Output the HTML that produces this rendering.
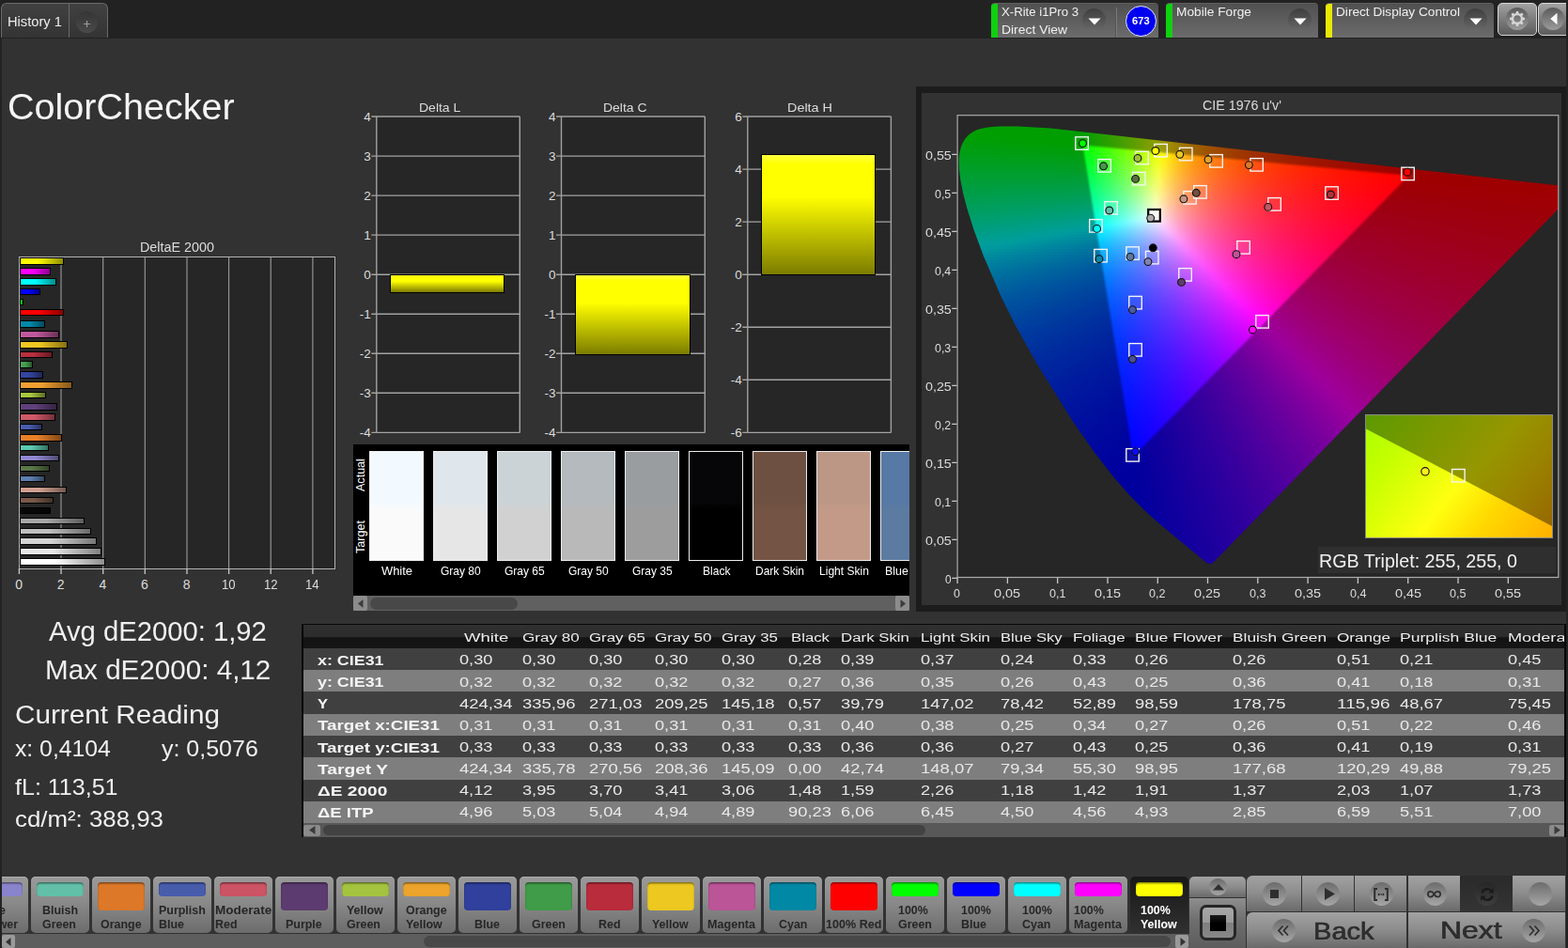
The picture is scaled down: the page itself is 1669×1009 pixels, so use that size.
<!DOCTYPE html>
<html lang="en"><head><meta charset="utf-8"><title>ColorChecker</title>
<style>
html,body{margin:0;padding:0}
body{width:1669px;height:1009px;background:#323232;position:relative;font-family:"Liberation Sans",sans-serif;color:#e6e6e6}
div,span.t,i,svg{position:absolute}
i{display:block}
.t{white-space:nowrap;line-height:1;transform-origin:0 0}
.cl{overflow:hidden}
#r{left:0;top:0;width:1669px;height:1009px;overflow:hidden;background:#323232}
svg{overflow:visible}

.tab{background:linear-gradient(#414141,#343434);border:1px solid #6a6a6a;border-bottom:none;box-sizing:border-box}
.dev{background:linear-gradient(#505050,#6c6c6c);border-radius:4px 4px 0 0;box-sizing:border-box;border-top:1px solid #5e5e5e;overflow:hidden}
.rb{border-radius:50%;background:linear-gradient(#3e3e3e,#6a6a6a)}

.pb{background:linear-gradient(#9a9a9a,#8a8a8a 45%,#6c6c6c);border-radius:5px;box-shadow:inset 0 1px 0 #adadad}
.sw{border-radius:4px;box-shadow:inset 0 1.5px 1.5px rgba(0,0,0,.45)}
.cb{background:linear-gradient(#a2a2a2,#8c8c8c 50%,#6a6a6a)}
.ci{border-radius:50%;background:linear-gradient(#6c6c6c,#a6a6a6)}
</style></head>
<body>
<div id="r">
<!-- p_frame -->
<div style="left:0px;top:0px;width:1669px;height:41px;background:#222"></div>
<!-- p_top -->
<div class="tab" style="left:1px;top:3px;width:73px;height:37px;border-radius:6px 0 0 0;border-right:none"></div><div class="tab" style="left:73px;top:3px;width:42px;height:37px;border-radius:0 6px 0 0"></div><div style="left:80.5px;top:12px;width:23px;height:23px;border-radius:50%;background:linear-gradient(#353535,#4a4a4a)"></div><span class="t" style="left:8.0px;top:16.2px;font-size:14.2px;color:#ececec;transform:scaleX(1.035);">History 1</span><svg width="9" height="9" style="left:88px;top:21px" viewBox="0 0 9 9"><path d="M4.5 1v7M1 4.5h7" stroke="#999" stroke-width="1.2"/></svg><div class="dev" style="left:1055px;top:3px;width:178px;height:37px;"><div style="left:0;top:0;width:7px;height:38px;background:#10d010"></div><div style="left:132px;top:4px;width:1px;height:34px;background:#555"></div><div style="left:133px;top:4px;width:1px;height:34px;background:#7a7a7a"></div></div><div class="rb" style="left:1152px;top:9px;width:25px;height:25px;"></div><svg width="14" height="8" style="left:1157.5px;top:18.5px" viewBox="0 0 14 8"><path d="M0.5 0.5h13L7 7.5z" fill="#fff"/></svg><span class="t" style="left:1066.0px;top:5.8px;font-size:13.5px;color:#f0f0f0;transform:scaleX(0.976);">X-Rite i1Pro 3</span><span class="t" style="left:1066.0px;top:24.6px;font-size:13.5px;color:#f0f0f0;transform:scaleX(1.029);">Direct View</span><div style="left:1197.5px;top:5.5px;width:33px;height:33px;border-radius:50%;background:#0000f0;border:1.5px solid #e8e8ff;box-sizing:border-box"></div><span class="t" style="left:1205.0px;top:16.2px;font-size:11.6px;font-weight:700;color:#fff;transform:scaleX(0.961);">673</span><div class="dev" style="left:1241px;top:3px;width:162px;height:37px;"><div style="left:0;top:0;width:7px;height:38px;background:#10d010"></div></div><span class="t" style="left:1252.0px;top:5.8px;font-size:13.5px;color:#f0f0f0;transform:scaleX(1.015);">Mobile Forge</span><div class="rb" style="left:1371px;top:9px;width:25px;height:25px;"></div><svg width="14" height="8" style="left:1376.5px;top:18.5px" viewBox="0 0 14 8"><path d="M0.5 0.5h13L7 7.5z" fill="#fff"/></svg><div class="dev" style="left:1411px;top:3px;width:179px;height:37px;"><div style="left:0;top:0;width:7px;height:38px;background:#e8e800"></div></div><span class="t" style="left:1422.0px;top:5.8px;font-size:13.5px;color:#f0f0f0;transform:scaleX(1.011);">Direct Display Control</span><div class="rb" style="left:1558px;top:9px;width:25px;height:25px;"></div><svg width="14" height="8" style="left:1563.5px;top:18.5px" viewBox="0 0 14 8"><path d="M0.5 0.5h13L7 7.5z" fill="#fff"/></svg><div style="left:1594px;top:3px;width:41.8px;height:35px;border-radius:5px;border:1.2px solid #d6d6d6;box-sizing:border-box;background:linear-gradient(#a2a2a2,#808080 45%,#5c5c5c)"></div><div style="left:1602.8px;top:8.3px;width:24px;height:24px;border-radius:50%;background:linear-gradient(#5a5a5a,#9c9c9c)"></div><svg width="18" height="18" style="left:1606px;top:11.1px" viewBox="-9 -9 18 18"><g fill="#d6d6d6"><path d="M-1.9 -5.2L-1 -8h2l.9 2.800z" transform="rotate(0)"/><path d="M-1.9 -5.2L-1 -8h2l.9 2.800z" transform="rotate(45)"/><path d="M-1.9 -5.2L-1 -8h2l.9 2.800z" transform="rotate(90)"/><path d="M-1.9 -5.2L-1 -8h2l.9 2.800z" transform="rotate(135)"/><path d="M-1.9 -5.2L-1 -8h2l.9 2.800z" transform="rotate(180)"/><path d="M-1.9 -5.2L-1 -8h2l.9 2.800z" transform="rotate(225)"/><path d="M-1.9 -5.2L-1 -8h2l.9 2.800z" transform="rotate(270)"/><path d="M-1.9 -5.2L-1 -8h2l.9 2.800z" transform="rotate(315)"/></g><circle r="4.9" fill="none" stroke="#d6d6d6" stroke-width="2.2"/></svg><div style="left:1636.9px;top:3px;width:42px;height:35px;border-radius:5px;border:1.2px solid #d6d6d6;box-sizing:border-box;background:linear-gradient(#a2a2a2,#808080 45%,#5c5c5c)"></div><div style="left:1641.4px;top:8.3px;width:24px;height:24px;border-radius:50%;background:linear-gradient(#5a5a5a,#9c9c9c)"></div><svg width="8" height="14" style="left:1649.8px;top:12.8px" viewBox="0 0 8 14"><path d="M7.500 .7v12.600L.3 7z" fill="#fff"/></svg>
<!-- p_left -->
<span class="t" style="left:7.8px;top:96.1px;font-size:37.9px;color:#f4f4f4;transform:scaleX(1.043);">ColorChecker</span><span class="t" style="left:148.6px;top:255.9px;font-size:14px;color:#dcdcdc;transform:scaleX(1.025);">DeltaE 2000</span><div style="left:20px;top:273px;width:335px;height:331px;background:#262626;border:1px solid #b2b2b2;box-sizing:content-box"></div><span class="t" style="left:16.2px;top:614.6px;font-size:14px;color:#dcdcdc;">0</span><span class="t" style="left:60.8px;top:614.6px;font-size:14px;color:#dcdcdc;">2</span><span class="t" style="left:105.5px;top:614.6px;font-size:14px;color:#dcdcdc;">4</span><span class="t" style="left:150.1px;top:614.6px;font-size:14px;color:#dcdcdc;">6</span><span class="t" style="left:194.8px;top:614.6px;font-size:14px;color:#dcdcdc;">8</span><span class="t" style="left:236.0px;top:614.6px;font-size:14px;color:#dcdcdc;transform:scaleX(0.938);">10</span><span class="t" style="left:280.6px;top:614.6px;font-size:14px;color:#dcdcdc;transform:scaleX(0.938);">12</span><span class="t" style="left:325.3px;top:614.6px;font-size:14px;color:#dcdcdc;transform:scaleX(0.938);">14</span><svg width="380" height="400" style="left:0;top:240px" viewBox="0 240 380 400"><path d="M65.0 274v331M109.7 274v331M154.3 274v331M199.0 274v331M243.6 274v331M288.2 274v331M332.9 274v331" stroke="#9c9c9c" stroke-width="1.1"/><path d="M20.4 605v6M65.0 605v6M109.7 605v6M154.3 605v6M199.0 605v6M243.6 605v6M288.2 605v6M332.9 605v6" stroke="#c8c8c8" stroke-width="1.3"/></svg><div style="left:21px;top:274.1px;width:47.4px;height:7.6px;box-sizing:border-box;border:1px solid #000;background:linear-gradient(90deg,#ffff00 40%,#8e8e00)"></div><div style="left:21px;top:285.0px;width:32.5px;height:7.6px;box-sizing:border-box;border:1px solid #000;background:linear-gradient(90deg,#ff00ff 40%,#8e008e)"></div><div style="left:21px;top:296.0px;width:38.5px;height:7.6px;box-sizing:border-box;border:1px solid #000;background:linear-gradient(90deg,#00ffff 40%,#008e8e)"></div><div style="left:21px;top:306.9px;width:21.6px;height:7.6px;box-sizing:border-box;border:1px solid #000;background:linear-gradient(90deg,#0000ff 40%,#00008e)"></div><div style="left:21px;top:317.8px;width:3.6px;height:7.6px;box-sizing:border-box;border:1px solid #000;background:linear-gradient(90deg,#00ff00 40%,#008e00)"></div><div style="left:21px;top:328.7px;width:46.8px;height:7.6px;box-sizing:border-box;border:1px solid #000;background:linear-gradient(90deg,#ff0000 40%,#8e0000)"></div><div style="left:21px;top:341.0px;width:26.6px;height:7.6px;box-sizing:border-box;border:1px solid #000;background:linear-gradient(90deg,#0088a8 40%,#004c5e)"></div><div style="left:21px;top:352.0px;width:42.4px;height:7.6px;box-sizing:border-box;border:1px solid #000;background:linear-gradient(90deg,#c0589c 40%,#6b3157)"></div><div style="left:21px;top:363.0px;width:51.3px;height:7.6px;box-sizing:border-box;border:1px solid #000;background:linear-gradient(90deg,#f0c822 40%,#867013)"></div><div style="left:21px;top:373.8px;width:34.5px;height:7.6px;box-sizing:border-box;border:1px solid #000;background:linear-gradient(90deg,#b83040 40%,#671a23)"></div><div style="left:21px;top:384.4px;width:13.9px;height:7.6px;box-sizing:border-box;border:1px solid #000;background:linear-gradient(90deg,#46a050 40%,#27592c)"></div><div style="left:21px;top:395.0px;width:24.8px;height:7.6px;box-sizing:border-box;border:1px solid #000;background:linear-gradient(90deg,#3444a0 40%,#1d2659)"></div><div style="left:21px;top:406.2px;width:55.7px;height:7.6px;box-sizing:border-box;border:1px solid #000;background:linear-gradient(90deg,#f0a030 40%,#86591a)"></div><div style="left:21px;top:416.9px;width:27.6px;height:7.6px;box-sizing:border-box;border:1px solid #000;background:linear-gradient(90deg,#a8c840 40%,#5e7023)"></div><div style="left:21px;top:429.3px;width:39.7px;height:7.6px;box-sizing:border-box;border:1px solid #000;background:linear-gradient(90deg,#60407a 40%,#352344)"></div><div style="left:21px;top:440.2px;width:38.2px;height:7.6px;box-sizing:border-box;border:1px solid #000;background:linear-gradient(90deg,#d05868 40%,#74313a)"></div><div style="left:21px;top:450.9px;width:23.6px;height:7.6px;box-sizing:border-box;border:1px solid #000;background:linear-gradient(90deg,#4a5cb0 40%,#293362)"></div><div style="left:21px;top:462.0px;width:45.4px;height:7.6px;box-sizing:border-box;border:1px solid #000;background:linear-gradient(90deg,#e88028 40%,#814716)"></div><div style="left:21px;top:472.9px;width:30.5px;height:7.6px;box-sizing:border-box;border:1px solid #000;background:linear-gradient(90deg,#5cc8b0 40%,#337062)"></div><div style="left:21px;top:483.8px;width:42.4px;height:7.6px;box-sizing:border-box;border:1px solid #000;background:linear-gradient(90deg,#9088d0 40%,#504c74)"></div><div style="left:21px;top:494.7px;width:31.5px;height:7.6px;box-sizing:border-box;border:1px solid #000;background:linear-gradient(90deg,#5a7848 40%,#324328)"></div><div style="left:21px;top:505.6px;width:26.6px;height:7.6px;box-sizing:border-box;border:1px solid #000;background:linear-gradient(90deg,#5c80b0 40%,#334762)"></div><div style="left:21px;top:517.9px;width:50.4px;height:7.6px;box-sizing:border-box;border:1px solid #000;background:linear-gradient(90deg,#d0a090 40%,#745950)"></div><div style="left:21px;top:528.8px;width:35.5px;height:7.6px;box-sizing:border-box;border:1px solid #000;background:linear-gradient(90deg,#785848 40%,#433128)"></div><div style="left:21px;top:539.7px;width:32.9px;height:7.6px;box-sizing:border-box;border:1px solid #000;background:linear-gradient(90deg,#080808 40%,#040404)"></div><div style="left:21px;top:550.8px;width:68.6px;height:7.6px;box-sizing:border-box;border:1px solid #000;background:linear-gradient(90deg,#a8a8a8 40%,#5e5e5e)"></div><div style="left:21px;top:561.5px;width:75.5px;height:7.6px;box-sizing:border-box;border:1px solid #000;background:linear-gradient(90deg,#c0c0c0 40%,#6b6b6b)"></div><div style="left:21px;top:572.4px;width:81.5px;height:7.6px;box-sizing:border-box;border:1px solid #000;background:linear-gradient(90deg,#d4d4d4 40%,#767676)"></div><div style="left:21px;top:583.1px;width:87.4px;height:7.6px;box-sizing:border-box;border:1px solid #000;background:linear-gradient(90deg,#e8e8e8 40%,#818181)"></div><div style="left:21px;top:594.0px;width:91.4px;height:7.6px;box-sizing:border-box;border:1px solid #000;background:linear-gradient(90deg,#ffffff 40%,#8e8e8e)"></div><span class="t" style="left:51.5px;top:658.1px;font-size:28.8px;color:#f0f0f0;transform:scaleX(1.015);">Avg dE2000: 1,92</span><span class="t" style="left:47.7px;top:698.6px;font-size:28.8px;color:#f0f0f0;transform:scaleX(1.028);">Max dE2000: 4,12</span><span class="t" style="left:16.0px;top:746.2px;font-size:28.2px;color:#f0f0f0;transform:scaleX(1.054);">Current Reading</span><span class="t" style="left:16.0px;top:785.4px;font-size:24px;color:#f0f0f0;transform:scaleX(1.031);">x: 0,4104</span><span class="t" style="left:172.1px;top:785.4px;font-size:24px;color:#f0f0f0;transform:scaleX(1.041);">y: 0,5076</span><span class="t" style="left:16.0px;top:825.8px;font-size:24px;color:#f0f0f0;transform:scaleX(1.043);">fL: 113,51</span><span class="t" style="left:16.0px;top:859.8px;font-size:24px;color:#f0f0f0;transform:scaleX(1.076);">cd/m²: 388,93</span>
<!-- p_delta -->
<div style="left:400px;top:123px;width:152px;height:337px;background:#262626"></div><span class="t" style="left:387.3px;top:117.7px;font-size:13.5px;color:#dcdcdc;">4</span><span class="t" style="left:387.3px;top:159.7px;font-size:13.5px;color:#dcdcdc;">3</span><span class="t" style="left:387.3px;top:201.8px;font-size:13.5px;color:#dcdcdc;">2</span><span class="t" style="left:387.3px;top:243.8px;font-size:13.5px;color:#dcdcdc;">1</span><span class="t" style="left:387.3px;top:285.9px;font-size:13.5px;color:#dcdcdc;">0</span><span class="t" style="left:382.8px;top:327.9px;font-size:13.5px;color:#dcdcdc;">-1</span><span class="t" style="left:382.8px;top:370.0px;font-size:13.5px;color:#dcdcdc;">-2</span><span class="t" style="left:382.8px;top:412.0px;font-size:13.5px;color:#dcdcdc;">-3</span><span class="t" style="left:382.8px;top:454.1px;font-size:13.5px;color:#dcdcdc;">-4</span><svg width="220" height="400" style="left:360px;top:90px" viewBox="360 90 220 400"><path d="M395.3 124.0H553.3M395.3 166.1H553.3M395.3 208.1H553.3M395.3 250.1H553.3M395.3 292.2H553.3M395.3 334.2H553.3M395.3 376.3H553.3M395.3 418.3H553.3M395.3 460.4H553.3M400.8 124.0V460.4M553.3 124.0V460.4" stroke="#a2a2a2" stroke-width="1.4" fill="none"/></svg><div style="left:415px;top:291.5px;width:122px;height:20.5px;box-sizing:border-box;border:1px solid #000;background:linear-gradient(#ffff40 0%,#ffff00 8%,#ffff00 35%,#7c7c00 100%)"></div><span class="t" style="left:445.7px;top:107.5px;font-size:13.5px;color:#dcdcdc;transform:scaleX(1.036);">Delta L</span><div style="left:597px;top:123px;width:153px;height:337px;background:#262626"></div><span class="t" style="left:584.0px;top:117.7px;font-size:13.5px;color:#dcdcdc;">4</span><span class="t" style="left:584.0px;top:159.7px;font-size:13.5px;color:#dcdcdc;">3</span><span class="t" style="left:584.0px;top:201.8px;font-size:13.5px;color:#dcdcdc;">2</span><span class="t" style="left:584.0px;top:243.8px;font-size:13.5px;color:#dcdcdc;">1</span><span class="t" style="left:584.0px;top:285.9px;font-size:13.5px;color:#dcdcdc;">0</span><span class="t" style="left:579.5px;top:327.9px;font-size:13.5px;color:#dcdcdc;">-1</span><span class="t" style="left:579.5px;top:370.0px;font-size:13.5px;color:#dcdcdc;">-2</span><span class="t" style="left:579.5px;top:412.0px;font-size:13.5px;color:#dcdcdc;">-3</span><span class="t" style="left:579.5px;top:454.1px;font-size:13.5px;color:#dcdcdc;">-4</span><svg width="220" height="400" style="left:557px;top:90px" viewBox="557 90 220 400"><path d="M592.0 124.0H750.3M592.0 166.1H750.3M592.0 208.1H750.3M592.0 250.1H750.3M592.0 292.2H750.3M592.0 334.2H750.3M592.0 376.3H750.3M592.0 418.3H750.3M592.0 460.4H750.3M597.5 124.0V460.4M750.3 124.0V460.4" stroke="#a2a2a2" stroke-width="1.4" fill="none"/></svg><div style="left:612px;top:291.5px;width:123px;height:86.0px;box-sizing:border-box;border:1px solid #000;background:linear-gradient(#ffff40 0%,#ffff00 8%,#ffff00 35%,#7c7c00 100%)"></div><span class="t" style="left:641.5px;top:107.5px;font-size:13.5px;color:#dcdcdc;transform:scaleX(1.033);">Delta C</span><div style="left:795px;top:123px;width:153px;height:337px;background:#262626"></div><span class="t" style="left:782.3px;top:117.7px;font-size:13.5px;color:#dcdcdc;">6</span><span class="t" style="left:782.3px;top:173.7px;font-size:13.5px;color:#dcdcdc;">4</span><span class="t" style="left:782.3px;top:229.8px;font-size:13.5px;color:#dcdcdc;">2</span><span class="t" style="left:782.3px;top:285.9px;font-size:13.5px;color:#dcdcdc;">0</span><span class="t" style="left:777.8px;top:341.9px;font-size:13.5px;color:#dcdcdc;">-2</span><span class="t" style="left:777.8px;top:398.0px;font-size:13.5px;color:#dcdcdc;">-4</span><span class="t" style="left:777.8px;top:454.1px;font-size:13.5px;color:#dcdcdc;">-6</span><svg width="220" height="400" style="left:755px;top:90px" viewBox="755 90 220 400"><path d="M790.3 124.0H948.4M790.3 180.1H948.4M790.3 236.1H948.4M790.3 292.2H948.4M790.3 348.3H948.4M790.3 404.3H948.4M790.3 460.4H948.4M795.8 124.0V460.4M948.4 124.0V460.4" stroke="#a2a2a2" stroke-width="1.4" fill="none"/></svg><div style="left:810px;top:164px;width:122px;height:128.5px;box-sizing:border-box;border:1px solid #000;background:linear-gradient(#ffff40 0%,#ffff00 8%,#ffff00 35%,#7c7c00 100%)"></div><span class="t" style="left:838.0px;top:107.5px;font-size:13.5px;color:#dcdcdc;transform:scaleX(1.066);">Delta H</span>
<!-- p_swatch -->
<div style="left:376px;top:473px;width:592px;height:177px;background:#000;overflow:hidden"><div style="left:17px;top:7px;width:58px;height:117px;box-sizing:border-box;border:1px solid #ececec;background:linear-gradient(#f3faff 0%,#f3faff 46%,#fafafa 54%,#fafafa 100%)"></div><span class="t" style="left:29.8px;top:128.0px;font-size:13px;color:#fff;transform:scaleX(0.993);">White</span><div style="left:85px;top:7px;width:58px;height:117px;box-sizing:border-box;border:1px solid #ececec;background:linear-gradient(#dfe7ec 0%,#dfe7ec 46%,#e6e6e6 54%,#e6e6e6 100%)"></div><span class="t" style="left:92.9px;top:128.0px;font-size:13px;color:#fff;transform:scaleX(0.923);">Gray 80</span><div style="left:153px;top:7px;width:58px;height:117px;box-sizing:border-box;border:1px solid #ececec;background:linear-gradient(#ccd3d7 0%,#ccd3d7 46%,#d1d1d1 54%,#d1d1d1 100%)"></div><span class="t" style="left:161.0px;top:128.0px;font-size:13px;color:#fff;transform:scaleX(0.923);">Gray 65</span><div style="left:221px;top:7px;width:58px;height:117px;box-sizing:border-box;border:1px solid #ececec;background:linear-gradient(#b4babd 0%,#b4babd 46%,#b9b9b9 54%,#b9b9b9 100%)"></div><span class="t" style="left:229.0px;top:128.0px;font-size:13px;color:#fff;transform:scaleX(0.923);">Gray 50</span><div style="left:289px;top:7px;width:58px;height:117px;box-sizing:border-box;border:1px solid #ececec;background:linear-gradient(#999da0 0%,#999da0 46%,#9d9d9d 54%,#9d9d9d 100%)"></div><span class="t" style="left:296.9px;top:128.0px;font-size:13px;color:#fff;transform:scaleX(0.923);">Gray 35</span><div style="left:357px;top:7px;width:58px;height:117px;box-sizing:border-box;border:1px solid #ececec;background:linear-gradient(#060609 0%,#060609 46%,#000000 54%,#000000 100%)"></div><span class="t" style="left:371.6px;top:128.0px;font-size:13px;color:#fff;transform:scaleX(0.928);">Black</span><div style="left:425px;top:7px;width:58px;height:117px;box-sizing:border-box;border:1px solid #ececec;background:linear-gradient(#6e5042 0%,#6e5042 46%,#745444 54%,#745444 100%)"></div><span class="t" style="left:428.3px;top:128.0px;font-size:13px;color:#fff;transform:scaleX(0.923);">Dark Skin</span><div style="left:493px;top:7px;width:58px;height:117px;box-sizing:border-box;border:1px solid #ececec;background:linear-gradient(#bd9785 0%,#bd9785 46%,#c39a88 54%,#c39a88 100%)"></div><span class="t" style="left:495.8px;top:128.0px;font-size:13px;color:#fff;transform:scaleX(0.928);">Light Skin</span><div style="left:561px;top:7px;width:58px;height:117px;box-sizing:border-box;border:1px solid #ececec;background:linear-gradient(#5679a5 0%,#5679a5 46%,#5b7ba0 54%,#5b7ba0 100%)"></div><span class="t" style="left:565.8px;top:128.0px;font-size:13px;color:#fff;transform:scaleX(0.955);">Blue Sky</span><span class="t" style="left:0.9px;top:50.3px;font-size:13.5px;color:#fff;transform-origin:0 0;transform:rotate(-90deg) scaleX(.93)">Actual</span><span class="t" style="left:0.9px;top:116.3px;font-size:13.5px;color:#fff;transform-origin:0 0;transform:rotate(-90deg) scaleX(.93)">Target</span><div style="left:0;top:161px;width:592px;height:16px;background:#606060"></div><div style="left:0;top:161px;width:15px;height:16px;background:#8c8c8c;border-radius:2px"></div><div style="left:577px;top:161px;width:15px;height:16px;background:#8c8c8c;border-radius:2px"></div><svg width="6" height="9" style="left:5px;top:164.5px" viewBox="0 0 6 9"><path d="M5.5 0v9L0 4.5z" fill="#3c3c3c"/></svg><svg width="6" height="9" style="left:582px;top:164.5px" viewBox="0 0 6 9"><path d="M.5 0v9L6 4.5z" fill="#3c3c3c"/></svg><div style="left:18px;top:162.5px;width:157px;height:13px;background:#484848;border-radius:6.5px"></div></div>
<!-- p_cie -->
<div style="left:974.5px;top:92px;width:694px;height:559px;background:#1c1c1c"></div><div style="left:981.3px;top:99.2px;width:680.5px;height:544.6px;background:#323232"></div><div style="left:1019px;top:123px;width:640px;height:492px;background:#262626"></div><div class="cl" style="left:1019px;top:123px;width:640px;height:492px"><div style="left:0;top:0;width:640px;height:492px;filter:blur(.5px)"><div class="cl" style="left:0;top:0;width:640px;height:492px;clip-path:polygon(271.6px 476.4px,266.8px 476.9px,262.7px 474.1px,255.1px 467.5px,212.8px 432.4px,198.0px 419.0px,183.9px 404.7px,167.4px 386.0px,145.9px 358.4px,122.9px 325.6px,83.4px 261.9px,61.4px 222.6px,45.9px 191.2px,28.1px 149.9px,17.6px 121.8px,10.1px 97.9px,6.3px 83.4px,3.4px 68.7px,2.1px 58.8px,1.8px 53.8px,1.7px 48.7px,1.9px 43.7px,2.6px 38.7px,3.8px 33.8px,5.6px 29.2px,8.2px 24.8px,11.5px 21.0px,15.5px 17.9px,20.0px 15.6px,24.7px 14.0px,29.6px 13.0px,34.6px 12.3px,44.6px 11.6px,64.6px 11.6px,99.5px 13.4px,636.1px 74.1px,646.0px 74.9px,651.0px 75.6px,656.2px 77.0px,662.9px 75.5px)"><i style="top:10px;left:21px;width:87px;height:3px;background:linear-gradient(90deg,#009e00,#009e00,#009e00,#009e00,#009e00,#009e00,#009e00)"></i><i style="top:13px;left:14px;width:120px;height:3px;background:linear-gradient(90deg,#009e00,#009e00,#009e00,#009e00,#009e00,#009e00,#009e00,#009e00,#009e00,#059e00)"></i><i style="top:16px;left:9px;width:152px;height:3px;background:linear-gradient(90deg,#009e00,#009e00,#009e00,#009e00,#009e00,#009e00,#009e00,#009e00,#009e00,#039e00,#179e00,#2d9e00)"></i><i style="top:19px;left:6px;width:182px;height:3px;background:linear-gradient(90deg,#009e01,#009e01,#009e00,#009e00,#009e00,#009e00,#009e00,#009e00,#009e00,#019e00,#159e00,#2b9e00,#429e00,#5c9e00)"></i><i style="top:22px;left:4px;width:210px;height:3px;background:linear-gradient(90deg,#009e04,#009e03,#009e02,#009e01,#009e01,#009e00,#009e00,#009e00,#009e00,#009e00,#119e00,#279e00,#3f9e00,#589e00,#749e00,#929e00)"></i><i style="top:25px;left:2px;width:239px;height:3px;background:linear-gradient(90deg,#009e07,#009e06,#009e05,#009e04,#009e03,#009e02,#009e01,#009e00,#009e00,#009e00,#0f9e00,#249e00,#3c9e00,#569e00,#729e00,#909e00,#9e8d00,#9e7400)"></i><i style="top:28px;left:1px;width:266px;height:3px;background:linear-gradient(90deg,#009e0a,#009e09,#009e08,#009e07,#009e06,#009e05,#009e03,#009e02,#009e01,#009e01,#0c9e00,#219e00,#399e00,#529e00,#6e9e00,#8d9e00,#9e9000,#9e7700,#9e6400,#9e5400)"></i><i style="top:31px;left:0px;width:294px;height:3px;background:linear-gradient(90deg,#009e0e,#009e0d,#009e0c,#009e0b,#009e09,#009e08,#009e07,#009e06,#009e04,#009e03,#099e02,#1f9e01,#379e00,#509e00,#6c9e00,#8b9e00,#9e9100,#9e7800,#9e6400,#9e5500,#9e4800,#9e3e00)"></i><i style="top:34px;left:0px;width:320px;height:3px;background:linear-gradient(90deg,#009e11,#009e10,#009e0f,#009e0e,#009e0d,#009e0c,#009e0b,#009e09,#009e08,#009e07,#079e05,#1d9e04,#359e02,#4e9e01,#6a9e00,#889e00,#9e9300,#9e7900,#9e6500,#9e5600,#9e4900,#9e3e00,#9e3600,#9e2e00)"></i><i style="top:37px;left:0px;width:347px;height:3px;background:linear-gradient(90deg,#009e14,#009e13,#009e12,#009e11,#009e10,#009e0f,#009e0e,#009e0d,#009e0c,#009e0b,#069e09,#1c9e08,#349e06,#4d9e05,#699e03,#889e02,#9e9401,#9e7900,#9e6500,#9e5500,#9e4900,#9e3e00,#9e3500,#9e2e00,#9e2800,#9e2200)"></i><i style="top:40px;left:0px;width:373px;height:3px;background:linear-gradient(90deg,#009e17,#009e16,#009e16,#009e15,#009e14,#009e13,#009e12,#009e11,#009e10,#009e0f,#059e0e,#1a9e0c,#329e0b,#4c9e09,#679e08,#869e06,#9e9504,#9e7b02,#9e6601,#9e5600,#9e4900,#9e3f00,#9e3600,#9e2e00,#9e2800,#9e2200,#9e1d00,#9e1900)"></i><i style="top:43px;left:0px;width:400px;height:3px;background:linear-gradient(90deg,#009e1a,#009e1a,#009e19,#009e18,#009e18,#009e17,#009e16,#009e15,#009e14,#009e13,#049e12,#199e11,#319e10,#4b9e0e,#679e0d,#869e0b,#9e9609,#9e7a06,#9e6603,#9e5602,#9e4901,#9e3e00,#9e3500,#9e2e00,#9e2700,#9e2200,#9e1d00,#9e1900,#9e1500,#9e1100)"></i><i style="top:46px;left:0px;width:426px;height:3px;background:linear-gradient(90deg,#009e1d,#009e1d,#009e1c,#009e1c,#009e1b,#009e1a,#009e1a,#009e19,#009e18,#009e17,#099e16,#209e15,#3a9e14,#559e13,#739e11,#959e10,#9e870c,#9e6f08,#9e5c06,#9e4d04,#9e4202,#9e3801,#9e3001,#9e2900,#9e2300,#9e1e00,#9e1900,#9e1500,#9e1100,#9e0e00,#9e0b00)"></i><i style="top:49px;left:0px;width:453px;height:3px;background:linear-gradient(90deg,#009e21,#009e20,#009e20,#009e1f,#009e1f,#009e1e,#009e1e,#009e1d,#009e1c,#009e1b,#089e1b,#1f9e1a,#389e19,#549e18,#729e17,#949e15,#9e8811,#9e6f0d,#9e5c0a,#9e4d07,#9e4205,#9e3804,#9e3002,#9e2901,#9e2301,#9e1d00,#9e1900,#9e1500,#9e1100,#9e0e00,#9e0b00,#9e0800,#9e0600)"></i><i style="top:52px;left:0px;width:479px;height:3px;background:linear-gradient(90deg,#009e24,#009e24,#009e23,#009e23,#009e22,#009e22,#009e22,#009e21,#009e21,#009e20,#069e1f,#1d9e1f,#379e1e,#529e1d,#709e1c,#929e1b,#9e8917,#9e7012,#9e5d0e,#9e4e0b,#9e4208,#9e3806,#9e3005,#9e2903,#9e2302,#9e1d01,#9e1901,#9e1500,#9e1100,#9e0e00,#9e0b00,#9e0800,#9e0600,#9e0400,#9e0200)"></i><i style="top:55px;left:0px;width:506px;height:3px;background:linear-gradient(90deg,#009e27,#009e27,#009e27,#009e27,#009e26,#009e26,#009e26,#009e25,#009e25,#009e24,#059e24,#1c9e23,#359e23,#519e22,#709e22,#919e21,#9e891c,#9e7016,#9e5d12,#9e4e0e,#9e420c,#9e3809,#9e2f07,#9e2806,#9e2204,#9e1d03,#9e1902,#9e1401,#9e1101,#9e0e00,#9e0b00,#9e0800,#9e0600,#9e0300,#9e0100,#9e0000,#9e0000)"></i><i style="top:58px;left:0px;width:533px;height:3px;background:linear-gradient(90deg,#009e2b,#009e2b,#009e2a,#009e2a,#009e2a,#009e2a,#009e2a,#009e2a,#009e29,#009e29,#049e29,#1b9e28,#349e28,#509e28,#6f9e27,#909e27,#9e8a22,#9e701b,#9e5d16,#9e4e12,#9e410f,#9e370c,#9e2f0a,#9e2808,#9e2207,#9e1d05,#9e1804,#9e1403,#9e1102,#9e0d01,#9e0a01,#9e0800,#9e0500,#9e0300,#9e0100,#9e0000,#9e0000,#9e0000,#9e0000)"></i><i style="top:61px;left:0px;width:559px;height:3px;background:linear-gradient(90deg,#009e2e,#009e2e,#009e2e,#009e2e,#009e2e,#009e2e,#009e2e,#009e2e,#009e2e,#009e2e,#039e2e,#199e2d,#339e2d,#4f9e2d,#6d9e2d,#8f9e2d,#9e8b27,#9e7120,#9e5d1a,#9e4e16,#9e4212,#9e380f,#9e2f0d,#9e280b,#9e2209,#9e1d08,#9e1806,#9e1405,#9e1004,#9e0d03,#9e0a02,#9e0802,#9e0501,#9e0301,#9e0100,#9e0000,#9e0000,#9e0000,#9e0000,#9e0000,#9e0000)"></i><i style="top:64px;left:0px;width:586px;height:3px;background:linear-gradient(90deg,#009e32,#009e32,#009e32,#009e32,#009e32,#009e32,#009e32,#009e32,#009e32,#009e32,#029e32,#189e33,#329e33,#4e9e33,#6d9e33,#8f9e33,#9e8b2d,#9e7025,#9e5d1e,#9e4d1a,#9e4116,#9e3712,#9e2f10,#9e280d,#9e220c,#9e1c0a,#9e1808,#9e1407,#9e1006,#9e0d05,#9e0a04,#9e0703,#9e0502,#9e0302,#9e0101,#9e0001,#9e0000,#9e0000,#9e0000,#9e0000,#9e0000,#9e0000,#9e0000)"></i><i style="top:67px;left:0px;width:612px;height:3px;background:linear-gradient(90deg,#009e35,#009e35,#009e36,#009e36,#009e36,#009e36,#009e36,#009e37,#009e37,#009e37,#019e37,#179e38,#319e38,#4d9e39,#6c9e39,#8e9e39,#9e8b33,#9e712a,#9e5d23,#9e4d1d,#9e4119,#9e3716,#9e2f13,#9e2710,#9e210e,#9e1c0c,#9e180a,#9e1309,#9e1008,#9e0d07,#9e0a06,#9e0705,#9e0504,#9e0203,#9e0002,#9e0002,#9e0001,#9e0001,#9e0000,#9e0000,#9e0000,#9e0000,#9e0000,#9e0000,#9e0000)"></i><i style="top:70px;left:0px;width:639px;height:3px;background:linear-gradient(90deg,#009e39,#009e39,#009e39,#009e3a,#009e3a,#009e3a,#009e3b,#009e3b,#009e3c,#009e3c,#019e3d,#169e3d,#309e3e,#4c9e3e,#6b9e3f,#8e9e40,#9e8b39,#9e702f,#9e5d27,#9e4d21,#9e411c,#9e3719,#9e2e15,#9e2713,#9e2110,#9e1c0e,#9e170d,#9e130b,#9e0f0a,#9e0c08,#9e0907,#9e0706,#9e0405,#9e0205,#9e0004,#9e0003,#9e0002,#9e0002,#9e0001,#9e0001,#9e0000,#9e0000,#9e0000,#9e0000,#9e0000,#9e0000,#9e0000)"></i><i style="top:73px;left:1px;width:639px;height:3px;background:linear-gradient(90deg,#009e3c,#009e3d,#009e3d,#009e3e,#009e3e,#009e3f,#009e3f,#009e40,#009e40,#009e41,#019e42,#179e43,#319e43,#4e9e44,#6e9e45,#919e47,#9e883e,#9e6e33,#9e5a2b,#9e4b25,#9e3f1f,#9e351b,#9e2d18,#9e2615,#9e2012,#9e1b10,#9e160e,#9e120d,#9e0f0b,#9e0b0a,#9e0909,#9e0608,#9e0407,#9e0206,#9e0005,#9e0004,#9e0004,#9e0003,#9e0002,#9e0002,#9e0001,#9e0001,#9e0000,#9e0000,#9e0000,#9e0000,#9e0000)"></i><i style="top:76px;left:1px;width:639px;height:3px;background:linear-gradient(90deg,#009e40,#009e41,#009e41,#009e42,#009e42,#009e43,#009e44,#009e44,#009e45,#009e46,#019e47,#179e48,#319e49,#4e9e4a,#6e9e4c,#919e4d,#9e8744,#9e6d38,#9e5a2f,#9e4a28,#9e3e23,#9e341e,#9e2c1b,#9e2517,#9e1f15,#9e1a13,#9e1610,#9e120f,#9e0e0d,#9e0b0c,#9e080a,#9e0609,#9e0308,#9e0107,#9e0006,#9e0006,#9e0005,#9e0004,#9e0003,#9e0003,#9e0002,#9e0002,#9e0001,#9e0001,#9e0001,#9e0000,#9e0000)"></i><i style="top:79px;left:2px;width:638px;height:3px;background:linear-gradient(90deg,#009e44,#009e44,#009e45,#009e46,#009e47,#009e47,#009e48,#009e49,#009e4a,#009e4b,#019e4c,#179e4e,#329e4f,#4f9e51,#709e52,#949e54,#9e8549,#9e6b3c,#9e5833,#9e492c,#9e3d26,#9e3321,#9e2b1d,#9e241a,#9e1f17,#9e1915,#9e1512,#9e1111,#9e0e0f,#9e0a0d,#9e080c,#9e050b,#9e030a,#9e0109,#9e0008,#9e0007,#9e0006,#9e0005,#9e0005,#9e0004,#9e0003,#9e0003,#9e0002,#9e0002,#9e0001,#9e0001,#9e0001)"></i><i style="top:82px;left:2px;width:638px;height:3px;background:linear-gradient(90deg,#009e48,#009e48,#009e49,#009e4a,#009e4b,#009e4c,#009e4d,#009e4e,#009e4f,#009e50,#019e52,#179e53,#329e55,#4f9e57,#709e59,#949e5b,#9e844e,#9e6a41,#9e5737,#9e482f,#9e3c29,#9e3324,#9e2b20,#9e241c,#9e1e19,#9e1917,#9e1414,#9e1112,#9e0d11,#9e0a0f,#9e070e,#9e050c,#9e020b,#9e000a,#9e0009,#9e0008,#9e0007,#9e0006,#9e0006,#9e0005,#9e0004,#9e0004,#9e0003,#9e0003,#9e0002,#9e0002,#9e0001)"></i><i style="top:85px;left:3px;width:637px;height:3px;background:linear-gradient(90deg,#009e4b,#009e4c,#009e4d,#009e4e,#009e4f,#009e50,#009e52,#009e53,#009e54,#009e56,#019e58,#179e59,#339e5b,#519e5e,#729e60,#979e63,#9e8254,#9e6946,#9e563b,#9e4733,#9e3b2c,#9e3227,#9e2a23,#9e231f,#9e1d1c,#9e1819,#9e1416,#9e1014,#9e0c12,#9e0911,#9e070f,#9e040e,#9e020d,#9e000b,#9e000a,#9e0009,#9e0008,#9e0008,#9e0007,#9e0006,#9e0006,#9e0005,#9e0004,#9e0004,#9e0003,#9e0003,#9e0002)"></i><i style="top:88px;left:4px;width:636px;height:3px;background:linear-gradient(90deg,#009e4f,#009e50,#009e52,#009e53,#009e54,#009e55,#009e57,#009e58,#009e5a,#009e5c,#059e5e,#1f9e60,#3c9e62,#5c9e65,#7f9e68,#9e9566,#9e7653,#9e5f45,#9e4e3b,#9e4033,#9e362d,#9e2d28,#9e2523,#9e1f20,#9e1a1c,#9e151a,#9e1117,#9e0d15,#9e0a13,#9e0711,#9e0410,#9e020e,#9e000d,#9e000c,#9e000b,#9e000a,#9e0009,#9e0008,#9e0007,#9e0007,#9e0006,#9e0005,#9e0005,#9e0004,#9e0004,#9e0003)"></i><i style="top:91px;left:5px;width:635px;height:3px;background:linear-gradient(90deg,#009e53,#009e55,#009e56,#009e57,#009e59,#009e5a,#009e5c,#009e5e,#009e5f,#009e62,#059e64,#209e66,#3d9e69,#5e9e6c,#829e70,#9e936b,#9e7458,#9e5d4a,#9e4c3f,#9e3f37,#9e3430,#9e2c2a,#9e2426,#9e1e22,#9e191e,#9e141c,#9e1019,#9e0d17,#9e0915,#9e0613,#9e0411,#9e0210,#9e000f,#9e000d,#9e000c,#9e000b,#9e000a,#9e0009,#9e0009,#9e0008,#9e0007,#9e0006,#9e0006,#9e0005,#9e0005,#9e0004)"></i><i style="top:94px;left:5px;width:635px;height:3px;background:linear-gradient(90deg,#009e57,#009e59,#009e5a,#009e5c,#009e5d,#009e5f,#009e61,#009e63,#009e65,#009e67,#049e6a,#1f9e6d,#3d9e70,#5e9e73,#829e77,#9e9272,#9e735d,#9e5c4e,#9e4c43,#9e3e3a,#9e3433,#9e2b2d,#9e2428,#9e1e24,#9e1821,#9e141e,#9e101b,#9e0c19,#9e0917,#9e0615,#9e0313,#9e0111,#9e0010,#9e000f,#9e000e,#9e000c,#9e000b,#9e000a,#9e000a,#9e0009,#9e0008,#9e0007,#9e0007,#9e0006,#9e0006,#9e0005)"></i><i style="top:97px;left:6px;width:634px;height:3px;background:linear-gradient(90deg,#009e5c,#009e5d,#009e5f,#009e60,#009e62,#009e64,#009e66,#009e68,#009e6b,#009e6d,#059e70,#209e73,#3e9e77,#5f9e7b,#859e7f,#9e8f78,#9e7162,#9e5b52,#9e4a47,#9e3d3e,#9e3336,#9e2a30,#9e232b,#9e1d27,#9e1723,#9e1320,#9e0f1d,#9e0b1a,#9e0818,#9e0516,#9e0314,#9e0113,#9e0011,#9e0010,#9e000f,#9e000e,#9e000d,#9e000c,#9e000b,#9e000a,#9e0009,#9e0008,#9e0008,#9e0007,#9e0006,#9e0006)"></i><i style="top:100px;left:7px;width:633px;height:3px;background:linear-gradient(90deg,#009e60,#009e61,#009e63,#009e65,#009e67,#009e69,#009e6b,#009e6e,#009e70,#009e73,#059e77,#219e7a,#3f9e7e,#619e82,#879e87,#9e8d7d,#9e6f67,#9e5957,#9e494a,#9e3c41,#9e3139,#9e2933,#9e222d,#9e1c29,#9e1725,#9e1222,#9e0e1f,#9e0b1c,#9e081a,#9e0518,#9e0216,#9e0014,#9e0013,#9e0011,#9e0010,#9e000f,#9e000e,#9e000d,#9e000c,#9e000b,#9e000a,#9e0009,#9e0009,#9e0008,#9e0007,#9e0007)"></i><i style="top:103px;left:8px;width:632px;height:3px;background:linear-gradient(90deg,#009e64,#009e66,#009e68,#009e6a,#009e6c,#009e6e,#009e71,#009e73,#009e76,#009e7a,#069e7d,#229e81,#419e85,#639e8a,#8a9e90,#9e8a83,#9e6d6c,#9e575b,#9e474e,#9e3a44,#9e303c,#9e2836,#9e2130,#9e1b2b,#9e1627,#9e1124,#9e0e21,#9e0a1e,#9e071c,#9e041a,#9e0218,#9e0016,#9e0014,#9e0013,#9e0011,#9e0010,#9e000f,#9e000e,#9e000d,#9e000c,#9e000b,#9e000a,#9e000a,#9e0009,#9e0008,#9e0008)"></i><i style="top:106px;left:9px;width:629px;height:3px;background:linear-gradient(90deg,#009e68,#009e6a,#009e6c,#009e6f,#009e71,#009e73,#009e76,#009e79,#009e7c,#009e80,#069e84,#229e88,#419e8d,#649e92,#8a9e98,#9e898a,#9e6c71,#9e5760,#9e4652,#9e3a48,#9e3040,#9e2739,#9e2033,#9e1b2e,#9e152a,#9e1126,#9e0d23,#9e0a20,#9e071e,#9e041b,#9e0219,#9e0017,#9e0016,#9e0014,#9e0013,#9e0012,#9e0010,#9e000f,#9e000e,#9e000d,#9e000c,#9e000c,#9e000b,#9e000a,#9e0009,#9e0009)"></i><i style="top:109px;left:10px;width:625px;height:3px;background:linear-gradient(90deg,#009e6d,#009e6f,#009e71,#009e74,#009e76,#009e79,#009e7c,#009e7f,#009e83,#009e86,#059e8b,#219e8f,#409e94,#639d99,#879a9d,#9e8992,#9e6c78,#9e5665,#9e4657,#9e3a4c,#9e2f43,#9e273c,#9e2036,#9e1a31,#9e152c,#9e1129,#9e0d25,#9e0a22,#9e0720,#9e041d,#9e011b,#9e0019,#9e0017,#9e0016,#9e0014,#9e0013,#9e0012,#9e0011,#9e0010,#9e000f,#9e000e,#9e000d,#9e000c,#9e000b,#9e000a,#9e000a)"></i><i style="top:112px;left:11px;width:621px;height:3px;background:linear-gradient(90deg,#009e71,#009e74,#009e76,#009e79,#009e7c,#009e7f,#009e82,#009e86,#009e8a,#009e8e,#0b9e93,#289e98,#489c9c,#6a989e,#8c929e,#9e7e8f,#9e6377,#9e4f65,#9e4057,#9e354c,#9e2b44,#9e233c,#9e1d36,#9e1731,#9e122d,#9e0e29,#9e0b26,#9e0723,#9e0520,#9e021e,#9e001c,#9e001a,#9e0018,#9e0016,#9e0015,#9e0013,#9e0012,#9e0011,#9e0010,#9e000f,#9e000e,#9e000d,#9e000c,#9e000c,#9e000b)"></i><i style="top:115px;left:12px;width:617px;height:3px;background:linear-gradient(90deg,#009e76,#009e79,#009e7b,#009e7e,#009e81,#009e84,#009e88,#009e8c,#009e90,#009e95,#0a9e99,#279b9c,#45979e,#65919e,#858b9e,#9e7d96,#9e637d,#9e4f6a,#9e405c,#9e3450,#9e2b47,#9e2340,#9e1d39,#9e1734,#9e1230,#9e0e2c,#9e0a28,#9e0725,#9e0422,#9e0220,#9e001d,#9e001b,#9e001a,#9e0018,#9e0016,#9e0015,#9e0014,#9e0012,#9e0011,#9e0010,#9e000f,#9e000e,#9e000d,#9e000d,#9e000c)"></i><i style="top:118px;left:13px;width:613px;height:3px;background:linear-gradient(90deg,#009e7b,#009e7d,#009e80,#009e83,#009e87,#009e8a,#009e8e,#009e92,#009e96,#009d9b,#099a9d,#25969e,#42909e,#608a9e,#7e849e,#9b7b9c,#9e6283,#9e4f6f,#9e4060,#9e3455,#9e2b4b,#9e2343,#9e1c3d,#9e1737,#9e1232,#9e0e2e,#9e0a2a,#9e0727,#9e0424,#9e0222,#9e001f,#9e001d,#9e001b,#9e001a,#9e0018,#9e0016,#9e0015,#9e0014,#9e0013,#9e0012,#9e0010,#9e0010,#9e000f,#9e000e,#9e000d)"></i><i style="top:121px;left:14px;width:609px;height:3px;background:linear-gradient(90deg,#009e80,#009e82,#009e85,#009e89,#009e8c,#009e90,#009e94,#009e98,#009d9c,#00999e,#08949e,#238f9e,#3e899e,#5b839e,#787d9e,#96779e,#9e628a,#9e4f75,#9e4065,#9e3459,#9e2a4f,#9e2347,#9e1c40,#9e173a,#9e1235,#9e0e31,#9e0a2d,#9e0729,#9e0426,#9e0124,#9e0021,#9e001f,#9e001d,#9e001b,#9e001a,#9e0018,#9e0017,#9e0015,#9e0014,#9e0013,#9e0012,#9e0011,#9e0010,#9e000f,#9e000e)"></i><i style="top:124px;left:15px;width:605px;height:3px;background:linear-gradient(90deg,#009e85,#009e88,#009e8b,#009e8e,#009e92,#009e96,#009d9a,#009b9d,#00979e,#00929e,#0d8d9e,#27879e,#43829e,#5f7c9e,#7c769e,#996f9d,#9e5a88,#9e4874,#9e3a64,#9e2f58,#9e264f,#9e1f47,#9e1940,#9e143a,#9e0f35,#9e0b31,#9e082d,#9e052a,#9e0227,#9e0024,#9e0022,#9e001f,#9e001d,#9e001c,#9e001a,#9e0018,#9e0017,#9e0016,#9e0014,#9e0013,#9e0012,#9e0011,#9e0010,#9e000f)"></i><i style="top:127px;left:16px;width:601px;height:3px;background:linear-gradient(90deg,#009e89,#009e8d,#009e90,#009e94,#009e98,#009d9b,#009a9d,#00969e,#00919e,#008c9e,#0c879e,#25819e,#3f7c9e,#5a769e,#76709e,#936a9e,#9e5a8e,#9e4879,#9e3a69,#9e2f5d,#9e2652,#9e1f4a,#9e1943,#9e133d,#9e0f38,#9e0b33,#9e082f,#9e042c,#9e0229,#9e0026,#9e0023,#9e0021,#9e001f,#9e001d,#9e001b,#9e001a,#9e0018,#9e0017,#9e0016,#9e0014,#9e0013,#9e0012,#9e0011,#9e0010)"></i><i style="top:130px;left:17px;width:597px;height:3px;background:linear-gradient(90deg,#009e8f,#009e92,#009e96,#009e99,#009c9c,#00999e,#00959e,#00909e,#008b9e,#00869e,#0b819e,#237c9e,#3c779e,#56719e,#716b9e,#8c659e,#9e5995,#9e477f,#9e396e,#9e2e61,#9e2656,#9e1e4e,#9e1846,#9e1340,#9e0f3b,#9e0b36,#9e0732,#9e042e,#9e022b,#9e0028,#9e0025,#9e0023,#9e0021,#9e001f,#9e001d,#9e001b,#9e001a,#9e0018,#9e0017,#9e0016,#9e0015,#9e0013,#9e0012,#9e0012)"></i><i style="top:133px;left:18px;width:593px;height:3px;background:linear-gradient(90deg,#009e94,#009e97,#009d9b,#009c9d,#00989e,#00939e,#008f9e,#008a9e,#00859e,#00809e,#0f7b9e,#28759e,#41709e,#5a6a9e,#75659e,#905f9e,#9e5292,#9e417d,#9e346d,#9e2a60,#9e2256,#9e1b4d,#9e1546,#9e1040,#9e0c3b,#9e0836,#9e0532,#9e022e,#9e002b,#9e0028,#9e0026,#9e0023,#9e0021,#9e001f,#9e001d,#9e001c,#9e001a,#9e0019,#9e0017,#9e0016,#9e0015,#9e0014,#9e0013)"></i><i style="top:136px;left:19px;width:589px;height:3px;background:linear-gradient(90deg,#009e99,#009d9c,#009b9e,#00979e,#00929e,#008e9e,#00899e,#00859e,#00809e,#007b9e,#0e769e,#26719e,#3e6b9e,#56669e,#70609e,#8a5a9e,#9e5198,#9e4182,#9e3472,#9e2a64,#9e215a,#9e1b51,#9e1549,#9e1043,#9e0c3d,#9e0839,#9e0534,#9e0231,#9e002d,#9e002a,#9e0027,#9e0025,#9e0023,#9e0021,#9e001f,#9e001d,#9e001b,#9e001a,#9e0019,#9e0017,#9e0016,#9e0015,#9e0014)"></i><i style="top:139px;left:20px;width:585px;height:3px;background:linear-gradient(90deg,#009c9d,#009a9e,#00969e,#00919e,#008d9e,#00899e,#00849e,#00809e,#007b9e,#00769e,#0d719e,#246c9e,#3b679e,#53619e,#6b5c9e,#84569e,#9c509c,#9e4088,#9e3377,#9e2969,#9e215e,#9e1a54,#9e154d,#9e1046,#9e0c40,#9e083b,#9e0537,#9e0233,#9e002f,#9e002c,#9e0029,#9e0027,#9e0025,#9e0022,#9e0020,#9e001f,#9e001d,#9e001b,#9e001a,#9e0019,#9e0017,#9e0016,#9e0015)"></i><i style="top:142px;left:21px;width:581px;height:3px;background:linear-gradient(90deg,#00989e,#00959e,#00909e,#008c9e,#00889e,#00849e,#007f9e,#007b9e,#00769e,#00729e,#0c6d9e,#22689e,#38639e,#4f5d9e,#66589e,#7e539e,#974d9e,#9e408e,#9e337c,#9e296d,#9e2162,#9e1a58,#9e1450,#9e0f49,#9e0b43,#9e083e,#9e0439,#9e0235,#9e0032,#9e002e,#9e002b,#9e0029,#9e0026,#9e0024,#9e0022,#9e0020,#9e001e,#9e001d,#9e001b,#9e001a,#9e0019,#9e0017,#9e0016)"></i><i style="top:145px;left:22px;width:578px;height:3px;background:linear-gradient(90deg,#00939e,#008f9e,#008b9e,#00879e,#00839e,#007f9e,#007a9e,#00769e,#00719e,#006c9e,#10679e,#26629e,#3c5d9e,#53589e,#6b539e,#834d9e,#9a479d,#9e398b,#9e2e79,#9e246b,#9e1d60,#9e1657,#9e114f,#9e0d48,#9e0942,#9e053d,#9e0239,#9e0035,#9e0031,#9e002e,#9e002b,#9e0029,#9e0026,#9e0024,#9e0022,#9e0020,#9e001e,#9e001d,#9e001b,#9e001a,#9e0019,#9e0018)"></i><i style="top:148px;left:24px;width:573px;height:3px;background:linear-gradient(90deg,#008e9e,#008a9e,#00869e,#00829e,#007e9e,#007a9e,#00759e,#00719e,#006c9e,#00689e,#10639e,#255e9e,#3b599e,#51549e,#674f9e,#7f499e,#96449e,#9e398f,#9e2d7e,#9e246f,#9e1c64,#9e165a,#9e1152,#9e0c4b,#9e0845,#9e0540,#9e023b,#9e0037,#9e0033,#9e0030,#9e002d,#9e002a,#9e0028,#9e0026,#9e0024,#9e0022,#9e0020,#9e001e,#9e001d,#9e001b,#9e001a,#9e0019)"></i><i style="top:151px;left:25px;width:569px;height:3px;background:linear-gradient(90deg,#008a9e,#00869e,#00829e,#007e9e,#007a9e,#00769e,#00719e,#006d9e,#00689e,#00649e,#0f5f9e,#245b9e,#38569e,#4e519e,#634c9e,#7a469e,#90419e,#9e3895,#9e2d83,#9e2374,#9e1c68,#9e165e,#9e1055,#9e0c4e,#9e0848,#9e0542,#9e023e,#9e0039,#9e0036,#9e0032,#9e002f,#9e002c,#9e002a,#9e0027,#9e0025,#9e0023,#9e0022,#9e0020,#9e001e,#9e001d,#9e001b,#9e001a)"></i><i style="top:154px;left:26px;width:565px;height:3px;background:linear-gradient(90deg,#00859e,#00819e,#007d9e,#00799e,#00759e,#00719e,#006d9e,#00689e,#00649e,#015f9e,#135b9e,#27569e,#3c519e,#514c9e,#67479e,#7d429e,#943c9e,#9e3392,#9e2880,#9e1f72,#9e1866,#9e125d,#9e0d55,#9e094d,#9e0647,#9e0242,#9e003d,#9e0039,#9e0035,#9e0032,#9e002f,#9e002c,#9e002a,#9e0027,#9e0025,#9e0023,#9e0021,#9e0020,#9e001e,#9e001d,#9e001b)"></i><i style="top:157px;left:27px;width:561px;height:3px;background:linear-gradient(90deg,#00819e,#007d9e,#00799e,#00759e,#00719e,#006d9e,#00699e,#00659e,#00609e,#015c9e,#12579e,#26539e,#3a4e9e,#4e499e,#63449e,#793f9e,#8e3a9e,#9e3298,#9e2785,#9e1f76,#9e186a,#9e1260,#9e0d58,#9e0951,#9e054a,#9e0245,#9e0040,#9e003b,#9e0038,#9e0034,#9e0031,#9e002e,#9e002c,#9e0029,#9e0027,#9e0025,#9e0023,#9e0021,#9e0020,#9e001e,#9e001d)"></i><i style="top:160px;left:29px;width:556px;height:3px;background:linear-gradient(90deg,#007d9e,#00799e,#00759e,#00719e,#006d9e,#00699e,#00659e,#00619e,#005d9e,#01589e,#12549e,#254f9e,#384b9e,#4c469e,#60419e,#753c9e,#8a379e,#9d319b,#9e278a,#9e1e7a,#9e176e,#9e1264,#9e0d5b,#9e0953,#9e054d,#9e0247,#9e0042,#9e003e,#9e003a,#9e0036,#9e0033,#9e0030,#9e002d,#9e002b,#9e0029,#9e0027,#9e0025,#9e0023,#9e0021,#9e0020,#9e001e)"></i><i style="top:163px;left:30px;width:552px;height:3px;background:linear-gradient(90deg,#00799e,#00759e,#00719e,#006d9e,#00699e,#00659e,#00619e,#005d9e,#00589e,#03549e,#16509e,#294b9e,#3c469e,#50429e,#643d9e,#79389e,#8e339e,#9e2c99,#9e2287,#9e1a78,#9e146c,#9e0f62,#9e0a5a,#9e0653,#9e034c,#9e0047,#9e0042,#9e003d,#9e0039,#9e0036,#9e0033,#9e0030,#9e002d,#9e002b,#9e0028,#9e0026,#9e0024,#9e0023,#9e0021,#9e001f)"></i><i style="top:166px;left:31px;width:548px;height:3px;background:linear-gradient(90deg,#00759e,#00719e,#006e9e,#006a9e,#00669e,#00629e,#005e9e,#005a9e,#00559e,#03519e,#154d9e,#27489e,#3a449e,#4d3f9e,#603a9e,#74359e,#89309e,#9c2b9d,#9e228c,#9e1a7d,#9e1470,#9e0e66,#9e0a5d,#9e0656,#9e024f,#9e0049,#9e0044,#9e0040,#9e003c,#9e0038,#9e0035,#9e0032,#9e002f,#9e002c,#9e002a,#9e0028,#9e0026,#9e0024,#9e0022,#9e0021)"></i><i style="top:169px;left:32px;width:544px;height:3px;background:linear-gradient(90deg,#00719e,#006e9e,#006a9e,#00669e,#00639e,#005f9e,#005b9e,#00579e,#00529e,#024e9e,#134a9e,#25469e,#37419e,#4a3d9e,#5d389e,#70339e,#842e9e,#98299e,#9e2191,#9e1a81,#9e1374,#9e0e6a,#9e0961,#9e0559,#9e0252,#9e004c,#9e0047,#9e0042,#9e003e,#9e003a,#9e0037,#9e0034,#9e0031,#9e002e,#9e002c,#9e002a,#9e0028,#9e0026,#9e0024,#9e0022)"></i><i style="top:172px;left:34px;width:539px;height:3px;background:linear-gradient(90deg,#006e9e,#006a9e,#00669e,#00639e,#005f9e,#005b9e,#00579e,#00539e,#004f9e,#064a9e,#18469e,#2a429e,#3c3d9e,#4e399e,#61349e,#752f9e,#882a9e,#9b259d,#9e1d8d,#9e167e,#9e1072,#9e0b68,#9e075f,#9e0357,#9e0051,#9e004b,#9e0046,#9e0041,#9e003d,#9e003a,#9e0036,#9e0033,#9e0030,#9e002e,#9e002c,#9e0029,#9e0027,#9e0025,#9e0024)"></i><i style="top:175px;left:35px;width:535px;height:3px;background:linear-gradient(90deg,#006a9e,#00679e,#00639e,#005f9e,#005c9e,#00589e,#00549e,#00509e,#004c9e,#06489e,#17439e,#283f9e,#3a3b9e,#4c369e,#5e329e,#712d9e,#84289e,#97249e,#9e1c92,#9e1583,#9e0f76,#9e0a6b,#9e0662,#9e035b,#9e0054,#9e004e,#9e0048,#9e0044,#9e0040,#9e003c,#9e0038,#9e0035,#9e0032,#9e0030,#9e002d,#9e002b,#9e0029,#9e0027,#9e0025)"></i><i style="top:178px;left:36px;width:531px;height:3px;background:linear-gradient(90deg,#00679e,#00649e,#00609e,#005c9e,#00599e,#00559e,#00519e,#004d9e,#00499e,#05459e,#16419e,#263d9e,#37399e,#49349e,#5b309e,#6d2b9e,#7f279e,#92229e,#9e1c97,#9e1587,#9e0f7a,#9e0a6f,#9e0666,#9e025e,#9e0057,#9e0050,#9e004b,#9e0046,#9e0042,#9e003e,#9e003a,#9e0037,#9e0034,#9e0031,#9e002f,#9e002d,#9e002b,#9e0029,#9e0027)"></i><i style="top:181px;left:38px;width:526px;height:3px;background:linear-gradient(90deg,#00649e,#00609e,#005d9e,#00599e,#00569e,#00529e,#004e9e,#004a9e,#00479e,#05439e,#153f9e,#263b9e,#36369e,#47329e,#582e9e,#6a299e,#7c259e,#8e209e,#9d1b9b,#9e148b,#9e0e7e,#9e0a73,#9e0569,#9e0261,#9e0059,#9e0053,#9e004e,#9e0049,#9e0044,#9e0040,#9e003c,#9e0039,#9e0036,#9e0033,#9e0031,#9e002e,#9e002c,#9e002a,#9e0028)"></i><i style="top:184px;left:39px;width:522px;height:3px;background:linear-gradient(90deg,#00619e,#005d9e,#005a9e,#00569e,#00539e,#004f9e,#004b9e,#00479e,#00439e,#083f9e,#193b9e,#29379e,#3a339e,#4b2f9e,#5c2a9e,#6d269e,#7f219e,#921d9e,#9e1798,#9e1189,#9e0b7c,#9e0771,#9e0367,#9e005f,#9e0058,#9e0052,#9e004d,#9e0048,#9e0043,#9e003f,#9e003c,#9e0039,#9e0036,#9e0033,#9e0030,#9e002e,#9e002c,#9e002a)"></i><i style="top:187px;left:40px;width:519px;height:3px;background:linear-gradient(90deg,#005e9e,#005b9e,#00579e,#00549e,#00509e,#004c9e,#00499e,#00459e,#00419e,#083d9e,#18399e,#28359e,#38319e,#482d9e,#59299e,#6a249e,#7c209e,#8d1b9e,#9d169c,#9e108d,#9e0b7f,#9e0674,#9e026a,#9e0062,#9e005b,#9e0055,#9e004f,#9e004a,#9e0045,#9e0041,#9e003e,#9e003a,#9e0037,#9e0034,#9e0032,#9e002f,#9e002d,#9e002b)"></i><i style="top:190px;left:41px;width:515px;height:3px;background:linear-gradient(90deg,#005b9e,#00589e,#00559e,#00519e,#004e9e,#004a9e,#00469e,#00439e,#003f9e,#073b9e,#17379e,#26339e,#362f9e,#462b9e,#56279e,#67239e,#781e9e,#891a9e,#9a169e,#9e1091,#9e0a83,#9e0678,#9e026e,#9e0065,#9e005e,#9e0057,#9e0052,#9e004c,#9e0048,#9e0044,#9e0040,#9e003c,#9e0039,#9e0036,#9e0034,#9e0031,#9e002f,#9e002d)"></i><i style="top:193px;left:43px;width:510px;height:3px;background:linear-gradient(90deg,#00589e,#00559e,#00529e,#004e9e,#004b9e,#00479e,#00439e,#00409e,#003c9e,#0b389e,#1b349e,#2a309e,#3a2c9e,#4a289e,#5a249e,#6b1f9e,#7c1b9e,#8d179e,#9d129c,#9e0c8e,#9e0780,#9e0375,#9e006c,#9e0063,#9e005c,#9e0056,#9e0050,#9e004b,#9e0047,#9e0043,#9e003f,#9e003c,#9e0039,#9e0036,#9e0033,#9e0031,#9e002e)"></i><i style="top:196px;left:44px;width:506px;height:3px;background:linear-gradient(90deg,#00569e,#00529e,#004f9e,#004c9e,#00489e,#00459e,#00419e,#003d9e,#003a9e,#0b369e,#19329e,#292e9e,#382a9e,#48269e,#57229e,#681e9e,#781a9e,#89159e,#9a119e,#9e0c92,#9e0784,#9e0379,#9e006f,#9e0067,#9e005f,#9e0059,#9e0053,#9e004e,#9e0049,#9e0045,#9e0041,#9e003e,#9e003a,#9e0038,#9e0035,#9e0032,#9e0030)"></i><i style="top:199px;left:46px;width:501px;height:3px;background:linear-gradient(90deg,#00539e,#00509e,#004d9e,#00499e,#00469e,#00429e,#003f9e,#003b9e,#00389e,#0b349e,#19309e,#282c9e,#37299e,#46259e,#55219e,#651d9e,#75189e,#85149e,#96109e,#9e0b96,#9e0688,#9e027c,#9e0072,#9e006a,#9e0062,#9e005b,#9e0056,#9e0050,#9e004b,#9e0047,#9e0043,#9e0040,#9e003c,#9e0039,#9e0037,#9e0034,#9e0032)"></i><i style="top:202px;left:47px;width:497px;height:3px;background:linear-gradient(90deg,#00519e,#004d9e,#004a9e,#00479e,#00449e,#00409e,#003d9e,#00399e,#00369e,#0a329e,#182e9e,#262b9e,#35279e,#44239e,#531f9e,#621b9e,#71179e,#81139e,#910f9e,#9e0b9b,#9e068d,#9e0280,#9e0076,#9e006d,#9e0065,#9e005e,#9e0058,#9e0053,#9e004e,#9e0049,#9e0045,#9e0042,#9e003e,#9e003b,#9e0039,#9e0036,#9e0033)"></i><i style="top:205px;left:49px;width:492px;height:3px;background:linear-gradient(90deg,#004e9e,#004b9e,#00489e,#00449e,#00419e,#003e9e,#003a9e,#00379e,#01339e,#0e2f9e,#1c2c9e,#2a289e,#39249e,#48209e,#571c9e,#66189e,#75149e,#85109e,#950c9e,#9e0797,#9e0389,#9e007d,#9e0074,#9e006b,#9e0063,#9e005d,#9e0057,#9e0051,#9e004d,#9e0048,#9e0044,#9e0041,#9e003e,#9e003b,#9e0038,#9e0035)"></i><i style="top:208px;left:50px;width:488px;height:3px;background:linear-gradient(90deg,#004c9e,#00499e,#00459e,#00429e,#003f9e,#003c9e,#00389e,#00359e,#00319e,#0d2e9e,#1b2a9e,#29269e,#37239e,#451f9e,#541b9e,#63179e,#72139e,#810f9e,#910b9e,#9e079b,#9e028d,#9e0081,#9e0077,#9e006e,#9e0066,#9e0060,#9e0059,#9e0054,#9e004f,#9e004b,#9e0047,#9e0043,#9e0040,#9e003c,#9e003a,#9e0037)"></i><i style="top:211px;left:52px;width:483px;height:3px;background:linear-gradient(90deg,#00499e,#00469e,#00439e,#00409e,#003c9e,#00399e,#00369e,#00329e,#032f9e,#102b9e,#1e279e,#2c249e,#3b209e,#491c9e,#58189e,#67149e,#76109e,#860c9e,#95089e,#9e0497,#9e008a,#9e007e,#9e0074,#9e006c,#9e0064,#9e005e,#9e0058,#9e0053,#9e004e,#9e0049,#9e0046,#9e0042,#9e003f,#9e003c,#9e0039)"></i><i style="top:214px;left:53px;width:479px;height:3px;background:linear-gradient(90deg,#00479e,#00449e,#00419e,#003e9e,#003b9e,#00379e,#00349e,#00309e,#022d9e,#10299e,#1d269e,#2b229e,#391f9e,#471b9e,#55179e,#64139e,#730f9e,#820b9e,#91079e,#9e039b,#9e008e,#9e0082,#9e0078,#9e006f,#9e0067,#9e0061,#9e005b,#9e0055,#9e0050,#9e004c,#9e0048,#9e0044,#9e0041,#9e003e,#9e003b)"></i><i style="top:217px;left:55px;width:474px;height:3px;background:linear-gradient(90deg,#00459e,#00429e,#003f9e,#003c9e,#00399e,#00359e,#00329e,#002f9e,#032b9e,#10289e,#1d249e,#2a219e,#381d9e,#451a9e,#53169e,#61129e,#700e9e,#7e0b9e,#8d079e,#9c039e,#9e0092,#9e0086,#9e007b,#9e0072,#9e006a,#9e0063,#9e005d,#9e0058,#9e0053,#9e004e,#9e004a,#9e0046,#9e0043,#9e003f,#9e003d)"></i><i style="top:220px;left:56px;width:470px;height:3px;background:linear-gradient(90deg,#00439e,#00409e,#003d9e,#003a9e,#00379e,#00349e,#00309e,#002d9e,#022a9e,#0f269e,#1c239e,#29209e,#361c9e,#43199e,#51159e,#5f119e,#6d0e9e,#7b0a9e,#89069e,#98029e,#9e0096,#9e008a,#9e007f,#9e0076,#9e006e,#9e0066,#9e0060,#9e005a,#9e0055,#9e0050,#9e004c,#9e0048,#9e0045,#9e0041,#9e003e)"></i><i style="top:223px;left:58px;width:465px;height:3px;background:linear-gradient(90deg,#00419e,#003e9e,#003b9e,#00389e,#00349e,#00319e,#002e9e,#002b9e,#05279e,#12249e,#1f219e,#2c1d9e,#391a9e,#47169e,#55129e,#620f9e,#710b9e,#7f079e,#8d039e,#9c009e,#9e0092,#9e0086,#9e007c,#9e0073,#9e006b,#9e0064,#9e005e,#9e0059,#9e0054,#9e004f,#9e004b,#9e0047,#9e0044,#9e0040)"></i><i style="top:226px;left:59px;width:461px;height:3px;background:linear-gradient(90deg,#003f9e,#003c9e,#00399e,#00369e,#00339e,#00309e,#002d9e,#00299e,#05269e,#11239e,#1e1f9e,#2b1c9e,#38189e,#45159e,#52119e,#600e9e,#6d0a9e,#7b069e,#89039e,#98009e,#9e0096,#9e008a,#9e0080,#9e0076,#9e006e,#9e0067,#9e0061,#9e005b,#9e0056,#9e0051,#9e004d,#9e0049,#9e0046,#9e0042)"></i><i style="top:229px;left:61px;width:457px;height:3px;background:linear-gradient(90deg,#003d9e,#003a9e,#00379e,#00349e,#00319e,#002e9e,#002b9e,#00289e,#05249e,#11219e,#1e1e9e,#2a1b9e,#37179e,#44149e,#51109e,#5e0d9e,#6b099e,#79069e,#86029e,#94009e,#9e009a,#9e008d,#9e0083,#9e0079,#9e0071,#9e006a,#9e0063,#9e005d,#9e0058,#9e0053,#9e004f,#9e004b,#9e0048,#9e0044)"></i><i style="top:232px;left:63px;width:452px;height:3px;background:linear-gradient(90deg,#003b9e,#00389e,#00359e,#00329e,#002f9e,#002c9e,#00299e,#00259e,#08229e,#151f9e,#211c9e,#2e189e,#3a159e,#47119e,#540e9e,#620a9e,#6f079e,#7d039e,#8b009e,#99009e,#9e0096,#9e008a,#9e007f,#9e0076,#9e006f,#9e0068,#9e0061,#9e005c,#9e0057,#9e0052,#9e004e,#9e004a,#9e0046)"></i><i style="top:235px;left:64px;width:448px;height:3px;background:linear-gradient(90deg,#00399e,#00369e,#00339e,#00309e,#002d9e,#002a9e,#00279e,#00249e,#08219e,#141e9e,#201b9e,#2c179e,#39149e,#45109e,#520d9e,#5f0a9e,#6c069e,#79029e,#87009e,#94009e,#9e009a,#9e008e,#9e0083,#9e007a,#9e0072,#9e006b,#9e0064,#9e005e,#9e0059,#9e0054,#9e0050,#9e004c,#9e0048)"></i><i style="top:238px;left:66px;width:443px;height:3px;background:linear-gradient(90deg,#00379e,#00359e,#00329e,#002f9e,#002c9e,#00299e,#00269e,#00239e,#08209e,#141c9e,#1f199e,#2b169e,#37139e,#440f9e,#500c9e,#5d099e,#69059e,#76029e,#83009e,#91009e,#9d009d,#9e0091,#9e0087,#9e007d,#9e0075,#9e006d,#9e0067,#9e0061,#9e005c,#9e0057,#9e0052,#9e004e,#9e004b)"></i><i style="top:241px;left:68px;width:438px;height:3px;background:linear-gradient(90deg,#00369e,#00339e,#00309e,#002d9e,#002a9e,#00279e,#00249e,#00219e,#0b1e9e,#171a9e,#23179e,#2f149e,#3b119e,#470d9e,#540a9e,#61069e,#6d039e,#7b009e,#88009e,#95009e,#9e009a,#9e008e,#9e0083,#9e007a,#9e0072,#9e006b,#9e0065,#9e005f,#9e005a,#9e0055,#9e0051,#9e004d)"></i><i style="top:244px;left:69px;width:434px;height:3px;background:linear-gradient(90deg,#00349e,#00319e,#002e9e,#002b9e,#00289e,#00269e,#00239e,#001f9e,#0a1c9e,#16199e,#21169e,#2d139e,#39109e,#450c9e,#51099e,#5e069e,#6a029e,#77009e,#84009e,#91009e,#9d009d,#9e0092,#9e0087,#9e007e,#9e0075,#9e006e,#9e0067,#9e0062,#9e005c,#9e0057,#9e0053,#9e004f)"></i><i style="top:247px;left:71px;width:429px;height:3px;background:linear-gradient(90deg,#00329e,#002f9e,#002d9e,#002a9e,#00279e,#00249e,#00219e,#001e9e,#0a1b9e,#16189e,#21159e,#2c129e,#380f9e,#440c9e,#50089e,#5c059e,#68029e,#74009e,#81009e,#8d009e,#9a009e,#9e0095,#9e008a,#9e0081,#9e0079,#9e0071,#9e006a,#9e0064,#9e005f,#9e005a,#9e0055,#9e0051)"></i><i style="top:250px;left:73px;width:424px;height:3px;background:linear-gradient(90deg,#00319e,#002e9e,#002b9e,#00289e,#00259e,#00229e,#001f9e,#021c9e,#0d199e,#19169e,#24139e,#30109e,#3b0d9e,#47099e,#53069e,#60039e,#6c009e,#78009e,#85009e,#92009e,#9d009d,#9e0091,#9e0087,#9e007e,#9e0076,#9e006e,#9e0068,#9e0062,#9e005d,#9e0058,#9e0054)"></i><i style="top:253px;left:74px;width:420px;height:3px;background:linear-gradient(90deg,#002f9e,#002c9e,#002a9e,#00279e,#00249e,#00219e,#001e9e,#021b9e,#0d189e,#18159e,#23129e,#2e0f9e,#3a0c9e,#45099e,#51069e,#5d029e,#69009e,#75009e,#81009e,#8e009e,#9a009e,#9e0095,#9e008b,#9e0081,#9e0079,#9e0071,#9e006b,#9e0065,#9e005f,#9e005a,#9e0056)"></i><i style="top:256px;left:76px;width:415px;height:3px;background:linear-gradient(90deg,#002d9e,#002b9e,#00289e,#00259e,#00239e,#00209e,#001d9e,#021a9e,#0d179e,#17149e,#22119e,#2d0e9e,#390b9e,#44089e,#4f059e,#5b029e,#66009e,#72009e,#7e009e,#8a009e,#97009e,#9e0099,#9e008e,#9e0085,#9e007c,#9e0074,#9e006e,#9e0068,#9e0062,#9e005d,#9e0058)"></i><i style="top:259px;left:78px;width:410px;height:3px;background:linear-gradient(90deg,#002c9e,#00299e,#00269e,#00249e,#00219e,#001e9e,#001b9e,#05189e,#10159e,#1a129e,#250f9e,#310c9e,#3c099e,#47069e,#53039e,#5f009e,#6a009e,#76009e,#83009e,#8f009e,#9b009e,#9e0095,#9e008a,#9e0081,#9e0079,#9e0072,#9e006b,#9e0065,#9e0060,#9e005b)"></i><i style="top:262px;left:79px;width:406px;height:3px;background:linear-gradient(90deg,#002b9e,#00289e,#00259e,#00229e,#00209e,#001d9e,#001a9e,#04179e,#0f149e,#1a119e,#240e9e,#2f0b9e,#3a089e,#45059e,#51029e,#5c009e,#68009e,#73009e,#7f009e,#8b009e,#97009e,#9e0099,#9e008e,#9e0085,#9e007c,#9e0075,#9e006e,#9e0068,#9e0062,#9e005d)"></i><i style="top:265px;left:81px;width:401px;height:3px;background:linear-gradient(90deg,#00299e,#00269e,#00249e,#00219e,#001e9e,#001c9e,#00199e,#05169e,#0f139e,#19109e,#240e9e,#2e0b9e,#39089e,#44059e,#4f029e,#5a009e,#65009e,#71009e,#7c009e,#88009e,#93009e,#9e009c,#9e0092,#9e0088,#9e0080,#9e0078,#9e0071,#9e006b,#9e0065,#9e0060)"></i><i style="top:268px;left:83px;width:396px;height:3px;background:linear-gradient(90deg,#00289e,#00259e,#00229e,#00209e,#001d9e,#001a9e,#00179e,#07149e,#12119e,#1c0f9e,#270c9e,#31099e,#3c069e,#47039e,#52009e,#5e009e,#69009e,#75009e,#80009e,#8c009e,#98009e,#9e0098,#9e008e,#9e0084,#9e007c,#9e0075,#9e006e,#9e0068,#9e0063)"></i><i style="top:271px;left:85px;width:392px;height:3px;background:linear-gradient(90deg,#00269e,#00249e,#00219e,#001e9e,#001c9e,#00199e,#00169e,#08139e,#12109e,#1c0e9e,#260b9e,#31089e,#3b059e,#46029e,#51009e,#5c009e,#67009e,#72009e,#7e009e,#89009e,#95009e,#9e009b,#9e0091,#9e0087,#9e007f,#9e0077,#9e0071,#9e006b,#9e0065)"></i><i style="top:274px;left:87px;width:387px;height:3px;background:linear-gradient(90deg,#00259e,#00229e,#00209e,#001d9e,#001a9e,#00189e,#00159e,#08129e,#12109e,#1c0d9e,#260a9e,#30079e,#3a049e,#45019e,#4f009e,#5a009e,#65009e,#70009e,#7b009e,#86009e,#91009e,#9c009e,#9e0095,#9e008b,#9e0082,#9e007b,#9e0074,#9e006e,#9e0068)"></i><i style="top:277px;left:89px;width:382px;height:3px;background:linear-gradient(90deg,#00239e,#00219e,#001e9e,#001b9e,#00199e,#00169e,#01139e,#0a119e,#140e9e,#1e0b9e,#29089e,#33059e,#3e029e,#48009e,#53009e,#5e009e,#69009e,#74009e,#7f009e,#8a009e,#96009e,#9e009b,#9e0090,#9e0087,#9e007f,#9e0077,#9e0071,#9e006b)"></i><i style="top:280px;left:90px;width:378px;height:3px;background:linear-gradient(90deg,#00229e,#00209e,#001d9e,#001a9e,#00189e,#00159e,#01139e,#0a109e,#140d9e,#1d0a9e,#27089e,#32059e,#3c029e,#46009e,#51009e,#5b009e,#66009e,#71009e,#7c009e,#87009e,#92009e,#9d009d,#9e0094,#9e008b,#9e0082,#9e007b,#9e0074,#9e006e)"></i><i style="top:283px;left:92px;width:373px;height:3px;background:linear-gradient(90deg,#00219e,#001e9e,#001c9e,#00199e,#00179e,#00149e,#01129e,#0a0f9e,#130c9e,#1d0a9e,#27079e,#31049e,#3b019e,#45009e,#4f009e,#59009e,#64009e,#6e009e,#79009e,#83009e,#8e009e,#99009e,#9e0098,#9e008e,#9e0086,#9e007e,#9e0077,#9e0071)"></i><i style="top:286px;left:94px;width:368px;height:3px;background:linear-gradient(90deg,#00209e,#001d9e,#001a9e,#00189e,#00159e,#00139e,#03109e,#0c0d9e,#160b9e,#20089e,#2a059e,#34029e,#3e009e,#48009e,#52009e,#5d009e,#68009e,#72009e,#7d009e,#88009e,#93009e,#9d009d,#9e0093,#9e008a,#9e0082,#9e007a,#9e0074)"></i><i style="top:289px;left:96px;width:363px;height:3px;background:linear-gradient(90deg,#001e9e,#001c9e,#00199e,#00179e,#00149e,#00129e,#030f9e,#0c0d9e,#160a9e,#1f079e,#29049e,#33029e,#3d009e,#47009e,#51009e,#5b009e,#65009e,#70009e,#7a009e,#85009e,#8f009e,#9a009e,#9e0097,#9e008e,#9e0085,#9e007e,#9e0077)"></i><i style="top:292px;left:98px;width:358px;height:3px;background:linear-gradient(90deg,#001d9e,#001b9e,#00189e,#00169e,#00139e,#00119e,#030e9e,#0c0c9e,#15099e,#1f069e,#28049e,#32019e,#3b009e,#45009e,#4f009e,#59009e,#63009e,#6d009e,#77009e,#81009e,#8c009e,#96009e,#9e009b,#9e0091,#9e0089,#9e0081,#9e007a)"></i><i style="top:295px;left:100px;width:353px;height:3px;background:linear-gradient(90deg,#001c9e,#00199e,#00179e,#00149e,#00129e,#000f9e,#050d9e,#0f0a9e,#18089e,#22059e,#2b029e,#35009e,#3f009e,#48009e,#52009e,#5d009e,#67009e,#71009e,#7b009e,#86009e,#91009e,#9b009e,#9e0096,#9e008d,#9e0085,#9e007d)"></i><i style="top:298px;left:102px;width:348px;height:3px;background:linear-gradient(90deg,#001b9e,#00189e,#00169e,#00139e,#00119e,#000e9e,#060c9e,#0f099e,#18079e,#21049e,#2a029e,#34009e,#3d009e,#47009e,#51009e,#5a009e,#64009e,#6e009e,#78009e,#83009e,#8d009e,#97009e,#9e009a,#9e0091,#9e0088,#9e0081)"></i><i style="top:301px;left:104px;width:343px;height:3px;background:linear-gradient(90deg,#001a9e,#00179e,#00159e,#00129e,#00109e,#000d9e,#080a9e,#11089e,#1a059e,#24039e,#2d009e,#37009e,#41009e,#4a009e,#54009e,#5e009e,#68009e,#73009e,#7d009e,#87009e,#92009e,#9c009e,#9e0095,#9e008c,#9e0084)"></i><i style="top:304px;left:105px;width:339px;height:3px;background:linear-gradient(90deg,#00199e,#00169e,#00149e,#00119e,#000f9e,#000c9e,#070a9e,#11079e,#1a059e,#23029e,#2c009e,#35009e,#3f009e,#48009e,#52009e,#5c009e,#66009e,#70009e,#7a009e,#84009e,#8e009e,#99009e,#9e0099,#9e0090,#9e0088)"></i><i style="top:307px;left:107px;width:334px;height:3px;background:linear-gradient(90deg,#00179e,#00159e,#00139e,#00109e,#000e9e,#000c9e,#08099e,#10079e,#19049e,#22029e,#2b009e,#34009e,#3e009e,#47009e,#50009e,#5a009e,#63009e,#6d009e,#77009e,#81009e,#8b009e,#95009e,#9e009d,#9e0094,#9e008b)"></i><i style="top:310px;left:109px;width:329px;height:3px;background:linear-gradient(90deg,#00169e,#00149e,#00129e,#000f9e,#000d9e,#000b9e,#08089e,#10069e,#19039e,#22019e,#2a009e,#33009e,#3c009e,#45009e,#4e009e,#58009e,#61009e,#6a009e,#74009e,#7d009e,#87009e,#91009e,#9b009e,#9e0098,#9e008f)"></i><i style="top:313px;left:111px;width:325px;height:3px;background:linear-gradient(90deg,#00159e,#00139e,#00119e,#000e9e,#000c9e,#01099e,#0a079e,#13049e,#1c029e,#25009e,#2e009e,#37009e,#40009e,#49009e,#52009e,#5c009e,#65009e,#6f009e,#79009e,#83009e,#8d009e,#97009e,#9e009b,#9e0092)"></i><i style="top:316px;left:113px;width:320px;height:3px;background:linear-gradient(90deg,#00149e,#00129e,#00109e,#000d9e,#000b9e,#02099e,#0a069e,#13049e,#1b019e,#24009e,#2d009e,#35009e,#3e009e,#47009e,#51009e,#5a009e,#63009e,#6c009e,#76009e,#7f009e,#89009e,#93009e,#9c009e,#9e0096)"></i><i style="top:319px;left:115px;width:315px;height:3px;background:linear-gradient(90deg,#00139e,#00119e,#000f9e,#000c9e,#000a9e,#04079e,#0c059e,#15029e,#1e009e,#27009e,#30009e,#39009e,#42009e,#4b009e,#54009e,#5e009e,#67009e,#71009e,#7a009e,#84009e,#8e009e,#98009e,#9e009a)"></i><i style="top:322px;left:117px;width:310px;height:3px;background:linear-gradient(90deg,#00129e,#00109e,#000e9e,#000b9e,#00099e,#04079e,#0c049e,#15029e,#1d009e,#26009e,#2f009e,#37009e,#40009e,#49009e,#52009e,#5b009e,#65009e,#6e009e,#77009e,#81009e,#8a009e,#94009e,#9d009d)"></i><i style="top:325px;left:118px;width:306px;height:3px;background:linear-gradient(90deg,#00119e,#000f9e,#000d9e,#000b9e,#00089e,#04069e,#0c049e,#14019e,#1c009e,#25009e,#2d009e,#36009e,#3f009e,#47009e,#50009e,#59009e,#62009e,#6b009e,#74009e,#7e009e,#87009e,#90009e,#9a009e)"></i><i style="top:328px;left:120px;width:301px;height:3px;background:linear-gradient(90deg,#00109e,#000e9e,#000c9e,#000a9e,#00089e,#04059e,#0c039e,#14019e,#1c009e,#24009e,#2c009e,#35009e,#3d009e,#46009e,#4e009e,#57009e,#60009e,#68009e,#71009e,#7a009e,#83009e,#8d009e,#96009e)"></i><i style="top:331px;left:122px;width:296px;height:3px;background:linear-gradient(90deg,#000f9e,#000d9e,#000b9e,#00099e,#00069e,#06049e,#0e029e,#16009e,#1f009e,#27009e,#2f009e,#38009e,#41009e,#49009e,#52009e,#5b009e,#64009e,#6d009e,#76009e,#7f009e,#88009e,#92009e)"></i><i style="top:334px;left:125px;width:290px;height:3px;background:linear-gradient(90deg,#000e9e,#000c9e,#000a9e,#00089e,#00069e,#06039e,#0e019e,#16009e,#1e009e,#27009e,#2f009e,#37009e,#3f009e,#48009e,#50009e,#59009e,#61009e,#6a009e,#73009e,#7c009e,#85009e,#8e009e)"></i><i style="top:337px;left:127px;width:285px;height:3px;background:linear-gradient(90deg,#000d9e,#000b9e,#00099e,#00079e,#01049e,#08029e,#11009e,#19009e,#21009e,#29009e,#32009e,#3a009e,#43009e,#4b009e,#54009e,#5d009e,#66009e,#6f009e,#78009e,#81009e,#8a009e)"></i><i style="top:340px;left:129px;width:280px;height:3px;background:linear-gradient(90deg,#000d9e,#000a9e,#00089e,#00069e,#01049e,#09029e,#10009e,#18009e,#20009e,#29009e,#31009e,#39009e,#41009e,#4a009e,#52009e,#5b009e,#63009e,#6c009e,#75009e,#7e009e,#87009e)"></i><i style="top:343px;left:131px;width:275px;height:3px;background:linear-gradient(90deg,#000c9e,#000a9e,#00079e,#00059e,#01039e,#09019e,#10009e,#18009e,#20009e,#28009e,#30009e,#38009e,#40009e,#48009e,#50009e,#58009e,#61009e,#69009e,#72009e,#7a009e,#83009e)"></i><i style="top:346px;left:133px;width:270px;height:3px;background:linear-gradient(90deg,#000b9e,#00099e,#00069e,#00049e,#03029e,#0b009e,#13009e,#1a009e,#22009e,#2b009e,#33009e,#3b009e,#43009e,#4c009e,#54009e,#5d009e,#65009e,#6e009e,#77009e,#7f009e)"></i><i style="top:349px;left:135px;width:265px;height:3px;background:linear-gradient(90deg,#000a9e,#00089e,#00069e,#00049e,#03019e,#0b009e,#12009e,#1a009e,#22009e,#2a009e,#32009e,#3a009e,#42009e,#4a009e,#52009e,#5a009e,#63009e,#6b009e,#73009e,#7c009e)"></i><i style="top:352px;left:137px;width:260px;height:3px;background:linear-gradient(90deg,#00099e,#00079e,#00059e,#00039e,#03019e,#0b009e,#12009e,#1a009e,#21009e,#29009e,#30009e,#38009e,#40009e,#48009e,#50009e,#58009e,#60009e,#68009e,#70009e,#79009e)"></i><i style="top:355px;left:139px;width:256px;height:3px;background:linear-gradient(90deg,#00089e,#00069e,#00049e,#00029e,#05009e,#0d009e,#14009e,#1c009e,#24009e,#2c009e,#34009e,#3c009e,#44009e,#4c009e,#54009e,#5d009e,#65009e,#6d009e,#76009e)"></i><i style="top:358px;left:141px;width:251px;height:3px;background:linear-gradient(90deg,#00079e,#00059e,#00039e,#00019e,#05009e,#0d009e,#14009e,#1c009e,#23009e,#2b009e,#33009e,#3a009e,#42009e,#4a009e,#52009e,#5a009e,#62009e,#6a009e,#73009e)"></i><i style="top:361px;left:144px;width:245px;height:3px;background:linear-gradient(90deg,#00079e,#00059e,#00029e,#00009e,#06009e,#0d009e,#14009e,#1c009e,#23009e,#2a009e,#32009e,#39009e,#41009e,#48009e,#50009e,#58009e,#60009e,#68009e,#70009e)"></i><i style="top:364px;left:146px;width:240px;height:3px;background:linear-gradient(90deg,#00069e,#00049e,#00029e,#01009e,#08009e,#0f009e,#17009e,#1e009e,#26009e,#2d009e,#35009e,#3d009e,#44009e,#4c009e,#54009e,#5c009e,#64009e,#6c009e)"></i><i style="top:367px;left:148px;width:235px;height:3px;background:linear-gradient(90deg,#00059e,#00039e,#00019e,#01009e,#08009e,#0f009e,#16009e,#1d009e,#25009e,#2c009e,#34009e,#3b009e,#43009e,#4a009e,#52009e,#5a009e,#62009e,#69009e)"></i><i style="top:370px;left:151px;width:229px;height:3px;background:linear-gradient(90deg,#00049e,#00029e,#00009e,#03009e,#0a009e,#11009e,#19009e,#20009e,#28009e,#2f009e,#37009e,#3f009e,#47009e,#4f009e,#56009e,#5e009e,#67009e)"></i><i style="top:373px;left:153px;width:224px;height:3px;background:linear-gradient(90deg,#00039e,#00019e,#00009e,#03009e,#0a009e,#11009e,#18009e,#20009e,#27009e,#2e009e,#36009e,#3d009e,#45009e,#4c009e,#54009e,#5c009e,#64009e)"></i><i style="top:376px;left:155px;width:219px;height:3px;background:linear-gradient(90deg,#00039e,#00019e,#00009e,#03009e,#0a009e,#11009e,#18009e,#1f009e,#26009e,#2d009e,#34009e,#3c009e,#43009e,#4a009e,#52009e,#59009e,#61009e)"></i><i style="top:379px;left:158px;width:213px;height:3px;background:linear-gradient(90deg,#00029e,#00009e,#00009e,#05009e,#0c009e,#13009e,#1b009e,#22009e,#29009e,#31009e,#38009e,#3f009e,#47009e,#4f009e,#56009e,#5e009e)"></i><i style="top:382px;left:160px;width:208px;height:3px;background:linear-gradient(90deg,#00019e,#00009e,#00009e,#05009e,#0c009e,#13009e,#1a009e,#21009e,#28009e,#2f009e,#37009e,#3e009e,#45009e,#4c009e,#54009e,#5b009e)"></i><i style="top:385px;left:162px;width:203px;height:3px;background:linear-gradient(90deg,#00009e,#00009e,#00009e,#07009e,#0e009e,#15009e,#1d009e,#24009e,#2b009e,#33009e,#3a009e,#42009e,#49009e,#51009e,#59009e)"></i><i style="top:388px;left:165px;width:197px;height:3px;background:linear-gradient(90deg,#00009e,#00009e,#01009e,#08009e,#0e009e,#15009e,#1c009e,#23009e,#2a009e,#32009e,#39009e,#40009e,#47009e,#4f009e,#56009e)"></i><i style="top:391px;left:168px;width:191px;height:3px;background:linear-gradient(90deg,#00009e,#00009e,#02009e,#08009e,#0f009e,#15009e,#1c009e,#23009e,#2a009e,#30009e,#37009e,#3e009e,#45009e,#4c009e,#53009e)"></i><i style="top:394px;left:170px;width:186px;height:3px;background:linear-gradient(90deg,#00009e,#00009e,#03009e,#0a009e,#11009e,#18009e,#1f009e,#26009e,#2d009e,#34009e,#3b009e,#42009e,#4a009e,#51009e)"></i><i style="top:397px;left:173px;width:181px;height:3px;background:linear-gradient(90deg,#00009e,#00009e,#04009e,#0a009e,#11009e,#18009e,#1e009e,#25009e,#2c009e,#33009e,#3a009e,#41009e,#48009e,#4f009e)"></i><i style="top:400px;left:175px;width:176px;height:3px;background:linear-gradient(90deg,#00009e,#00009e,#04009e,#0a009e,#11009e,#17009e,#1e009e,#24009e,#2b009e,#31009e,#38009e,#3f009e,#46009e,#4c009e)"></i><i style="top:403px;left:178px;width:170px;height:3px;background:linear-gradient(90deg,#00009e,#00009e,#06009e,#0c009e,#13009e,#1a009e,#20009e,#27009e,#2e009e,#35009e,#3c009e,#43009e,#4a009e)"></i><i style="top:406px;left:181px;width:164px;height:3px;background:linear-gradient(90deg,#00009e,#00009e,#06009e,#0d009e,#13009e,#1a009e,#20009e,#27009e,#2d009e,#34009e,#3a009e,#41009e,#48009e)"></i><i style="top:409px;left:184px;width:158px;height:3px;background:linear-gradient(90deg,#00009e,#02009e,#08009e,#0f009e,#15009e,#1c009e,#23009e,#2a009e,#31009e,#37009e,#3e009e,#45009e)"></i><i style="top:412px;left:187px;width:152px;height:3px;background:linear-gradient(90deg,#00009e,#02009e,#09009e,#0f009e,#15009e,#1c009e,#22009e,#29009e,#2f009e,#36009e,#3d009e,#43009e)"></i><i style="top:415px;left:190px;width:146px;height:3px;background:linear-gradient(90deg,#00009e,#04009e,#0b009e,#11009e,#18009e,#1f009e,#25009e,#2c009e,#33009e,#3a009e,#41009e)"></i><i style="top:418px;left:193px;width:140px;height:3px;background:linear-gradient(90deg,#00009e,#05009e,#0b009e,#11009e,#18009e,#1e009e,#25009e,#2b009e,#32009e,#38009e,#3f009e)"></i><i style="top:421px;left:196px;width:134px;height:3px;background:linear-gradient(90deg,#00009e,#06009e,#0c009e,#12009e,#18009e,#1e009e,#24009e,#2a009e,#30009e,#36009e,#3d009e)"></i><i style="top:424px;left:199px;width:128px;height:3px;background:linear-gradient(90deg,#01009e,#07009e,#0d009e,#14009e,#1a009e,#20009e,#27009e,#2d009e,#34009e,#3b009e)"></i><i style="top:427px;left:202px;width:122px;height:3px;background:linear-gradient(90deg,#02009e,#08009e,#0e009e,#14009e,#1a009e,#20009e,#26009e,#2c009e,#32009e,#38009e)"></i><i style="top:430px;left:205px;width:116px;height:3px;background:linear-gradient(90deg,#03009e,#09009e,#10009e,#16009e,#1c009e,#23009e,#29009e,#30009e,#36009e)"></i><i style="top:433px;left:209px;width:109px;height:3px;background:linear-gradient(90deg,#04009e,#0a009e,#10009e,#16009e,#1c009e,#22009e,#28009e,#2e009e,#34009e)"></i><i style="top:436px;left:212px;width:103px;height:3px;background:linear-gradient(90deg,#05009e,#0c009e,#12009e,#18009e,#1f009e,#25009e,#2c009e,#32009e)"></i><i style="top:439px;left:216px;width:97px;height:3px;background:linear-gradient(90deg,#07009e,#0d009e,#13009e,#19009e,#1f009e,#25009e,#2b009e,#31009e)"></i><i style="top:442px;left:220px;width:90px;height:3px;background:linear-gradient(90deg,#08009e,#0f009e,#15009e,#1c009e,#22009e,#29009e,#2f009e)"></i><i style="top:445px;left:223px;width:84px;height:3px;background:linear-gradient(90deg,#09009e,#0f009e,#15009e,#1b009e,#21009e,#27009e,#2d009e)"></i><i style="top:448px;left:227px;width:77px;height:3px;background:linear-gradient(90deg,#0b009e,#10009e,#15009e,#1b009e,#20009e,#26009e,#2b009e)"></i><i style="top:451px;left:230px;width:71px;height:3px;background:linear-gradient(90deg,#0c009e,#12009e,#18009e,#1d009e,#24009e,#2a009e)"></i><i style="top:454px;left:234px;width:64px;height:3px;background:linear-gradient(90deg,#0d009e,#12009e,#18009e,#1d009e,#22009e,#28009e)"></i><i style="top:457px;left:238px;width:57px;height:3px;background:linear-gradient(90deg,#0e009e,#14009e,#1a009e,#20009e,#26009e)"></i><i style="top:460px;left:241px;width:51px;height:3px;background:linear-gradient(90deg,#0f009e,#15009e,#1a009e,#1f009e,#24009e)"></i><i style="top:463px;left:245px;width:44px;height:3px;background:linear-gradient(90deg,#11009e,#17009e,#1d009e,#23009e)"></i><i style="top:466px;left:249px;width:37px;height:3px;background:linear-gradient(90deg,#12009e,#17009e,#1c009e,#21009e)"></i><i style="top:469px;left:252px;width:31px;height:3px;background:linear-gradient(90deg,#13009e,#19009e,#1f009e)"></i><i style="top:472px;left:256px;width:24px;height:3px;background:linear-gradient(90deg,#14009e,#19009e,#1e009e)"></i><i style="top:475px;left:259px;width:18px;height:3px;background:linear-gradient(90deg,#15009e,#1c009e)"></i></div></div><div style="left:0;top:0;width:640px;height:492px;filter:blur(1.3px)"><div class="cl" style="left:0;top:0;width:640px;height:492px;clip-path:polygon(480.7px 63.8px,133.5px 31.4px,187.2px 363.1px)"><i style="top:30px;left:130px;width:25px;height:2px;background:linear-gradient(90deg,#00ff02,#0cff01,#20ff01,#35ff00)"></i><i style="top:32px;left:130px;width:46px;height:2px;background:linear-gradient(90deg,#00ff05,#09ff04,#1cff03,#30ff02,#44ff01,#59ff01,#70ff00)"></i><i style="top:34px;left:130px;width:67px;height:2px;background:linear-gradient(90deg,#00ff09,#0aff07,#1fff06,#35ff04,#4bff03,#63ff02,#7cff01,#97ff01,#b2ff00)"></i><i style="top:36px;left:131px;width:88px;height:2px;background:linear-gradient(90deg,#00ff0d,#0bff0c,#1fff0a,#34ff09,#4aff07,#60ff06,#78ff04,#91ff03,#acff02,#c8ff01,#e5ff01,#fef900)"></i><i style="top:38px;left:131px;width:109px;height:2px;background:linear-gradient(90deg,#00ff11,#0aff10,#1dff0f,#32ff0d,#47ff0c,#5dff0a,#74ff09,#8dff07,#a6ff06,#c1ff04,#ddff03,#fafd02,#ffe601,#ffce01,#ffb900)"></i><i style="top:40px;left:131px;width:130px;height:2px;background:linear-gradient(90deg,#00ff16,#0aff15,#1eff13,#34ff12,#4aff11,#62ff0f,#7aff0e,#94ff0c,#b0ff0a,#ccff09,#ebff07,#fff405,#ffd803,#ffc102,#ffad01,#ff9c01,#ff8d00)"></i><i style="top:42px;left:132px;width:151px;height:2px;background:linear-gradient(90deg,#00ff1a,#0bff19,#1fff18,#35ff17,#4bff16,#62ff14,#7aff13,#93ff11,#aeff10,#cbff0e,#e8ff0c,#fef60a,#ffdb08,#ffc405,#ffb004,#ff9f02,#ff9001,#ff8301,#ff7700,#ff6d00)"></i><i style="top:44px;left:132px;width:172px;height:2px;background:linear-gradient(90deg,#00ff1f,#0aff1e,#1eff1d,#33ff1c,#49ff1b,#5fff19,#77ff18,#90ff17,#abff15,#c7ff14,#e4ff12,#fdfa10,#ffdf0d,#ffc80a,#ffb308,#ffa206,#ff9304,#ff8503,#ff7a02,#ff6f01,#ff6601,#ff5d00,#ff5500)"></i><i style="top:46px;left:132px;width:194px;height:2px;background:linear-gradient(90deg,#00ff24,#0aff23,#1fff22,#35ff21,#4bff20,#63ff1e,#7cff1d,#97ff1c,#b2ff1b,#d0ff19,#efff18,#ffef15,#ffd411,#ffbd0e,#ffaa0b,#ff9909,#ff8b07,#ff7e05,#ff7204,#ff6803,#ff5f02,#ff5701,#ff4f01,#ff4900,#ff4200)"></i><i style="top:48px;left:132px;width:215px;height:2px;background:linear-gradient(90deg,#00ff28,#09ff27,#1eff27,#33ff26,#49ff25,#61ff24,#7aff23,#94ff22,#afff21,#ccff1f,#ebff1e,#fff31b,#ffd817,#ffc113,#ffad10,#ff9c0e,#ff8d0b,#ff8009,#ff7408,#ff6a06,#ff6105,#ff5903,#ff5102,#ff4a02,#ff4401,#ff3e01,#ff3900,#ff3400)"></i><i style="top:50px;left:133px;width:235px;height:2px;background:linear-gradient(90deg,#00ff2d,#0bff2c,#20ff2b,#36ff2b,#4eff2a,#66ff29,#80ff28,#9bff27,#b7ff26,#d5ff25,#f5ff24,#ffe920,#ffcf1b,#ffb917,#ffa514,#ff9511,#ff870e,#ff7a0c,#ff6f0a,#ff6508,#ff5c07,#ff5405,#ff4d04,#ff4603,#ff4002,#ff3a01,#ff3501,#ff3001,#ff2c00,#ff2800)"></i><i style="top:52px;left:133px;width:257px;height:2px;background:linear-gradient(90deg,#00ff32,#0aff31,#1fff31,#35ff30,#4cff2f,#65ff2e,#7eff2e,#99ff2d,#b5ff2c,#d3ff2b,#f3ff2a,#ffec26,#ffd121,#ffba1c,#ffa718,#ff9615,#ff8812,#ff7b10,#ff700e,#ff660c,#ff5d0a,#ff5509,#ff4d07,#ff4706,#ff4105,#ff3b04,#ff3603,#ff3102,#ff2c01,#ff2801,#ff2400,#ff2100,#ff1d00)"></i><i style="top:54px;left:133px;width:278px;height:2px;background:linear-gradient(90deg,#00ff37,#09ff36,#1eff36,#34ff35,#4bff35,#63ff34,#7cff33,#97ff33,#b3ff32,#d1ff31,#f0ff30,#ffee2c,#ffd327,#ffbc22,#ffa91e,#ff981a,#ff8917,#ff7d14,#ff7112,#ff6710,#ff5e0e,#ff560c,#ff4e0a,#ff4809,#ff4107,#ff3c06,#ff3705,#ff3204,#ff2d03,#ff2902,#ff2502,#ff2101,#ff1e01,#ff1b00,#ff1800,#ff1500)"></i><i style="top:56px;left:134px;width:298px;height:2px;background:linear-gradient(90deg,#00ff3c,#0bff3b,#21ff3b,#37ff3a,#4fff3a,#68ff39,#82ff39,#9dff38,#baff38,#d9ff37,#f8fe36,#ffe530,#ffcb2a,#ffb525,#ffa221,#ff921d,#ff841a,#ff7817,#ff6d14,#ff6312,#ff5a10,#ff520e,#ff4b0c,#ff440b,#ff3e09,#ff3908,#ff3307,#ff2f06,#ff2a05,#ff2604,#ff2303,#ff1f02,#ff1c02,#ff1901,#ff1601,#ff1300,#ff1000,#ff0e00)"></i><i style="top:58px;left:134px;width:320px;height:2px;background:linear-gradient(90deg,#00ff41,#0bff40,#20ff40,#36ff40,#4eff3f,#66ff3f,#80ff3f,#9cff3e,#b9ff3e,#d7ff3d,#f7fe3d,#ffe737,#ffcc30,#ffb62a,#ffa326,#ff9322,#ff851e,#ff781b,#ff6d18,#ff6315,#ff5a13,#ff5211,#ff4b0f,#ff440e,#ff3e0c,#ff390b,#ff3409,#ff2f08,#ff2b07,#ff2706,#ff2305,#ff1f04,#ff1c03,#ff1903,#ff1602,#ff1301,#ff1001,#ff0e01,#ff0c00,#ff0900,#ff0700)"></i><i style="top:60px;left:134px;width:341px;height:2px;background:linear-gradient(90deg,#00ff46,#0aff46,#1fff45,#35ff45,#4cff45,#65ff45,#7fff45,#9aff44,#b7ff44,#d5ff44,#f5fe43,#ffe93d,#ffce36,#ffb830,#ffa42b,#ff9426,#ff8622,#ff791f,#ff6e1c,#ff6419,#ff5b17,#ff5315,#ff4c13,#ff4511,#ff3f0f,#ff390e,#ff340c,#ff2f0b,#ff2b0a,#ff2709,#ff2307,#ff2006,#ff1c06,#ff1905,#ff1604,#ff1303,#ff1103,#ff0e02,#ff0c01,#ff0a01,#ff0801,#ff0600,#ff0400,#ff0200)"></i><i style="top:62px;left:135px;width:349px;height:2px;background:linear-gradient(90deg,#00ff4b,#0bff4b,#21ff4b,#37ff4b,#4fff4b,#68ff4b,#82ff4b,#9eff4a,#bbff4a,#daff4a,#f9fd4a,#ffe442,#ffca3b,#ffb434,#ffa12f,#ff912a,#ff8326,#ff7722,#ff6c1f,#ff621c,#ff591a,#ff5117,#ff4a15,#ff4413,#ff3e11,#ff3810,#ff330e,#ff2e0d,#ff2a0c,#ff260a,#ff2209,#ff1f08,#ff1b07,#ff1806,#ff1506,#ff1205,#ff1004,#ff0d03,#ff0b03,#ff0902,#ff0702,#ff0501,#ff0301,#ff0100,#ff0000)"></i><i style="top:64px;left:135px;width:349px;height:2px;background:linear-gradient(90deg,#00ff50,#0bff50,#20ff50,#37ff50,#4fff50,#68ff50,#82ff51,#9eff51,#bbff51,#daff51,#f9fd50,#ffe348,#ffc940,#ffb339,#ffa033,#ff902e,#ff822a,#ff7626,#ff6b22,#ff611f,#ff581d,#ff511a,#ff4918,#ff4316,#ff3d14,#ff3712,#ff3211,#ff2e0f,#ff290e,#ff250d,#ff220b,#ff1e0a,#ff1b09,#ff1808,#ff1507,#ff1207,#ff0f06,#ff0d05,#ff0b04,#ff0804,#ff0603,#ff0402,#ff0302,#ff0101,#ff0001)"></i><i style="top:66px;left:135px;width:348px;height:2px;background:linear-gradient(90deg,#00ff55,#0aff56,#1fff56,#36ff56,#4eff56,#67ff56,#81ff57,#9dff57,#bbff57,#daff58,#f9fd57,#ffe34f,#ffc946,#ffb33e,#ffa038,#ff9033,#ff822e,#ff762a,#ff6b26,#ff6123,#ff5820,#ff501d,#ff491b,#ff4319,#ff3d17,#ff3715,#ff3213,#ff2d12,#ff2910,#ff250f,#ff210e,#ff1e0c,#ff1a0b,#ff170a,#ff1409,#ff1208,#ff0f08,#ff0d07,#ff0a06,#ff0805,#ff0604,#ff0404,#ff0203,#ff0103,#ff0002)"></i><i style="top:68px;left:136px;width:345px;height:2px;background:linear-gradient(90deg,#00ff5b,#0cff5b,#22ff5b,#39ff5c,#52ff5c,#6cff5d,#87ff5d,#a4ff5d,#c3ff5e,#e3ff5e,#fef85c,#ffdb52,#ffc149,#ffac41,#ff9a3b,#ff8a35,#ff7d30,#ff712c,#ff6628,#ff5d25,#ff5422,#ff4c1f,#ff451d,#ff3f1a,#ff3918,#ff3416,#ff2f15,#ff2a13,#ff2612,#ff2210,#ff1f0f,#ff1b0e,#ff180d,#ff150b,#ff120a,#ff100a,#ff0d09,#ff0b08,#ff0807,#ff0606,#ff0406,#ff0205,#ff0104,#ff0004)"></i><i style="top:70px;left:136px;width:343px;height:2px;background:linear-gradient(90deg,#00ff60,#0bff61,#21ff61,#39ff62,#51ff62,#6bff63,#86ff63,#a3ff64,#c1ff65,#e2ff65,#fdf963,#ffdb58,#ffc24f,#ffad47,#ff9a40,#ff8b3a,#ff7d35,#ff7130,#ff662c,#ff5d29,#ff5425,#ff4d22,#ff4620,#ff3f1d,#ff391b,#ff3419,#ff2f17,#ff2b16,#ff2614,#ff2213,#ff1f11,#ff1b10,#ff180f,#ff150e,#ff120c,#ff100b,#ff0d0b,#ff0b0a,#ff0809,#ff0608,#ff0407,#ff0206,#ff0106,#ff0005)"></i><i style="top:72px;left:136px;width:341px;height:2px;background:linear-gradient(90deg,#00ff66,#0aff66,#20ff67,#38ff67,#50ff68,#6aff69,#85ff6a,#a2ff6a,#c0ff6b,#e1ff6c,#fdf96b,#ffdc5f,#ffc355,#ffad4c,#ff9b45,#ff8b3f,#ff7d39,#ff7134,#ff6730,#ff5d2c,#ff5429,#ff4d26,#ff4623,#ff3f20,#ff391e,#ff341c,#ff2f1a,#ff2b18,#ff2617,#ff2215,#ff1f13,#ff1b12,#ff1811,#ff1510,#ff120e,#ff100d,#ff0d0c,#ff0b0b,#ff090b,#ff060a,#ff0409,#ff0208,#ff0107,#ff0007)"></i><i style="top:74px;left:137px;width:338px;height:2px;background:linear-gradient(90deg,#00ff6b,#0cff6c,#23ff6d,#3bff6e,#54ff6e,#6fff6f,#8bff70,#a9ff71,#c8ff72,#eaff74,#fff16e,#ffd462,#ffbb58,#ffa64f,#ff9447,#ff8541,#ff783b,#ff6c36,#ff6232,#ff592e,#ff502b,#ff4927,#ff4225,#ff3c22,#ff3620,#ff311d,#ff2c1b,#ff281a,#ff2418,#ff2016,#ff1c15,#ff1913,#ff1612,#ff1311,#ff1010,#ff0e0e,#ff0b0d,#ff090c,#ff070c,#ff040b,#ff020a,#ff0109,#ff0008)"></i><i style="top:76px;left:137px;width:336px;height:2px;background:linear-gradient(90deg,#00ff71,#0bff72,#22ff73,#3aff74,#53ff75,#6eff76,#8aff77,#a8ff78,#c7ff79,#e9ff7b,#fff276,#ffd469,#ffbc5e,#ffa754,#ff954d,#ff8646,#ff7840,#ff6c3b,#ff6236,#ff5932,#ff502e,#ff492b,#ff4228,#ff3c25,#ff3623,#ff3120,#ff2c1e,#ff281c,#ff241a,#ff2019,#ff1c17,#ff1916,#ff1614,#ff1313,#ff1012,#ff0e10,#ff0b0f,#ff090e,#ff070d,#ff040c,#ff030c,#ff010b,#ff000a)"></i><i style="top:78px;left:137px;width:334px;height:2px;background:linear-gradient(90deg,#00ff76,#0bff77,#21ff79,#39ff7a,#52ff7b,#6dff7c,#89ff7e,#a7ff7f,#c6ff80,#e8ff82,#fff37e,#ffd570,#ffbc64,#ffa75a,#ff9552,#ff864b,#ff7944,#ff6d3f,#ff623a,#ff5936,#ff5132,#ff492e,#ff422b,#ff3c28,#ff3625,#ff3123,#ff2c21,#ff281f,#ff241d,#ff201b,#ff1c19,#ff1918,#ff1616,#ff1315,#ff1014,#ff0e12,#ff0b11,#ff0910,#ff070f,#ff040e,#ff030d,#ff010c,#ff000c)"></i><i style="top:80px;left:138px;width:331px;height:2px;background:linear-gradient(90deg,#00ff7c,#0dff7e,#24ff7f,#3dff80,#57ff82,#72ff83,#8fff85,#aeff86,#cfff88,#f1ff8a,#ffea80,#ffcd72,#ffb566,#ffa05c,#ff8f54,#ff804d,#ff7346,#ff6841,#ff5e3c,#ff5537,#ff4d33,#ff4530,#ff3f2c,#ff392a,#ff3327,#ff2e24,#ff2922,#ff2520,#ff211e,#ff1d1c,#ff1a1a,#ff1719,#ff1317,#ff1116,#ff0e15,#ff0b13,#ff0912,#ff0711,#ff0510,#ff030f,#ff010e,#ff000d)"></i><i style="top:82px;left:138px;width:329px;height:2px;background:linear-gradient(90deg,#00ff82,#0cff84,#23ff85,#3cff86,#56ff88,#71ff8a,#8eff8b,#adff8d,#ceff8f,#f0ff91,#ffeb88,#ffcd79,#ffb56c,#ffa162,#ff9059,#ff8151,#ff744b,#ff6845,#ff5e40,#ff553b,#ff4d37,#ff4533,#ff3f30,#ff392d,#ff332a,#ff2e27,#ff2925,#ff2523,#ff2120,#ff1d1f,#ff1a1d,#ff171b,#ff141a,#ff1118,#ff0e17,#ff0b15,#ff0914,#ff0713,#ff0512,#ff0311,#ff0110,#ff000f)"></i><i style="top:84px;left:138px;width:327px;height:2px;background:linear-gradient(90deg,#00ff88,#0bff8a,#22ff8b,#3bff8d,#55ff8f,#70ff90,#8dff92,#acff94,#ccff97,#efff99,#ffec90,#ffce80,#ffb673,#ffa168,#ff905f,#ff8156,#ff744f,#ff6849,#ff5e44,#ff553f,#ff4d3b,#ff4637,#ff3f33,#ff3930,#ff332d,#ff2e2a,#ff2928,#ff2525,#ff2123,#ff1d21,#ff1a1f,#ff171d,#ff141c,#ff111a,#ff0e19,#ff0b17,#ff0916,#ff0715,#ff0514,#ff0313,#ff0112,#ff0011)"></i><i style="top:86px;left:139px;width:324px;height:2px;background:linear-gradient(90deg,#00ff8e,#0dff90,#25ff92,#3fff94,#59ff96,#76ff98,#94ff9a,#b3ff9c,#d5ff9f,#f8fda1,#ffe292,#ffc682,#ffae75,#ff9a6a,#ff8a60,#ff7b58,#ff6f51,#ff634b,#ff5a45,#ff5140,#ff493c,#ff4238,#ff3b34,#ff3531,#ff302e,#ff2b2b,#ff2629,#ff2226,#ff1e24,#ff1b22,#ff1720,#ff141e,#ff111d,#ff0e1b,#ff0c1a,#ff0918,#ff0717,#ff0516,#ff0315,#ff0113,#ff0012)"></i><i style="top:88px;left:139px;width:322px;height:2px;background:linear-gradient(90deg,#00ff94,#0cff96,#24ff98,#3dff9a,#58ff9c,#74ff9f,#92ffa1,#b2ffa4,#d4ffa7,#f7fea9,#ffe39a,#ffc689,#ffaf7b,#ff9b70,#ff8a66,#ff7c5d,#ff6f56,#ff644f,#ff5a49,#ff5144,#ff4940,#ff423b,#ff3b38,#ff3634,#ff3031,#ff2b2e,#ff272b,#ff2229,#ff1e27,#ff1b24,#ff1723,#ff1421,#ff111f,#ff0e1d,#ff0c1c,#ff091a,#ff0719,#ff0518,#ff0316,#ff0115,#ff0014)"></i><i style="top:90px;left:139px;width:320px;height:2px;background:linear-gradient(90deg,#00ff9a,#0bff9d,#23ff9f,#3cffa1,#57ffa3,#73ffa6,#91ffa8,#b1ffab,#d3ffae,#f6feb1,#ffe4a2,#ffc790,#ffb082,#ff9c76,#ff8b6b,#ff7c62,#ff6f5a,#ff6454,#ff5a4e,#ff5148,#ff4943,#ff423f,#ff3c3b,#ff3637,#ff3034,#ff2b31,#ff272e,#ff222c,#ff1e29,#ff1b27,#ff1725,#ff1423,#ff1121,#ff0e1f,#ff0c1e,#ff091c,#ff071b,#ff051a,#ff0318,#ff0117,#ff0016)"></i><i style="top:92px;left:140px;width:318px;height:2px;background:linear-gradient(90deg,#00ffa1,#0dffa3,#25ffa5,#3fffa8,#59ffab,#76ffad,#94ffb0,#b4ffb3,#d6ffb6,#f8fdb9,#ffe1a7,#ffc596,#ffad87,#ff9a7a,#ff8970,#ff7b66,#ff6e5e,#ff6357,#ff5951,#ff504b,#ff4846,#ff4142,#ff3b3e,#ff353a,#ff3037,#ff2b34,#ff2631,#ff222e,#ff1e2c,#ff1a29,#ff1727,#ff1425,#ff1123,#ff0e21,#ff0c20,#ff091e,#ff071d,#ff051b,#ff021a,#ff0119,#ff0018)"></i><i style="top:94px;left:140px;width:316px;height:2px;background:linear-gradient(90deg,#00ffa7,#0cffaa,#24ffac,#3effaf,#58ffb2,#75ffb4,#93ffb8,#b3ffbb,#d5ffbe,#f7fdc1,#ffe2b0,#ffc69d,#ffae8d,#ff9a80,#ff8975,#ff7b6c,#ff6e63,#ff635c,#ff5955,#ff5050,#ff494a,#ff4146,#ff3b41,#ff353d,#ff303a,#ff2b37,#ff2634,#ff2231,#ff1e2e,#ff1a2c,#ff172a,#ff1428,#ff1126,#ff0e24,#ff0c22,#ff0920,#ff071f,#ff051d,#ff021c,#ff011b,#ff0019)"></i><i style="top:96px;left:140px;width:314px;height:2px;background:linear-gradient(90deg,#00ffae,#0cffb0,#24ffb3,#3effb6,#5affb9,#77ffbc,#96ffc0,#b8ffc3,#dbffc7,#fcfbc8,#ffdbb3,#ffbfa0,#ffa890,#ff9583,#ff8477,#ff766d,#ff6a65,#ff5f5d,#ff5557,#ff4d51,#ff454c,#ff3e47,#ff3843,#ff323f,#ff2d3b,#ff2838,#ff2335,#ff1f32,#ff1c2f,#ff182d,#ff152a,#ff1228,#ff0f26,#ff0c24,#ff0923,#ff0721,#ff0520,#ff031e,#ff011d,#ff001b)"></i><i style="top:98px;left:141px;width:311px;height:2px;background:linear-gradient(90deg,#00ffb5,#0effb7,#26ffba,#40ffbd,#5cffc1,#79ffc4,#99ffc8,#baffcc,#ddffd0,#fdf9cf,#ffdab9,#ffbea6,#ffa795,#ff9488,#ff847c,#ff7672,#ff6969,#ff5e62,#ff555b,#ff4c55,#ff454f,#ff3e4a,#ff3846,#ff3242,#ff2d3e,#ff283b,#ff2337,#ff1f34,#ff1b32,#ff182f,#ff152d,#ff122b,#ff0f29,#ff0c27,#ff0925,#ff0723,#ff0522,#ff0320,#ff011f,#ff001d)"></i><i style="top:100px;left:141px;width:309px;height:2px;background:linear-gradient(90deg,#00ffbb,#0dffbe,#25ffc1,#3fffc5,#5bffc8,#78ffcc,#97ffd0,#b9ffd4,#dcffd8,#fcfad9,#ffdbc2,#ffbfad,#ffa89c,#ff958e,#ff8482,#ff7677,#ff6a6e,#ff5f66,#ff555f,#ff4d59,#ff4553,#ff3e4e,#ff3849,#ff3245,#ff2d41,#ff283e,#ff233a,#ff1f37,#ff1b34,#ff1832,#ff152f,#ff122d,#ff0f2b,#ff0c29,#ff0927,#ff0725,#ff0524,#ff0322,#ff0121,#ff001f)"></i><i style="top:102px;left:141px;width:307px;height:2px;background:linear-gradient(90deg,#00ffc2,#0cffc5,#26ffc8,#40ffcc,#5dffd0,#7bffd4,#9bffd8,#beffdd,#e2ffe2,#fef4dd,#ffd4c4,#ffb8af,#ffa29e,#ff8f90,#ff7f84,#ff7179,#ff6570,#ff5b68,#ff5160,#ff495a,#ff4154,#ff3a4f,#ff344a,#ff2f46,#ff2a42,#ff253e,#ff213b,#ff1d38,#ff1935,#ff1533,#ff1230,#ff0f2e,#ff0c2c,#ff0a2a,#ff0728,#ff0526,#ff0324,#ff0123,#ff0021)"></i><i style="top:104px;left:142px;width:304px;height:2px;background:linear-gradient(90deg,#00ffc9,#0effcc,#28ffd0,#42ffd4,#5fffd8,#7dffdc,#9effe1,#c0ffe6,#e5ffeb,#fef2e5,#ffd2cb,#ffb7b5,#ffa1a4,#ff8e95,#ff7e88,#ff717e,#ff6574,#ff5a6c,#ff5164,#ff485e,#ff4158,#ff3a52,#ff344e,#ff2f49,#ff2945,#ff2541,#ff203e,#ff1c3b,#ff1938,#ff1535,#ff1233,#ff0f30,#ff0c2e,#ff0a2c,#ff072a,#ff0528,#ff0326,#ff0125,#ff0023)"></i><i style="top:106px;left:142px;width:302px;height:2px;background:linear-gradient(90deg,#00ffd0,#0dffd3,#26ffd7,#41ffdb,#5effe0,#7cffe4,#9cffe9,#bfffee,#e3fef3,#fef3ee,#ffd3d3,#ffb8bd,#ffa1ab,#ff8f9b,#ff7f8e,#ff7183,#ff6579,#ff5a70,#ff5169,#ff4962,#ff415c,#ff3a56,#ff3451,#ff2f4d,#ff2a48,#ff2545,#ff2141,#ff1d3e,#ff193b,#ff1538,#ff1235,#ff0f33,#ff0c30,#ff0a2e,#ff072c,#ff052a,#ff0328,#ff0127,#ff0025)"></i><i style="top:108px;left:142px;width:300px;height:2px;background:linear-gradient(90deg,#00ffd7,#0cffdb,#25ffdf,#40ffe3,#5dffe7,#7bffec,#9bfff1,#bdfef6,#e0fcfa,#fcf3f6,#ffd4dc,#ffb9c5,#ffa2b2,#ff8fa2,#ff7f94,#ff7189,#ff657e,#ff5b75,#ff516d,#ff4966,#ff4160,#ff3b5a,#ff3455,#ff2f50,#ff2a4c,#ff2548,#ff2144,#ff1d41,#ff193d,#ff153b,#ff1238,#ff0f35,#ff0c33,#ff0a31,#ff072e,#ff052c,#ff032b,#ff0129,#ff0027)"></i><i style="top:110px;left:143px;width:297px;height:2px;background:linear-gradient(90deg,#00ffde,#0fffe3,#29ffe7,#45ffec,#62fff0,#81fef5,#a2fdf9,#c3fafc,#e4f6fe,#fde8f6,#ffcadc,#ffb0c5,#ff9bb2,#ff88a2,#ff7995,#ff6c89,#ff607f,#ff5676,#ff4d6e,#ff4567,#ff3d60,#ff375b,#ff3155,#ff2b51,#ff264c,#ff2248,#ff1e45,#ff1a41,#ff163e,#ff133b,#ff1038,#ff0d36,#ff0a33,#ff0731,#ff052f,#ff032d,#ff012b,#ff0029)"></i><i style="top:112px;left:143px;width:295px;height:2px;background:linear-gradient(90deg,#00ffe6,#0effea,#28ffee,#43fff3,#60fef7,#7ffcfb,#9ef9fd,#bdf4fe,#dcefff,#f9e6fc,#ffcbe5,#ffb1cd,#ff9bb9,#ff89a9,#ff799b,#ff6c8f,#ff6084,#ff567b,#ff4d72,#ff456b,#ff3d64,#ff375e,#ff3159,#ff2b54,#ff2650,#ff224b,#ff1e48,#ff1a44,#ff1641,#ff133e,#ff103b,#ff0d38,#ff0a36,#ff0733,#ff0531,#ff032f,#ff012d,#ff002b)"></i><i style="top:114px;left:143px;width:293px;height:2px;background:linear-gradient(90deg,#00ffed,#0cfff1,#26fef6,#42fdf9,#5efbfc,#7bf7fe,#98f2ff,#b6edff,#d4e7ff,#f2e0fe,#ffccee,#ffb2d5,#ff9cc1,#ff89b0,#ff7aa1,#ff6c94,#ff6089,#ff5680,#ff4d77,#ff456f,#ff3e69,#ff3762,#ff315d,#ff2c58,#ff2753,#ff224f,#ff1e4b,#ff1a47,#ff1644,#ff1340,#ff103e,#ff0d3b,#ff0a38,#ff0736,#ff0534,#ff0331,#ff012f,#ff002d)"></i><i style="top:116px;left:144px;width:290px;height:2px;background:linear-gradient(90deg,#00fff5,#0ffef9,#2afcfc,#45f8fe,#61f4ff,#7defff,#9ae9ff,#b7e3ff,#d5ddff,#f3d7fe,#ffc2ed,#ffa9d5,#ff94c0,#ff83af,#ff74a1,#ff6794,#ff5b89,#ff5180,#ff4977,#ff4170,#ff3a69,#ff3363,#ff2d5d,#ff2858,#ff2353,#ff1f4f,#ff1b4b,#ff1747,#ff1444,#ff1041,#ff0d3e,#ff0a3b,#ff0839,#ff0536,#ff0334,#ff0132,#ff0030)"></i><i style="top:118px;left:144px;width:288px;height:2px;background:linear-gradient(90deg,#00fdfa,#0efbfd,#28f7fe,#42f2ff,#5dedff,#78e7ff,#94e2ff,#b0dcff,#cdd6ff,#ead0ff,#fec2f5,#ffaadd,#ff95c8,#ff83b6,#ff74a7,#ff679a,#ff5c8f,#ff5285,#ff497c,#ff4174,#ff3a6d,#ff3367,#ff2e61,#ff285b,#ff2357,#ff1f52,#ff1b4e,#ff174a,#ff1447,#ff1044,#ff0d41,#ff0a3e,#ff083b,#ff0539,#ff0336,#ff0134,#ff0032)"></i><i style="top:120px;left:144px;width:286px;height:2px;background:linear-gradient(90deg,#00f9fe,#0cf5ff,#25f0ff,#3febff,#59e6ff,#73e0ff,#8edbff,#aad5ff,#c5d0ff,#e2caff,#fbc1fb,#ffabe5,#ff95cf,#ff83bd,#ff74ad,#ff67a0,#ff5c94,#ff528a,#ff4981,#ff4178,#ff3a71,#ff336b,#ff2e65,#ff285f,#ff235a,#ff1f56,#ff1b51,#ff174d,#ff144a,#ff1046,#ff0d43,#ff0a40,#ff083e,#ff053b,#ff0339,#ff0136,#ff0034)"></i><i style="top:122px;left:144px;width:284px;height:2px;background:linear-gradient(90deg,#00f3ff,#0beeff,#23e9ff,#3ce4ff,#55dfff,#6fdaff,#89d4ff,#a3cfff,#bec9ff,#dac3ff,#f4bdfe,#ffabee,#ff96d7,#ff84c4,#ff75b4,#ff68a6,#ff5c9a,#ff528f,#ff4985,#ff417d,#ff3a75,#ff346f,#ff2e68,#ff2863,#ff245e,#ff1f59,#ff1b55,#ff1750,#ff144d,#ff1049,#ff0d46,#ff0a43,#ff0840,#ff053e,#ff033b,#ff0139,#ff0036)"></i><i style="top:124px;left:145px;width:281px;height:2px;background:linear-gradient(90deg,#00ecff,#0de7ff,#25e1ff,#3edcff,#57d7ff,#71d2ff,#8bccff,#a5c7ff,#c0c1ff,#dbbcff,#f6b5fe,#ffa3ec,#ff8ed6,#ff7dc3,#ff6fb3,#ff62a5,#ff5799,#ff4d8f,#ff4585,#ff3d7d,#ff3675,#ff306f,#ff2a68,#ff2563,#ff205e,#ff1c59,#ff1855,#ff1451,#ff114d,#ff0e49,#ff0b46,#ff0843,#ff0540,#ff033e,#ff013b,#ff0039)"></i><i style="top:126px;left:145px;width:279px;height:2px;background:linear-gradient(90deg,#00e5ff,#0ce0ff,#23dbff,#3bd6ff,#54d1ff,#6cccff,#85c6ff,#9fc1ff,#b9bbff,#d3b6ff,#eeb0ff,#fea3f4,#ff8fde,#ff7eca,#ff6fba,#ff62ab,#ff579f,#ff4d94,#ff458a,#ff3d81,#ff367a,#ff3073,#ff2a6c,#ff2566,#ff2061,#ff1c5c,#ff1858,#ff1454,#ff1150,#ff0e4c,#ff0b49,#ff0846,#ff0543,#ff0340,#ff013e,#ff003b)"></i><i style="top:128px;left:145px;width:277px;height:2px;background:linear-gradient(90deg,#00dfff,#0bdaff,#21d5ff,#39d0ff,#50cbff,#68c6ff,#81c1ff,#99bbff,#b2b6ff,#ccb0ff,#e6abff,#fca2fa,#ff90e6,#ff7ed1,#ff6fc0,#ff62b1,#ff57a4,#ff4e99,#ff458f,#ff3d86,#ff367e,#ff3077,#ff2a70,#ff256a,#ff2065,#ff1c60,#ff185b,#ff1457,#ff1153,#ff0e4f,#ff0b4c,#ff0849,#ff0546,#ff0343,#ff0140,#ff003e)"></i><i style="top:130px;left:146px;width:274px;height:2px;background:linear-gradient(90deg,#00d8ff,#0dd3ff,#23ceff,#3bc9ff,#52c4ff,#6abfff,#83baff,#9bb4ff,#b4afff,#cea9ff,#e8a4ff,#fd9bfa,#ff88e4,#ff77d0,#ff69bf,#ff5db1,#ff52a4,#ff4999,#ff408f,#ff3986,#ff327e,#ff2c76,#ff2770,#ff226a,#ff1d65,#ff1960,#ff155b,#ff1257,#ff0e53,#ff0b4f,#ff084c,#ff0648,#ff0345,#ff0143,#ff0040)"></i><i style="top:132px;left:146px;width:272px;height:2px;background:linear-gradient(90deg,#00d2ff,#0bcdff,#21c8ff,#38c3ff,#4fbfff,#66b9ff,#7eb4ff,#96afff,#aeaaff,#c7a4ff,#e09fff,#f898fd,#ff89ec,#ff78d7,#ff69c6,#ff5db7,#ff52a9,#ff499e,#ff4194,#ff398a,#ff3282,#ff2c7b,#ff2774,#ff226e,#ff1d68,#ff1963,#ff155e,#ff125a,#ff0e56,#ff0b52,#ff084e,#ff064b,#ff0348,#ff0145,#ff0042)"></i><i style="top:134px;left:146px;width:270px;height:2px;background:linear-gradient(90deg,#00ccff,#0ac8ff,#20c3ff,#36beff,#4cb9ff,#62b4ff,#79afff,#91aaff,#a8a5ff,#c0a0ff,#d99aff,#f195ff,#ff89f4,#ff78df,#ff6acd,#ff5dbd,#ff53af,#ff49a3,#ff4199,#ff398f,#ff3387,#ff2c7f,#ff2778,#ff2272,#ff1d6c,#ff1967,#ff1562,#ff125d,#ff0e59,#ff0b55,#ff0851,#ff064e,#ff034b,#ff0148,#ff0045)"></i><i style="top:136px;left:147px;width:267px;height:2px;background:linear-gradient(90deg,#00c6ff,#0cc2ff,#22bdff,#38b8ff,#4eb3ff,#64aeff,#7ba9ff,#93a4ff,#aa9fff,#c299ff,#db94ff,#f38eff,#ff82f2,#ff72dd,#ff64cb,#ff58bc,#ff4dae,#ff44a2,#ff3c98,#ff358e,#ff2f86,#ff297e,#ff2377,#ff1f71,#ff1a6b,#ff1666,#ff1261,#ff0f5d,#ff0c59,#ff0955,#ff0651,#ff034e,#ff014b,#ff0048)"></i><i style="top:138px;left:147px;width:265px;height:2px;background:linear-gradient(90deg,#00c1ff,#0bbdff,#20b8ff,#35b3ff,#4baeff,#61a9ff,#77a4ff,#8e9fff,#a59aff,#bc95ff,#d490ff,#ec8aff,#fd81f9,#ff72e4,#ff64d2,#ff58c2,#ff4eb4,#ff45a8,#ff3c9d,#ff3593,#ff2f8a,#ff2983,#ff237c,#ff1f75,#ff1a6f,#ff166a,#ff1265,#ff0f60,#ff0c5c,#ff0958,#ff0654,#ff0351,#ff014d,#ff004a)"></i><i style="top:140px;left:147px;width:263px;height:2px;background:linear-gradient(90deg,#00bcff,#0ab8ff,#1eb3ff,#33aeff,#48aaff,#5da5ff,#73a0ff,#899bff,#9f96ff,#b691ff,#cd8cff,#e486ff,#fa80fd,#ff72ec,#ff64d9,#ff58c8,#ff4eba,#ff45ad,#ff3da2,#ff3598,#ff2f8f,#ff2987,#ff2480,#ff1f79,#ff1a73,#ff166d,#ff1268,#ff0f63,#ff0c5f,#ff095b,#ff0657,#ff0353,#ff0150,#ff004d)"></i><i style="top:142px;left:148px;width:260px;height:2px;background:linear-gradient(90deg,#00b7ff,#0cb2ff,#20aeff,#35a9ff,#4aa4ff,#5f9fff,#759aff,#8b95ff,#a290ff,#b88bff,#cf86ff,#e781ff,#fb7afc,#ff6cea,#ff5ed7,#ff53c7,#ff49b8,#ff40ac,#ff38a1,#ff3197,#ff2b8e,#ff2586,#ff207f,#ff1b78,#ff1772,#ff136d,#ff1068,#ff0c63,#ff095e,#ff065a,#ff0356,#ff0153,#ff0050)"></i><i style="top:144px;left:148px;width:259px;height:2px;background:linear-gradient(90deg,#00b2ff,#0aaeff,#1ea9ff,#33a4ff,#48a0ff,#5c9bff,#7296ff,#8791ff,#9d8cff,#b387ff,#ca82ff,#e07dff,#f777fe,#ff6bf0,#ff5edd,#ff52cc,#ff48bd,#ff40b1,#ff38a5,#ff319b,#ff2a92,#ff258a,#ff2082,#ff1b7c,#ff1775,#ff1370,#ff0f6a,#ff0c66,#ff0961,#ff065d,#ff0359,#ff0155,#ff0052)"></i><i style="top:146px;left:148px;width:257px;height:2px;background:linear-gradient(90deg,#00aeff,#09a9ff,#1da5ff,#31a0ff,#459cff,#5997ff,#6e92ff,#838dff,#9888ff,#ae84ff,#c37eff,#d979ff,#f074ff,#fe6bf7,#ff5ee4,#ff53d2,#ff49c3,#ff40b6,#ff38aa,#ff31a0,#ff2b97,#ff258e,#ff2087,#ff1b80,#ff1779,#ff1373,#ff0f6e,#ff0c69,#ff0964,#ff0660,#ff035c,#ff0158,#ff0055)"></i><i style="top:148px;left:149px;width:254px;height:2px;background:linear-gradient(90deg,#00a9ff,#0ba5ff,#1ea0ff,#319cff,#4497ff,#5893ff,#6c8eff,#8089ff,#9584ff,#aa80ff,#bf7bff,#d576ff,#ea71ff,#fc6afb,#ff5eea,#ff52d8,#ff48c9,#ff3fbb,#ff38af,#ff31a5,#ff2a9b,#ff2592,#ff208b,#ff1b83,#ff177d,#ff1377,#ff0f71,#ff0c6c,#ff0968,#ff0663,#ff035f,#ff015b,#ff0058)"></i><i style="top:150px;left:149px;width:252px;height:2px;background:linear-gradient(90deg,#00a5ff,#09a0ff,#1c9cff,#2f98ff,#4293ff,#558fff,#698aff,#7c86ff,#9081ff,#a57cff,#b977ff,#ce73ff,#e36eff,#f868fe,#ff5ef1,#ff53df,#ff48cf,#ff40c1,#ff38b5,#ff31aa,#ff2aa0,#ff2597,#ff208f,#ff1b88,#ff1781,#ff137b,#ff0f75,#ff0c70,#ff096b,#ff0666,#ff0362,#ff015e,#ff005b)"></i><i style="top:152px;left:149px;width:250px;height:2px;background:linear-gradient(90deg,#00a1ff,#099cff,#1c98ff,#2f94ff,#428fff,#558aff,#6986ff,#7d81ff,#917cff,#a578ff,#ba73ff,#cf6eff,#e469ff,#f963fe,#ff59ef,#ff4edd,#ff44ce,#ff3bc0,#ff34b4,#ff2da9,#ff279f,#ff2196,#ff1c8e,#ff1887,#ff1480,#ff107a,#ff0c74,#ff096f,#ff066a,#ff0366,#ff0161,#ff005e)"></i><i style="top:154px;left:150px;width:247px;height:2px;background:linear-gradient(90deg,#009cff,#0a98ff,#1c94ff,#2f8fff,#418bff,#5487ff,#6782ff,#7b7dff,#8e79ff,#a274ff,#b66fff,#ca6bff,#df66ff,#f461ff,#ff58f5,#ff4de3,#ff44d3,#ff3bc5,#ff33b8,#ff2dad,#ff27a3,#ff219a,#ff1c92,#ff188b,#ff1484,#ff107e,#ff0c78,#ff0972,#ff066d,#ff0369,#ff0165,#ff0061)"></i><i style="top:156px;left:150px;width:245px;height:2px;background:linear-gradient(90deg,#0098ff,#0994ff,#1b90ff,#2d8cff,#3f88ff,#5183ff,#647fff,#777aff,#8a76ff,#9d71ff,#b16dff,#c468ff,#d863ff,#ed5eff,#fd58fb,#ff4dea,#ff44d9,#ff3bcb,#ff34be,#ff2db3,#ff27a8,#ff219f,#ff1c97,#ff188f,#ff1488,#ff1081,#ff0c7b,#ff0976,#ff0671,#ff036c,#ff0168,#ff0064)"></i><i style="top:158px;left:150px;width:243px;height:2px;background:linear-gradient(90deg,#0095ff,#0991ff,#1b8cff,#2d88ff,#3f84ff,#517fff,#647bff,#7776ff,#8a72ff,#9e6dff,#b268ff,#c664ff,#da5fff,#ee5aff,#fe53fa,#ff49e8,#ff3fd8,#ff37c9,#ff30bd,#ff29b1,#ff23a7,#ff1e9e,#ff1995,#ff158e,#ff1187,#ff0d80,#ff0a7a,#ff0675,#ff0370,#ff016b,#ff0067)"></i><i style="top:160px;left:151px;width:240px;height:2px;background:linear-gradient(90deg,#0091ff,#0a8dff,#1b88ff,#2d84ff,#3f80ff,#517cff,#6377ff,#7573ff,#886eff,#9b6aff,#ae65ff,#c161ff,#d55cff,#e957ff,#fb52fd,#ff48ee,#ff3fdd,#ff37cf,#ff2fc2,#ff29b6,#ff23ac,#ff1ea2,#ff199a,#ff1592,#ff118b,#ff0d84,#ff0a7e,#ff0678,#ff0373,#ff016e,#ff006a)"></i><i style="top:162px;left:151px;width:238px;height:2px;background:linear-gradient(90deg,#008dff,#0989ff,#1a85ff,#2b81ff,#3c7dff,#4e79ff,#6074ff,#7270ff,#846cff,#9667ff,#a963ff,#bc5eff,#cf5aff,#e255ff,#f550ff,#ff48f5,#ff3fe4,#ff37d5,#ff2fc7,#ff29bb,#ff23b1,#ff1ea7,#ff199e,#ff1596,#ff118f,#ff0d88,#ff0a82,#ff067c,#ff0377,#ff0172,#ff006d)"></i><i style="top:164px;left:151px;width:236px;height:2px;background:linear-gradient(90deg,#008aff,#0886ff,#1882ff,#297eff,#3a7aff,#4b76ff,#5d72ff,#6e6dff,#8069ff,#9265ff,#a460ff,#b65cff,#c957ff,#dc53ff,#ef4eff,#fd48fb,#ff3feb,#ff37db,#ff30cd,#ff29c1,#ff23b6,#ff1eac,#ff19a3,#ff159b,#ff1193,#ff0d8c,#ff0a86,#ff0680,#ff037a,#ff0175,#ff0071)"></i><i style="top:166px;left:152px;width:233px;height:2px;background:linear-gradient(90deg,#0086ff,#0a82ff,#1a7eff,#2b7aff,#3c76ff,#4d72ff,#5f6eff,#7069ff,#8265ff,#9461ff,#a75cff,#b958ff,#cc53ff,#df4eff,#f24aff,#fe43f8,#ff3ae7,#ff32d8,#ff2bcb,#ff25be,#ff1fb4,#ff1aaa,#ff16a1,#ff1199,#ff0d91,#ff0a8a,#ff0784,#ff047e,#ff0179,#ff0074)"></i><i style="top:168px;left:152px;width:231px;height:2px;background:linear-gradient(90deg,#0083ff,#097fff,#197bff,#2977ff,#3a73ff,#4b6fff,#5c6bff,#6d67ff,#7e62ff,#905eff,#a25aff,#b455ff,#c651ff,#d94cff,#eb48ff,#fc43fd,#ff3aee,#ff32de,#ff2bd0,#ff25c4,#ff1fb9,#ff1aaf,#ff16a6,#ff119d,#ff0e96,#ff0a8f,#ff0788,#ff0482,#ff017d,#ff0077)"></i><i style="top:170px;left:152px;width:229px;height:2px;background:linear-gradient(90deg,#0080ff,#087cff,#1878ff,#2874ff,#3870ff,#486cff,#5968ff,#6a64ff,#7b60ff,#8c5cff,#9d58ff,#af53ff,#c04fff,#d24bff,#e546ff,#f741ff,#ff3bf5,#ff33e5,#ff2bd6,#ff25ca,#ff1fbe,#ff1ab4,#ff16aa,#ff11a2,#ff0e9a,#ff0a93,#ff078c,#ff0486,#ff0180,#ff007b)"></i><i style="top:172px;left:153px;width:226px;height:2px;background:linear-gradient(90deg,#007dff,#0979ff,#1975ff,#2971ff,#3a6dff,#4a69ff,#5b65ff,#6c60ff,#7d5cff,#8f58ff,#a054ff,#b24fff,#c44bff,#d646ff,#e842ff,#fa3dfe,#ff36f1,#ff2ee1,#ff27d3,#ff21c7,#ff1cbb,#ff17b1,#ff12a8,#ff0ea0,#ff0a98,#ff0791,#ff048a,#ff0184,#ff007f)"></i><i style="top:174px;left:153px;width:224px;height:2px;background:linear-gradient(90deg,#007aff,#0876ff,#1872ff,#286eff,#386aff,#4866ff,#5862ff,#695eff,#7a5aff,#8a56ff,#9c52ff,#ad4dff,#be49ff,#d045ff,#e240ff,#f43cff,#ff36f8,#ff2ee8,#ff27d9,#ff21cc,#ff1cc1,#ff17b6,#ff12ad,#ff0ea4,#ff0a9c,#ff0795,#ff048e,#ff0188,#ff0082)"></i><i style="top:176px;left:153px;width:222px;height:2px;background:linear-gradient(90deg,#0077ff,#0773ff,#1770ff,#266cff,#3668ff,#4664ff,#5660ff,#665cff,#7658ff,#8654ff,#9750ff,#a84bff,#b947ff,#ca43ff,#dc3fff,#ed3aff,#fc35fc,#ff2eee,#ff27df,#ff21d2,#ff1cc6,#ff17bb,#ff12b2,#ff0ea9,#ff0aa1,#ff0799,#ff0492,#ff018c,#ff0086)"></i><i style="top:178px;left:154px;width:219px;height:2px;background:linear-gradient(90deg,#0074ff,#0970ff,#186cff,#2868ff,#3864ff,#4860ff,#585cff,#6858ff,#7954ff,#8950ff,#9a4cff,#ab48ff,#bc43ff,#ce3fff,#df3bff,#f136ff,#fe31fa,#ff2aeb,#ff23dc,#ff1dcf,#ff18c3,#ff13b9,#ff0faf,#ff0ba6,#ff079e,#ff0497,#ff0190,#ff008a)"></i><i style="top:180px;left:154px;width:217px;height:2px;background:linear-gradient(90deg,#0071ff,#086eff,#176aff,#2666ff,#3662ff,#455eff,#555aff,#6556ff,#7552ff,#854eff,#964aff,#a646ff,#b742ff,#c83dff,#d939ff,#eb35ff,#fb30fe,#ff2af1,#ff23e2,#ff1dd5,#ff18c9,#ff13be,#ff0fb4,#ff0bab,#ff07a3,#ff049b,#ff0194,#ff008e)"></i><i style="top:182px;left:154px;width:215px;height:2px;background:linear-gradient(90deg,#006fff,#076bff,#1667ff,#2564ff,#3460ff,#435cff,#5358ff,#6254ff,#7250ff,#824cff,#9248ff,#a244ff,#b240ff,#c33cff,#d338ff,#e434ff,#f52fff,#ff2af7,#ff23e8,#ff1ddb,#ff18ce,#ff13c3,#ff0fb9,#ff0bb0,#ff07a7,#ff04a0,#ff0198,#ff0092)"></i><i style="top:184px;left:155px;width:212px;height:2px;background:linear-gradient(90deg,#006cff,#0968ff,#1864ff,#2761ff,#365dff,#4559ff,#5555ff,#6551ff,#744dff,#8549ff,#9545ff,#a541ff,#b63cff,#c638ff,#d734ff,#e830ff,#f92bfe,#ff25f3,#ff1fe4,#ff19d7,#ff14cb,#ff10c0,#ff0bb6,#ff08ad,#ff04a5,#ff019d,#ff0096)"></i><i style="top:186px;left:155px;width:210px;height:2px;background:linear-gradient(90deg,#0069ff,#0866ff,#1662ff,#255eff,#345bff,#4357ff,#5253ff,#624fff,#714bff,#8147ff,#9143ff,#a13fff,#b13bff,#c137ff,#d133ff,#e22fff,#f32aff,#fe25fa,#ff1feb,#ff19dd,#ff14d0,#ff10c5,#ff0cbb,#ff08b2,#ff04a9,#ff01a1,#ff009a)"></i><i style="top:188px;left:155px;width:208px;height:2px;background:linear-gradient(90deg,#0067ff,#0763ff,#1560ff,#245cff,#3259ff,#4155ff,#5051ff,#5f4dff,#6e49ff,#7d46ff,#8d42ff,#9c3eff,#ac3aff,#bc36ff,#cc32ff,#dc2dff,#ec29ff,#fb25fd,#ff1ff1,#ff19e3,#ff14d6,#ff10cb,#ff0cc0,#ff08b7,#ff04ae,#ff01a6,#ff009f)"></i><i style="top:190px;left:155px;width:206px;height:2px;background:linear-gradient(90deg,#0065ff,#0661ff,#145eff,#225aff,#3057ff,#3f53ff,#4d4fff,#5c4bff,#6b48ff,#7a44ff,#8940ff,#983cff,#a738ff,#b734ff,#c630ff,#d62cff,#e628ff,#f624ff,#ff1ff8,#ff19e9,#ff14dc,#ff10d0,#ff0cc5,#ff08bc,#ff04b3,#ff01aa,#ff00a3)"></i><i style="top:192px;left:156px;width:203px;height:2px;background:linear-gradient(90deg,#0062ff,#085fff,#165bff,#2457ff,#3254ff,#4150ff,#504cff,#5e48ff,#6d45ff,#7d41ff,#8c3dff,#9b39ff,#ab35ff,#bb31ff,#ca2dff,#da29ff,#eb25ff,#fa20fe,#ff1bf3,#ff15e5,#ff11d8,#ff0ccc,#ff08c2,#ff05b8,#ff01af,#ff00a7)"></i><i style="top:194px;left:156px;width:202px;height:2px;background:linear-gradient(90deg,#0060ff,#075cff,#1559ff,#2355ff,#3152ff,#3f4eff,#4e4aff,#5c47ff,#6b43ff,#7a3fff,#893bff,#9837ff,#a733ff,#b62fff,#c62bff,#d627ff,#e623ff,#f61fff,#ff1af8,#ff15ea,#ff10dd,#ff0cd1,#ff08c6,#ff04bc,#ff01b3,#ff00ab)"></i><i style="top:196px;left:156px;width:200px;height:2px;background:linear-gradient(90deg,#005eff,#065aff,#1457ff,#2153ff,#2f50ff,#3d4cff,#4b49ff,#5945ff,#6841ff,#763eff,#853aff,#9436ff,#a332ff,#b22eff,#c12aff,#d026ff,#e022ff,#ef1eff,#fd1afd,#ff15f0,#ff10e3,#ff0cd6,#ff08cb,#ff04c1,#ff01b8,#ff00b0)"></i><i style="top:198px;left:157px;width:197px;height:2px;background:linear-gradient(90deg,#005bff,#0758ff,#1455ff,#2251ff,#2f4eff,#3d4aff,#4a47ff,#5843ff,#663fff,#743cff,#8238ff,#9134ff,#9f31ff,#ae2dff,#bc29ff,#cb25ff,#da21ff,#e91eff,#f81aff,#ff15f6,#ff10e8,#ff0cdc,#ff08d1,#ff04c7,#ff01bd,#ff00b5)"></i><i style="top:200px;left:157px;width:195px;height:2px;background:linear-gradient(90deg,#0059ff,#0756ff,#1452ff,#224fff,#304bff,#3d48ff,#4b44ff,#5941ff,#683dff,#7639ff,#8435ff,#9332ff,#a22eff,#b12aff,#c026ff,#cf22ff,#de1eff,#ee1aff,#fc16fd,#ff11f2,#ff0ce4,#ff08d8,#ff04cd,#ff01c3,#ff00b9)"></i><i style="top:202px;left:157px;width:193px;height:2px;background:linear-gradient(90deg,#0057ff,#0654ff,#1351ff,#214dff,#2e4aff,#3b46ff,#4943ff,#573fff,#653bff,#7338ff,#8134ff,#8f30ff,#9d2dff,#ac29ff,#bb25ff,#ca21ff,#d81dff,#e819ff,#f716ff,#ff11f8,#ff0cea,#ff08de,#ff04d2,#ff01c8,#ff00be)"></i><i style="top:204px;left:158px;width:190px;height:2px;background:linear-gradient(90deg,#0055ff,#0752ff,#144eff,#214bff,#2e48ff,#3b44ff,#4841ff,#553dff,#633aff,#7136ff,#7e33ff,#8c2fff,#9a2bff,#a828ff,#b624ff,#c520ff,#d31dff,#e219ff,#f115ff,#fd11fd,#ff0cf0,#ff08e3,#ff04d8,#ff01cd,#ff00c4)"></i><i style="top:206px;left:158px;width:188px;height:2px;background:linear-gradient(90deg,#0053ff,#0650ff,#134dff,#1f49ff,#2c46ff,#3943ff,#463fff,#533cff,#6038ff,#6d35ff,#7b32ff,#882eff,#962aff,#a427ff,#b223ff,#c020ff,#ce1cff,#dc18ff,#ea14ff,#f911ff,#ff0cf7,#ff08ea,#ff04de,#ff01d3,#ff00c9)"></i><i style="top:208px;left:158px;width:186px;height:2px;background:linear-gradient(90deg,#0051ff,#064eff,#134bff,#2047ff,#2d44ff,#3a40ff,#473dff,#543aff,#6236ff,#6f32ff,#7d2fff,#8b2bff,#9928ff,#a724ff,#b520ff,#c41cff,#d219ff,#e115ff,#ef11ff,#fc0dfd,#ff09f2,#ff05e5,#ff01d9,#ff00ce)"></i><i style="top:210px;left:159px;width:183px;height:2px;background:linear-gradient(90deg,#004fff,#074cff,#1349ff,#2045ff,#2c42ff,#393fff,#463bff,#5338ff,#6034ff,#6d31ff,#7b2eff,#882aff,#9626ff,#a323ff,#b11fff,#bf1cff,#cd18ff,#db14ff,#e910ff,#f80dff,#ff09f8,#ff05eb,#ff01df,#ff00d4)"></i><i style="top:212px;left:159px;width:181px;height:2px;background:linear-gradient(90deg,#004dff,#064aff,#1247ff,#1f44ff,#2b41ff,#373dff,#443aff,#5137ff,#5d33ff,#6a30ff,#772cff,#8429ff,#9226ff,#9f22ff,#ac1fff,#ba1bff,#c817ff,#d514ff,#e310ff,#f10cff,#fd09fd,#ff05f1,#ff01e5,#ff00da)"></i><i style="top:214px;left:159px;width:179px;height:2px;background:linear-gradient(90deg,#004cff,#0648ff,#1245ff,#1f42ff,#2c3fff,#383bff,#4538ff,#5234ff,#5f31ff,#6c2dff,#7a2aff,#8726ff,#9523ff,#a21fff,#b01cff,#be18ff,#cc14ff,#da11ff,#e90dff,#f709ff,#ff05f8,#ff01ec,#ff00e0)"></i><i style="top:216px;left:160px;width:176px;height:2px;background:linear-gradient(90deg,#004aff,#0746ff,#1343ff,#1f40ff,#2b3dff,#3839ff,#4436ff,#5133ff,#5d30ff,#6a2cff,#7729ff,#8425ff,#9122ff,#9f1eff,#ac1bff,#ba17ff,#c714ff,#d510ff,#e30cff,#f109ff,#fd05fd,#ff01f2,#ff00e6)"></i><i style="top:218px;left:160px;width:174px;height:2px;background:linear-gradient(90deg,#0048ff,#0645ff,#1242ff,#1e3fff,#2a3bff,#3638ff,#4235ff,#4e32ff,#5b2eff,#672bff,#7428ff,#8124ff,#8d21ff,#9a1eff,#a71aff,#b517ff,#c213ff,#cf10ff,#dd0cff,#ea08ff,#f805ff,#ff01f8,#ff00ec)"></i><i style="top:220px;left:160px;width:172px;height:2px;background:linear-gradient(90deg,#0046ff,#0543ff,#1140ff,#1d3dff,#283aff,#3437ff,#4034ff,#4c31ff,#582dff,#642aff,#7127ff,#7d24ff,#8a20ff,#961dff,#a31aff,#b016ff,#bd13ff,#ca0fff,#d70cff,#e408ff,#f205ff,#fd01fd,#ff00f2)"></i><i style="top:222px;left:161px;width:169px;height:2px;background:linear-gradient(90deg,#0044ff,#0741ff,#123eff,#1e3bff,#2a38ff,#3635ff,#4231ff,#4f2eff,#5b2bff,#6828ff,#7424ff,#8121ff,#8e1dff,#9a1aff,#a717ff,#b513ff,#c210ff,#cf0cff,#dd08ff,#ea05ff,#f801ff,#ff00f8)"></i><i style="top:224px;left:161px;width:167px;height:2px;background:linear-gradient(90deg,#0043ff,#0640ff,#113dff,#1d3aff,#2937ff,#3533ff,#4030ff,#4c2dff,#582aff,#6527ff,#7123ff,#7d20ff,#8a1dff,#9619ff,#a316ff,#b013ff,#bd0fff,#ca0cff,#d708ff,#e405ff,#f101ff,#fd00fd)"></i><i style="top:226px;left:161px;width:165px;height:2px;background:linear-gradient(90deg,#0041ff,#053eff,#113bff,#1c38ff,#2735ff,#3332ff,#3e2fff,#4a2cff,#5629ff,#6226ff,#6e23ff,#7a1fff,#861cff,#9219ff,#9f15ff,#ab12ff,#b80fff,#c40bff,#d108ff,#de05ff,#eb01ff,#f800ff)"></i><i style="top:228px;left:162px;width:162px;height:2px;background:linear-gradient(90deg,#0040ff,#073cff,#1239ff,#1e36ff,#2933ff,#3530ff,#412dff,#4d2aff,#5926ff,#6523ff,#7120ff,#7e1dff,#8a19ff,#9716ff,#a313ff,#b00fff,#bd0cff,#ca08ff,#d705ff,#e401ff,#f100ff)"></i><i style="top:230px;left:162px;width:160px;height:2px;background:linear-gradient(90deg,#003eff,#063bff,#1138ff,#1c35ff,#2832ff,#332fff,#3f2cff,#4b29ff,#5626ff,#6222ff,#6e1fff,#7a1cff,#8619ff,#9315ff,#9f12ff,#ab0fff,#b80bff,#c508ff,#d105ff,#de01ff,#eb00ff)"></i><i style="top:232px;left:162px;width:158px;height:2px;background:linear-gradient(90deg,#003dff,#053aff,#1037ff,#1b34ff,#2631ff,#322eff,#3d2bff,#4828ff,#5425ff,#5f22ff,#6b1eff,#771bff,#8318ff,#8f15ff,#9b12ff,#a70eff,#b30bff,#bf08ff,#cc05ff,#d801ff,#e500ff)"></i><i style="top:234px;left:163px;width:155px;height:2px;background:linear-gradient(90deg,#003bff,#0638ff,#1235ff,#1d32ff,#282fff,#342cff,#3f29ff,#4b25ff,#5722ff,#631fff,#6f1cff,#7b19ff,#8715ff,#9312ff,#9f0fff,#ac0bff,#b808ff,#c505ff,#d201ff,#df00ff)"></i><i style="top:236px;left:163px;width:153px;height:2px;background:linear-gradient(90deg,#003aff,#0637ff,#1134ff,#1c31ff,#272eff,#322bff,#3e28ff,#4925ff,#5422ff,#601eff,#6c1bff,#7718ff,#8315ff,#8f12ff,#9b0eff,#a70bff,#b408ff,#c005ff,#cc01ff,#d900ff)"></i><i style="top:238px;left:163px;width:151px;height:2px;background:linear-gradient(90deg,#0038ff,#0535ff,#1033ff,#1b30ff,#262dff,#312aff,#3c27ff,#4724ff,#5221ff,#5d1eff,#691bff,#7418ff,#8014ff,#8b11ff,#970eff,#a30bff,#af08ff,#bb04ff,#c701ff,#d300ff)"></i><i style="top:240px;left:164px;width:148px;height:2px;background:linear-gradient(90deg,#0037ff,#0634ff,#1131ff,#1c2eff,#282bff,#3328ff,#3e25ff,#4a22ff,#551eff,#611bff,#6c18ff,#7815ff,#8412ff,#900eff,#9c0bff,#a808ff,#b405ff,#c101ff,#cd00ff)"></i><i style="top:242px;left:164px;width:146px;height:2px;background:linear-gradient(90deg,#0035ff,#0632ff,#1030ff,#1b2dff,#262aff,#3127ff,#3c24ff,#4721ff,#531eff,#5e1bff,#6918ff,#7514ff,#8011ff,#8c0eff,#980bff,#a408ff,#b005ff,#bc01ff,#c800ff)"></i><i style="top:244px;left:164px;width:144px;height:2px;background:linear-gradient(90deg,#0034ff,#0531ff,#102eff,#1a2cff,#2529ff,#3026ff,#3a23ff,#4520ff,#501dff,#5b1aff,#6617ff,#7114ff,#7d11ff,#880eff,#940bff,#9f08ff,#ab04ff,#b601ff,#c200ff)"></i><i style="top:246px;left:165px;width:142px;height:2px;background:linear-gradient(90deg,#0033ff,#0630ff,#102dff,#1a2aff,#2527ff,#2f25ff,#3a22ff,#441fff,#4f1cff,#5a19ff,#6516ff,#7013ff,#7b10ff,#860dff,#910aff,#9c07ff,#a704ff,#b301ff,#be00ff)"></i><i style="top:248px;left:165px;width:140px;height:2px;background:linear-gradient(90deg,#0031ff,#052fff,#0f2cff,#1929ff,#2326ff,#2e24ff,#3821ff,#421eff,#4d1bff,#5718ff,#6215ff,#6c13ff,#7710ff,#820dff,#8d0aff,#9807ff,#a304ff,#ae01ff,#b900ff)"></i><i style="top:250px;left:165px;width:138px;height:2px;background:linear-gradient(90deg,#0030ff,#052dff,#102bff,#1a28ff,#2425ff,#2f22ff,#3a1fff,#441cff,#4f19ff,#5a16ff,#6513ff,#7010ff,#7b0dff,#860aff,#9207ff,#9d04ff,#a801ff,#b400ff)"></i><i style="top:252px;left:166px;width:135px;height:2px;background:linear-gradient(90deg,#002fff,#062cff,#1029ff,#1a26ff,#2424ff,#2e21ff,#391eff,#431bff,#4d18ff,#5816ff,#6313ff,#6d10ff,#780dff,#830aff,#8e07ff,#9904ff,#a401ff,#af00ff)"></i><i style="top:254px;left:166px;width:133px;height:2px;background:linear-gradient(90deg,#002eff,#052bff,#0f28ff,#1926ff,#2323ff,#2d20ff,#371dff,#411bff,#4b18ff,#5515ff,#6012ff,#6a0fff,#750cff,#7f0aff,#8a07ff,#9504ff,#9f01ff,#aa00ff)"></i><i style="top:256px;left:166px;width:131px;height:2px;background:linear-gradient(90deg,#002cff,#052aff,#0f27ff,#1a24ff,#2421ff,#2e1eff,#391cff,#4319ff,#4e16ff,#5813ff,#6310ff,#6e0dff,#790aff,#8407ff,#8f04ff,#9a01ff,#a500ff)"></i><i style="top:258px;left:167px;width:128px;height:2px;background:linear-gradient(90deg,#002bff,#0628ff,#1026ff,#1923ff,#2320ff,#2d1dff,#381bff,#4218ff,#4c15ff,#5612ff,#610fff,#6b0dff,#760aff,#8007ff,#8b04ff,#9601ff,#a100ff)"></i><i style="top:260px;left:167px;width:126px;height:2px;background:linear-gradient(90deg,#002aff,#0527ff,#0f25ff,#1822ff,#221fff,#2c1dff,#361aff,#4017ff,#4a15ff,#5412ff,#5e0fff,#680cff,#7209ff,#7d07ff,#8704ff,#9101ff,#9c00ff)"></i><i style="top:262px;left:167px;width:124px;height:2px;background:linear-gradient(90deg,#0029ff,#0526ff,#0e24ff,#1721ff,#211fff,#2a1cff,#3419ff,#3e17ff,#4714ff,#5111ff,#5b0fff,#650cff,#6f09ff,#7906ff,#8304ff,#8d01ff,#9800ff)"></i><i style="top:264px;left:167px;width:122px;height:2px;background:linear-gradient(90deg,#0028ff,#0525ff,#0e23ff,#1820ff,#221dff,#2c1aff,#3618ff,#4015ff,#4a12ff,#540fff,#5f0cff,#690aff,#7307ff,#7e04ff,#8801ff,#9300ff)"></i><i style="top:266px;left:168px;width:119px;height:2px;background:linear-gradient(90deg,#0027ff,#0524ff,#0f21ff,#181fff,#221cff,#2b1aff,#3517ff,#3f14ff,#4811ff,#520fff,#5c0cff,#6609ff,#7006ff,#7a04ff,#8501ff,#8f00ff)"></i><i style="top:268px;left:168px;width:117px;height:2px;background:linear-gradient(90deg,#0026ff,#0523ff,#0e21ff,#171eff,#201bff,#2a19ff,#3316ff,#3c14ff,#4611ff,#500eff,#590cff,#6309ff,#6d06ff,#7704ff,#8101ff,#8b00ff)"></i><i style="top:270px;left:168px;width:115px;height:2px;background:linear-gradient(90deg,#0025ff,#0522ff,#0e1fff,#181dff,#221aff,#2b17ff,#3515ff,#3f12ff,#490fff,#530cff,#5d09ff,#6707ff,#7204ff,#7c01ff,#8600ff)"></i><i style="top:272px;left:169px;width:112px;height:2px;background:linear-gradient(90deg,#0023ff,#0521ff,#0e1eff,#181cff,#2119ff,#2a16ff,#3414ff,#3e11ff,#470eff,#510cff,#5b09ff,#6406ff,#6e04ff,#7801ff,#8200ff)"></i><i style="top:274px;left:169px;width:110px;height:2px;background:linear-gradient(90deg,#0022ff,#0520ff,#0e1dff,#171bff,#2018ff,#2916ff,#3213ff,#3b11ff,#450eff,#4e0bff,#5809ff,#6106ff,#6b04ff,#7501ff,#7e00ff)"></i><i style="top:276px;left:169px;width:108px;height:2px;background:linear-gradient(90deg,#0021ff,#041fff,#0d1dff,#161aff,#1e18ff,#2715ff,#3013ff,#3910ff,#430eff,#4c0bff,#5509ff,#5e06ff,#6803ff,#7101ff,#7a00ff)"></i><i style="top:278px;left:170px;width:105px;height:2px;background:linear-gradient(90deg,#0020ff,#051eff,#0e1bff,#1719ff,#2116ff,#2a14ff,#3311ff,#3d0eff,#460cff,#5009ff,#5906ff,#6304ff,#6d01ff,#7600ff)"></i><i style="top:280px;left:170px;width:103px;height:2px;background:linear-gradient(90deg,#001fff,#051dff,#0d1aff,#1618ff,#1f15ff,#2813ff,#3110ff,#3b0eff,#440bff,#4d09ff,#5606ff,#6004ff,#6901ff,#7300ff)"></i><i style="top:282px;left:170px;width:101px;height:2px;background:linear-gradient(90deg,#001eff,#041cff,#0d1aff,#1517ff,#1e15ff,#2712ff,#3010ff,#380dff,#410bff,#4a08ff,#5306ff,#5d03ff,#6601ff,#6f00ff)"></i><i style="top:284px;left:171px;width:98px;height:2px;background:linear-gradient(90deg,#001dff,#051bff,#0e18ff,#1716ff,#2013ff,#2911ff,#330eff,#3c0cff,#4509ff,#4f06ff,#5804ff,#6201ff,#6b00ff)"></i><i style="top:286px;left:171px;width:96px;height:2px;background:linear-gradient(90deg,#001cff,#051aff,#0d18ff,#1615ff,#1f13ff,#2810ff,#310eff,#3a0bff,#4309ff,#4c06ff,#5504ff,#5e01ff,#6800ff)"></i><i style="top:288px;left:171px;width:94px;height:2px;background:linear-gradient(90deg,#001cff,#0419ff,#0c17ff,#1515ff,#1e12ff,#2610ff,#2f0dff,#380bff,#4008ff,#4906ff,#5203ff,#5b01ff,#6400ff)"></i><i style="top:290px;left:172px;width:91px;height:2px;background:linear-gradient(90deg,#001bff,#0518ff,#0e16ff,#1713ff,#2011ff,#290eff,#320bff,#3b09ff,#4506ff,#4e04ff,#5701ff,#6100ff)"></i><i style="top:292px;left:172px;width:89px;height:2px;background:linear-gradient(90deg,#001aff,#0517ff,#0d15ff,#1612ff,#1f10ff,#270eff,#300bff,#3909ff,#4206ff,#4b04ff,#5401ff,#5d00ff)"></i><i style="top:294px;left:172px;width:87px;height:2px;background:linear-gradient(90deg,#0019ff,#0417ff,#0c14ff,#1512ff,#1d0fff,#260dff,#2e0bff,#3708ff,#4006ff,#4803ff,#5101ff,#5a00ff)"></i><i style="top:296px;left:173px;width:85px;height:2px;background:linear-gradient(90deg,#0018ff,#0416ff,#0d13ff,#1511ff,#1d0fff,#250cff,#2e0aff,#3608ff,#3e05ff,#4703ff,#4f01ff,#5800ff)"></i><i style="top:298px;left:173px;width:83px;height:2px;background:linear-gradient(90deg,#0017ff,#0515ff,#0d12ff,#1610ff,#1f0dff,#280bff,#3108ff,#3a06ff,#4203ff,#4c01ff,#5500ff)"></i><i style="top:300px;left:173px;width:81px;height:2px;background:linear-gradient(90deg,#0016ff,#0414ff,#0c12ff,#150fff,#1d0dff,#260aff,#2f08ff,#3706ff,#4003ff,#4901ff,#5100ff)"></i><i style="top:302px;left:174px;width:78px;height:2px;background:linear-gradient(90deg,#0015ff,#0413ff,#0c11ff,#150fff,#1d0cff,#250aff,#2d08ff,#3505ff,#3e03ff,#4601ff,#4e00ff)"></i><i style="top:304px;left:174px;width:76px;height:2px;background:linear-gradient(90deg,#0015ff,#0412ff,#0c10ff,#130eff,#1b0cff,#230aff,#2b07ff,#3305ff,#3b03ff,#4301ff,#4b00ff)"></i><i style="top:306px;left:174px;width:74px;height:2px;background:linear-gradient(90deg,#0014ff,#0412ff,#0c0fff,#150dff,#1d0aff,#2608ff,#2e06ff,#3703ff,#4001ff,#4800ff)"></i><i style="top:308px;left:175px;width:71px;height:2px;background:linear-gradient(90deg,#0013ff,#0411ff,#0c0eff,#140cff,#1c0aff,#2508ff,#2d05ff,#3503ff,#3d01ff,#4500ff)"></i><i style="top:310px;left:175px;width:69px;height:2px;background:linear-gradient(90deg,#0012ff,#0410ff,#0c0eff,#130cff,#1b09ff,#2307ff,#2b05ff,#3203ff,#3a01ff,#4200ff)"></i><i style="top:312px;left:175px;width:67px;height:2px;background:linear-gradient(90deg,#0011ff,#040fff,#0d0dff,#150aff,#1d08ff,#2606ff,#2e03ff,#3701ff,#3f00ff)"></i><i style="top:314px;left:176px;width:64px;height:2px;background:linear-gradient(90deg,#0011ff,#050eff,#0c0cff,#140aff,#1c08ff,#2405ff,#2c03ff,#3401ff,#3d00ff)"></i><i style="top:316px;left:176px;width:62px;height:2px;background:linear-gradient(90deg,#0010ff,#040eff,#0b0cff,#1309ff,#1b07ff,#2205ff,#2a03ff,#3201ff,#3a00ff)"></i><i style="top:318px;left:176px;width:60px;height:2px;background:linear-gradient(90deg,#000fff,#030dff,#0b0bff,#1209ff,#1907ff,#2105ff,#2803ff,#3001ff,#3700ff)"></i><i style="top:320px;left:177px;width:57px;height:2px;background:linear-gradient(90deg,#000eff,#050cff,#0c0aff,#1408ff,#1c05ff,#2403ff,#2c01ff,#3400ff)"></i><i style="top:322px;left:177px;width:55px;height:2px;background:linear-gradient(90deg,#000eff,#040bff,#0b09ff,#1307ff,#1b05ff,#2203ff,#2a01ff,#3200ff)"></i><i style="top:324px;left:177px;width:53px;height:2px;background:linear-gradient(90deg,#000dff,#030bff,#0b09ff,#1207ff,#1905ff,#2003ff,#2801ff,#2f00ff)"></i><i style="top:326px;left:178px;width:50px;height:2px;background:linear-gradient(90deg,#000cff,#050aff,#0d08ff,#1405ff,#1c03ff,#2401ff,#2d00ff)"></i><i style="top:328px;left:178px;width:48px;height:2px;background:linear-gradient(90deg,#000bff,#0409ff,#0c07ff,#1305ff,#1b03ff,#2201ff,#2a00ff)"></i><i style="top:330px;left:178px;width:46px;height:2px;background:linear-gradient(90deg,#000bff,#0309ff,#0b07ff,#1205ff,#1903ff,#2001ff,#2700ff)"></i><i style="top:332px;left:179px;width:43px;height:2px;background:linear-gradient(90deg,#000aff,#0508ff,#0d05ff,#1503ff,#1d01ff,#2500ff)"></i><i style="top:334px;left:179px;width:41px;height:2px;background:linear-gradient(90deg,#0009ff,#0407ff,#0c05ff,#1303ff,#1b01ff,#2300ff)"></i><i style="top:336px;left:179px;width:39px;height:2px;background:linear-gradient(90deg,#0009ff,#0407ff,#0b05ff,#1203ff,#1901ff,#2000ff)"></i><i style="top:338px;left:179px;width:37px;height:2px;background:linear-gradient(90deg,#0008ff,#0306ff,#0a04ff,#1003ff,#1701ff,#1e00ff)"></i><i style="top:340px;left:180px;width:34px;height:2px;background:linear-gradient(90deg,#0007ff,#0405ff,#0c03ff,#1401ff,#1c00ff)"></i><i style="top:342px;left:180px;width:32px;height:2px;background:linear-gradient(90deg,#0007ff,#0405ff,#0b03ff,#1201ff,#1900ff)"></i><i style="top:344px;left:180px;width:30px;height:2px;background:linear-gradient(90deg,#0006ff,#0304ff,#0a03ff,#1001ff,#1700ff)"></i><i style="top:346px;left:181px;width:27px;height:2px;background:linear-gradient(90deg,#0006ff,#0503ff,#0d01ff,#1500ff)"></i><i style="top:348px;left:181px;width:26px;height:2px;background:linear-gradient(90deg,#0005ff,#0403ff,#0c01ff,#1300ff)"></i><i style="top:350px;left:181px;width:24px;height:2px;background:linear-gradient(90deg,#0005ff,#0303ff,#0a01ff,#1100ff)"></i><i style="top:352px;left:182px;width:21px;height:2px;background:linear-gradient(90deg,#0004ff,#0302ff,#0900ff,#0f00ff)"></i><i style="top:354px;left:182px;width:19px;height:2px;background:linear-gradient(90deg,#0003ff,#0501ff,#0d00ff)"></i><i style="top:356px;left:182px;width:17px;height:2px;background:linear-gradient(90deg,#0003ff,#0401ff,#0b00ff)"></i><i style="top:358px;left:183px;width:14px;height:2px;background:linear-gradient(90deg,#0002ff,#0300ff,#0900ff)"></i><i style="top:360px;left:183px;width:12px;height:2px;background:linear-gradient(90deg,#0002ff,#0200ff,#0700ff)"></i><i style="top:362px;left:183px;width:10px;height:2px;background:linear-gradient(90deg,#0001ff,#0500ff)"></i><i style="top:364px;left:184px;width:7px;height:1px;background:linear-gradient(90deg,#0001ff,#0300ff)"></i></div></div></div><span class="t" style="left:1279.7px;top:105.0px;font-size:14px;color:#dcdcdc;transform:scaleX(1.018);">CIE 1976 u'v'</span><span class="t" style="left:1005.8px;top:609.7px;font-size:13.5px;color:#dcdcdc;transform:scaleX(0.879);">0</span><span class="t" style="left:1015.4px;top:624.6px;font-size:13.5px;color:#dcdcdc;transform:scaleX(0.919);">0</span><span class="t" style="left:984.6px;top:568.7px;font-size:13.5px;color:#dcdcdc;transform:scaleX(1.058);">0,05</span><span class="t" style="left:1058.1px;top:624.6px;font-size:13.5px;color:#dcdcdc;transform:scaleX(1.069);">0,05</span><span class="t" style="left:995.2px;top:527.7px;font-size:13.5px;color:#dcdcdc;transform:scaleX(0.916);">0,1</span><span class="t" style="left:1116.7px;top:624.6px;font-size:13.5px;color:#dcdcdc;transform:scaleX(0.932);">0,1</span><span class="t" style="left:984.6px;top:486.7px;font-size:13.5px;color:#dcdcdc;transform:scaleX(1.058);">0,15</span><span class="t" style="left:1164.7px;top:624.6px;font-size:13.5px;color:#dcdcdc;transform:scaleX(1.069);">0,15</span><span class="t" style="left:995.2px;top:445.7px;font-size:13.5px;color:#dcdcdc;transform:scaleX(0.916);">0,2</span><span class="t" style="left:1223.3px;top:624.6px;font-size:13.5px;color:#dcdcdc;transform:scaleX(0.932);">0,2</span><span class="t" style="left:984.6px;top:404.7px;font-size:13.5px;color:#dcdcdc;transform:scaleX(1.058);">0,25</span><span class="t" style="left:1271.3px;top:624.6px;font-size:13.5px;color:#dcdcdc;transform:scaleX(1.069);">0,25</span><span class="t" style="left:995.2px;top:363.7px;font-size:13.5px;color:#dcdcdc;transform:scaleX(0.916);">0,3</span><span class="t" style="left:1329.9px;top:624.6px;font-size:13.5px;color:#dcdcdc;transform:scaleX(0.932);">0,3</span><span class="t" style="left:984.6px;top:322.7px;font-size:13.5px;color:#dcdcdc;transform:scaleX(1.058);">0,35</span><span class="t" style="left:1377.9px;top:624.6px;font-size:13.5px;color:#dcdcdc;transform:scaleX(1.069);">0,35</span><span class="t" style="left:995.2px;top:281.7px;font-size:13.5px;color:#dcdcdc;transform:scaleX(0.916);">0,4</span><span class="t" style="left:1436.5px;top:624.6px;font-size:13.5px;color:#dcdcdc;transform:scaleX(0.932);">0,4</span><span class="t" style="left:984.6px;top:240.7px;font-size:13.5px;color:#dcdcdc;transform:scaleX(1.058);">0,45</span><span class="t" style="left:1484.5px;top:624.6px;font-size:13.5px;color:#dcdcdc;transform:scaleX(1.069);">0,45</span><span class="t" style="left:995.2px;top:199.7px;font-size:13.5px;color:#dcdcdc;transform:scaleX(0.916);">0,5</span><span class="t" style="left:1543.0px;top:624.6px;font-size:13.5px;color:#dcdcdc;transform:scaleX(0.932);">0,5</span><span class="t" style="left:984.6px;top:158.7px;font-size:13.5px;color:#dcdcdc;transform:scaleX(1.058);">0,55</span><span class="t" style="left:1591.0px;top:624.6px;font-size:13.5px;color:#dcdcdc;transform:scaleX(1.069);">0,55</span><svg width="1669" height="1009" style="left:0;top:0" viewBox="0 0 1669 1009"><path d="M1013.2 615.4h5.5M1019.1 614.5v6.6M1013.2 574.4h5.5M1072.4 614.5v6.6M1013.2 533.4h5.5M1125.7 614.5v6.6M1013.2 492.4h5.5M1179.0 614.5v6.6M1013.2 451.4h5.5M1232.3 614.5v6.6M1013.2 410.4h5.5M1285.5 614.5v6.6M1013.2 369.4h5.5M1338.8 614.5v6.6M1013.2 328.4h5.5M1392.1 614.5v6.6M1013.2 287.4h5.5M1445.4 614.5v6.6M1013.2 246.4h5.5M1498.7 614.5v6.6M1013.2 205.4h5.5M1552.0 614.5v6.6M1013.2 164.4h5.5M1605.3 614.5v6.6" stroke="#c8c8c8" stroke-width="1.3" fill="none"/><rect x="1019.1" y="122.7" width="639.7" height="491.8" fill="none" stroke="#acacac" stroke-width="1.2"/><g fill="rgba(255,255,255,.05)" stroke="#f6f6f6" stroke-width="1.35"><rect x="1144.8" y="145.8" width="13.5" height="13.5"/><rect x="1168.8" y="169.6" width="13.5" height="13.5"/><rect x="1208.8" y="161.3" width="13.5" height="13.5"/><rect x="1255.5" y="157.3" width="13.5" height="13.5"/><rect x="1287.8" y="164.6" width="13.5" height="13.5"/><rect x="1330.8" y="168.6" width="13.5" height="13.5"/><rect x="1491.8" y="178.2" width="13.5" height="13.5"/><rect x="1205.5" y="183.4" width="13.5" height="13.5"/><rect x="1270.7" y="197.6" width="13.5" height="13.5"/><rect x="1259.8" y="203.6" width="13.5" height="13.5"/><rect x="1410.8" y="198.8" width="13.5" height="13.5"/><rect x="1349.8" y="210.6" width="13.5" height="13.5"/><rect x="1175.8" y="214.6" width="13.5" height="13.5"/><rect x="1159.7" y="233.6" width="13.5" height="13.5"/><rect x="1316.8" y="256.6" width="13.5" height="13.5"/><rect x="1164.8" y="265.4" width="13.5" height="13.5"/><rect x="1198.8" y="262.8" width="13.5" height="13.5"/><rect x="1219.5" y="267.4" width="13.5" height="13.5"/><rect x="1254.8" y="285.6" width="13.5" height="13.5"/><rect x="1201.8" y="315.4" width="13.5" height="13.5"/><rect x="1336.8" y="335.6" width="13.5" height="13.5"/><rect x="1201.8" y="365.6" width="13.5" height="13.5"/><rect x="1198.8" y="477.6" width="13.5" height="13.5"/><rect x="1228.8" y="153.4" width="13.5" height="13.5"/></g><rect x="1222.2" y="223" width="12.6" height="12.6" fill="rgba(255,255,255,.5)" stroke="#000" stroke-width="2.2"/><g stroke="#111" stroke-width="1.1"><circle cx="1152.5" cy="152.6" r="3.9" fill="#00ff00"/><circle cx="1174.6" cy="176.8" r="3.9" fill="#46964b"/><circle cx="1211.0" cy="168.4" r="3.9" fill="#a0be3c"/><circle cx="1255.8" cy="164.3" r="3.9" fill="#ebc81e"/><circle cx="1286.0" cy="169.8" r="3.9" fill="#e6a02d"/><circle cx="1329.4" cy="175.6" r="3.9" fill="#dc7828"/><circle cx="1498.1" cy="183.2" r="3.9" fill="#ff0000"/><circle cx="1208.6" cy="190.4" r="3.9" fill="#5a6e41"/><circle cx="1273.3" cy="205.3" r="3.9" fill="#735041"/><circle cx="1259.9" cy="211.8" r="3.9" fill="#c39682"/><circle cx="1416.4" cy="207.0" r="3.9" fill="#af323c"/><circle cx="1349.8" cy="220.4" r="3.9" fill="#c35564"/><circle cx="1180.8" cy="224.0" r="3.9" fill="#64beaa"/><circle cx="1167.6" cy="243.4" r="3.9" fill="#00ffff"/><circle cx="1316.0" cy="270.7" r="3.9" fill="#be5596"/><circle cx="1170.0" cy="275.7" r="3.9" fill="#0a87a5"/><circle cx="1203.1" cy="273.4" r="3.9" fill="#5f789b"/><circle cx="1222.0" cy="278.6" r="3.9" fill="#8282af"/><circle cx="1257.5" cy="300.4" r="3.9" fill="#5f3c6e"/><circle cx="1205.5" cy="329.7" r="3.9" fill="#4b5aa5"/><circle cx="1333.4" cy="351.0" r="3.9" fill="#ff00ff"/><circle cx="1205.5" cy="382.3" r="3.9" fill="#4b5096"/><circle cx="1208.7" cy="480.6" r="3.9" fill="#0a0aff"/><circle cx="1229.9" cy="160.5" r="3.9" fill="#ffff00"/><circle cx="1224.7" cy="232.1" r="3.9" fill="#aaa"/><circle cx="1227.3" cy="263.8" r="3.9" fill="#000"/></g></svg><div style="left:1454px;top:442px;width:198px;height:130px;overflow:hidden;outline:1px solid rgba(150,150,140,.9)"><div style="left:0;top:0;width:198px;height:130px;background:linear-gradient(128deg,#5c9a00 0%,#7d9800 30%,#969600 55%,#9a8200 75%,#966400 100%)"></div><div style="left:0;top:0;width:198px;height:130px;background:linear-gradient(128deg,#a8ff00 0%,#c8ff00 22%,#ffff10 52%,#ffd800 72%,#ffb000 100%);clip-path:polygon(0 14.4px,198px 118px,198px 130px,0 130px)"></div></div><svg width="200" height="132" style="left:1453px;top:441px" viewBox="1453 441 200 132"><circle cx="1517" cy="501.8" r="4.2" fill="#fff01e" stroke="#111" stroke-width="1.1"/><rect x="1545.6" y="499.5" width="13.5" height="13.5" fill="none" stroke="#f4f4f4" stroke-width="1.4"/></svg><div style="left:1403px;top:582.3px;width:253px;height:27.3px;background:#2f2f2f"></div><span class="t" style="left:1404.3px;top:586.8px;font-size:20.6px;color:#f0f0f0;transform:scaleX(0.955);">RGB Triplet: 255, 255, 0</span>
<!-- p_table -->
<div style="left:321px;top:663.6px;width:1345.8px;height:227px;background:#080808"></div><div style="left:323px;top:665px;width:1342.4px;height:225.6px;overflow:hidden;background:#3e3e3e"><div style="left:0;top:0;width:1345px;height:25px;background:linear-gradient(#303030 0,#2c2c2c 51%,#131313 55%,#151515 100%)"></div><div style="left:0;top:24.6px;width:1345px;height:23.6px;background:#404040"></div><span class="t" style="left:14.6px;top:30.9px;font-size:14px;font-weight:700;color:#f4f4f4;transform:scaleX(1.276);">x: CIE31</span><span class="t" style="left:165.6px;top:30.4px;font-size:14.6px;color:#e8e8e8;transform:scaleX(1.246);">0,30</span><span class="t" style="left:232.9px;top:30.4px;font-size:14.6px;color:#e8e8e8;transform:scaleX(1.246);">0,30</span><span class="t" style="left:303.5px;top:30.4px;font-size:14.6px;color:#e8e8e8;transform:scaleX(1.246);">0,30</span><span class="t" style="left:374.1px;top:30.4px;font-size:14.6px;color:#e8e8e8;transform:scaleX(1.246);">0,30</span><span class="t" style="left:445.1px;top:30.4px;font-size:14.6px;color:#e8e8e8;transform:scaleX(1.246);">0,30</span><span class="t" style="left:516.1px;top:30.4px;font-size:14.6px;color:#e8e8e8;transform:scaleX(1.246);">0,28</span><span class="t" style="left:572.3px;top:30.4px;font-size:14.6px;color:#e8e8e8;transform:scaleX(1.246);">0,39</span><span class="t" style="left:656.9px;top:30.4px;font-size:14.6px;color:#e8e8e8;transform:scaleX(1.246);">0,37</span><span class="t" style="left:741.9px;top:30.4px;font-size:14.6px;color:#e8e8e8;transform:scaleX(1.246);">0,24</span><span class="t" style="left:818.6px;top:30.4px;font-size:14.6px;color:#e8e8e8;transform:scaleX(1.246);">0,33</span><span class="t" style="left:885.4px;top:30.4px;font-size:14.6px;color:#e8e8e8;transform:scaleX(1.246);">0,26</span><span class="t" style="left:989.0px;top:30.4px;font-size:14.6px;color:#e8e8e8;transform:scaleX(1.246);">0,26</span><span class="t" style="left:1099.7px;top:30.4px;font-size:14.6px;color:#e8e8e8;transform:scaleX(1.246);">0,51</span><span class="t" style="left:1167.3px;top:30.4px;font-size:14.6px;color:#e8e8e8;transform:scaleX(1.246);">0,21</span><span class="t" style="left:1281.7px;top:30.4px;font-size:14.6px;color:#e8e8e8;transform:scaleX(1.246);">0,45</span><div style="left:0;top:47.9px;width:1345px;height:23.6px;background:#7e7e7e"></div><span class="t" style="left:14.6px;top:54.1px;font-size:14px;font-weight:700;color:#f4f4f4;transform:scaleX(1.276);">y: CIE31</span><span class="t" style="left:165.6px;top:53.6px;font-size:14.6px;color:#e8e8e8;transform:scaleX(1.246);">0,32</span><span class="t" style="left:232.9px;top:53.6px;font-size:14.6px;color:#e8e8e8;transform:scaleX(1.246);">0,32</span><span class="t" style="left:303.5px;top:53.6px;font-size:14.6px;color:#e8e8e8;transform:scaleX(1.246);">0,32</span><span class="t" style="left:374.1px;top:53.6px;font-size:14.6px;color:#e8e8e8;transform:scaleX(1.246);">0,32</span><span class="t" style="left:445.1px;top:53.6px;font-size:14.6px;color:#e8e8e8;transform:scaleX(1.246);">0,32</span><span class="t" style="left:516.1px;top:53.6px;font-size:14.6px;color:#e8e8e8;transform:scaleX(1.246);">0,27</span><span class="t" style="left:572.3px;top:53.6px;font-size:14.6px;color:#e8e8e8;transform:scaleX(1.246);">0,36</span><span class="t" style="left:656.9px;top:53.6px;font-size:14.6px;color:#e8e8e8;transform:scaleX(1.246);">0,35</span><span class="t" style="left:741.9px;top:53.6px;font-size:14.6px;color:#e8e8e8;transform:scaleX(1.246);">0,26</span><span class="t" style="left:818.6px;top:53.6px;font-size:14.6px;color:#e8e8e8;transform:scaleX(1.246);">0,43</span><span class="t" style="left:885.4px;top:53.6px;font-size:14.6px;color:#e8e8e8;transform:scaleX(1.246);">0,25</span><span class="t" style="left:989.0px;top:53.6px;font-size:14.6px;color:#e8e8e8;transform:scaleX(1.246);">0,36</span><span class="t" style="left:1099.7px;top:53.6px;font-size:14.6px;color:#e8e8e8;transform:scaleX(1.246);">0,41</span><span class="t" style="left:1167.3px;top:53.6px;font-size:14.6px;color:#e8e8e8;transform:scaleX(1.246);">0,18</span><span class="t" style="left:1281.7px;top:53.6px;font-size:14.6px;color:#e8e8e8;transform:scaleX(1.246);">0,31</span><div style="left:0;top:71.3px;width:1345px;height:23.6px;background:#404040"></div><span class="t" style="left:14.6px;top:77.2px;font-size:14px;font-weight:700;color:#f4f4f4;transform:scaleX(1.178);">Y</span><span class="t" style="left:165.6px;top:76.7px;font-size:14.6px;color:#e8e8e8;transform:scaleX(1.267);">424,34</span><span class="t" style="left:232.9px;top:76.7px;font-size:14.6px;color:#e8e8e8;transform:scaleX(1.267);">335,96</span><span class="t" style="left:303.5px;top:76.7px;font-size:14.6px;color:#e8e8e8;transform:scaleX(1.267);">271,03</span><span class="t" style="left:374.1px;top:76.7px;font-size:14.6px;color:#e8e8e8;transform:scaleX(1.267);">209,25</span><span class="t" style="left:445.1px;top:76.7px;font-size:14.6px;color:#e8e8e8;transform:scaleX(1.267);">145,18</span><span class="t" style="left:516.1px;top:76.7px;font-size:14.6px;color:#e8e8e8;transform:scaleX(1.246);">0,57</span><span class="t" style="left:572.3px;top:76.7px;font-size:14.6px;color:#e8e8e8;transform:scaleX(1.259);">39,79</span><span class="t" style="left:656.9px;top:76.7px;font-size:14.6px;color:#e8e8e8;transform:scaleX(1.267);">147,02</span><span class="t" style="left:741.9px;top:76.7px;font-size:14.6px;color:#e8e8e8;transform:scaleX(1.259);">78,42</span><span class="t" style="left:818.6px;top:76.7px;font-size:14.6px;color:#e8e8e8;transform:scaleX(1.259);">52,89</span><span class="t" style="left:885.4px;top:76.7px;font-size:14.6px;color:#e8e8e8;transform:scaleX(1.259);">98,59</span><span class="t" style="left:989.0px;top:76.7px;font-size:14.6px;color:#e8e8e8;transform:scaleX(1.267);">178,75</span><span class="t" style="left:1099.7px;top:76.7px;font-size:14.6px;color:#e8e8e8;transform:scaleX(1.299);">115,96</span><span class="t" style="left:1167.3px;top:76.7px;font-size:14.6px;color:#e8e8e8;transform:scaleX(1.259);">48,67</span><span class="t" style="left:1281.7px;top:76.7px;font-size:14.6px;color:#e8e8e8;transform:scaleX(1.259);">75,45</span><div style="left:0;top:94.6px;width:1345px;height:23.6px;background:#7e7e7e"></div><span class="t" style="left:14.6px;top:100.4px;font-size:14px;font-weight:700;color:#f4f4f4;transform:scaleX(1.340);">Target x:CIE31</span><span class="t" style="left:165.6px;top:99.9px;font-size:14.6px;color:#e8e8e8;transform:scaleX(1.246);">0,31</span><span class="t" style="left:232.9px;top:99.9px;font-size:14.6px;color:#e8e8e8;transform:scaleX(1.246);">0,31</span><span class="t" style="left:303.5px;top:99.9px;font-size:14.6px;color:#e8e8e8;transform:scaleX(1.246);">0,31</span><span class="t" style="left:374.1px;top:99.9px;font-size:14.6px;color:#e8e8e8;transform:scaleX(1.246);">0,31</span><span class="t" style="left:445.1px;top:99.9px;font-size:14.6px;color:#e8e8e8;transform:scaleX(1.246);">0,31</span><span class="t" style="left:516.1px;top:99.9px;font-size:14.6px;color:#e8e8e8;transform:scaleX(1.246);">0,31</span><span class="t" style="left:572.3px;top:99.9px;font-size:14.6px;color:#e8e8e8;transform:scaleX(1.246);">0,40</span><span class="t" style="left:656.9px;top:99.9px;font-size:14.6px;color:#e8e8e8;transform:scaleX(1.246);">0,38</span><span class="t" style="left:741.9px;top:99.9px;font-size:14.6px;color:#e8e8e8;transform:scaleX(1.246);">0,25</span><span class="t" style="left:818.6px;top:99.9px;font-size:14.6px;color:#e8e8e8;transform:scaleX(1.246);">0,34</span><span class="t" style="left:885.4px;top:99.9px;font-size:14.6px;color:#e8e8e8;transform:scaleX(1.246);">0,27</span><span class="t" style="left:989.0px;top:99.9px;font-size:14.6px;color:#e8e8e8;transform:scaleX(1.246);">0,26</span><span class="t" style="left:1099.7px;top:99.9px;font-size:14.6px;color:#e8e8e8;transform:scaleX(1.246);">0,51</span><span class="t" style="left:1167.3px;top:99.9px;font-size:14.6px;color:#e8e8e8;transform:scaleX(1.246);">0,22</span><span class="t" style="left:1281.7px;top:99.9px;font-size:14.6px;color:#e8e8e8;transform:scaleX(1.246);">0,46</span><div style="left:0;top:117.9px;width:1345px;height:23.6px;background:#404040"></div><span class="t" style="left:14.6px;top:123.5px;font-size:14px;font-weight:700;color:#f4f4f4;transform:scaleX(1.340);">Target y:CIE31</span><span class="t" style="left:165.6px;top:123.0px;font-size:14.6px;color:#e8e8e8;transform:scaleX(1.246);">0,33</span><span class="t" style="left:232.9px;top:123.0px;font-size:14.6px;color:#e8e8e8;transform:scaleX(1.246);">0,33</span><span class="t" style="left:303.5px;top:123.0px;font-size:14.6px;color:#e8e8e8;transform:scaleX(1.246);">0,33</span><span class="t" style="left:374.1px;top:123.0px;font-size:14.6px;color:#e8e8e8;transform:scaleX(1.246);">0,33</span><span class="t" style="left:445.1px;top:123.0px;font-size:14.6px;color:#e8e8e8;transform:scaleX(1.246);">0,33</span><span class="t" style="left:516.1px;top:123.0px;font-size:14.6px;color:#e8e8e8;transform:scaleX(1.246);">0,33</span><span class="t" style="left:572.3px;top:123.0px;font-size:14.6px;color:#e8e8e8;transform:scaleX(1.246);">0,36</span><span class="t" style="left:656.9px;top:123.0px;font-size:14.6px;color:#e8e8e8;transform:scaleX(1.246);">0,36</span><span class="t" style="left:741.9px;top:123.0px;font-size:14.6px;color:#e8e8e8;transform:scaleX(1.246);">0,27</span><span class="t" style="left:818.6px;top:123.0px;font-size:14.6px;color:#e8e8e8;transform:scaleX(1.246);">0,43</span><span class="t" style="left:885.4px;top:123.0px;font-size:14.6px;color:#e8e8e8;transform:scaleX(1.246);">0,25</span><span class="t" style="left:989.0px;top:123.0px;font-size:14.6px;color:#e8e8e8;transform:scaleX(1.246);">0,36</span><span class="t" style="left:1099.7px;top:123.0px;font-size:14.6px;color:#e8e8e8;transform:scaleX(1.246);">0,41</span><span class="t" style="left:1167.3px;top:123.0px;font-size:14.6px;color:#e8e8e8;transform:scaleX(1.246);">0,19</span><span class="t" style="left:1281.7px;top:123.0px;font-size:14.6px;color:#e8e8e8;transform:scaleX(1.246);">0,31</span><div style="left:0;top:141.2px;width:1345px;height:23.6px;background:#7e7e7e"></div><span class="t" style="left:14.6px;top:146.6px;font-size:14px;font-weight:700;color:#f4f4f4;transform:scaleX(1.371);">Target Y</span><span class="t" style="left:165.6px;top:146.1px;font-size:14.6px;color:#e8e8e8;transform:scaleX(1.267);">424,34</span><span class="t" style="left:232.9px;top:146.1px;font-size:14.6px;color:#e8e8e8;transform:scaleX(1.267);">335,78</span><span class="t" style="left:303.5px;top:146.1px;font-size:14.6px;color:#e8e8e8;transform:scaleX(1.267);">270,56</span><span class="t" style="left:374.1px;top:146.1px;font-size:14.6px;color:#e8e8e8;transform:scaleX(1.267);">208,36</span><span class="t" style="left:445.1px;top:146.1px;font-size:14.6px;color:#e8e8e8;transform:scaleX(1.267);">145,09</span><span class="t" style="left:516.1px;top:146.1px;font-size:14.6px;color:#e8e8e8;transform:scaleX(1.246);">0,00</span><span class="t" style="left:572.3px;top:146.1px;font-size:14.6px;color:#e8e8e8;transform:scaleX(1.259);">42,74</span><span class="t" style="left:656.9px;top:146.1px;font-size:14.6px;color:#e8e8e8;transform:scaleX(1.267);">148,07</span><span class="t" style="left:741.9px;top:146.1px;font-size:14.6px;color:#e8e8e8;transform:scaleX(1.259);">79,34</span><span class="t" style="left:818.6px;top:146.1px;font-size:14.6px;color:#e8e8e8;transform:scaleX(1.259);">55,30</span><span class="t" style="left:885.4px;top:146.1px;font-size:14.6px;color:#e8e8e8;transform:scaleX(1.259);">98,95</span><span class="t" style="left:989.0px;top:146.1px;font-size:14.6px;color:#e8e8e8;transform:scaleX(1.267);">177,68</span><span class="t" style="left:1099.7px;top:146.1px;font-size:14.6px;color:#e8e8e8;transform:scaleX(1.267);">120,29</span><span class="t" style="left:1167.3px;top:146.1px;font-size:14.6px;color:#e8e8e8;transform:scaleX(1.259);">49,88</span><span class="t" style="left:1281.7px;top:146.1px;font-size:14.6px;color:#e8e8e8;transform:scaleX(1.259);">79,25</span><div style="left:0;top:164.6px;width:1345px;height:23.6px;background:#404040"></div><span class="t" style="left:14.6px;top:169.8px;font-size:14px;font-weight:700;color:#f4f4f4;transform:scaleX(1.365);">ΔE 2000</span><span class="t" style="left:165.6px;top:169.3px;font-size:14.6px;color:#e8e8e8;transform:scaleX(1.246);">4,12</span><span class="t" style="left:232.9px;top:169.3px;font-size:14.6px;color:#e8e8e8;transform:scaleX(1.246);">3,95</span><span class="t" style="left:303.5px;top:169.3px;font-size:14.6px;color:#e8e8e8;transform:scaleX(1.246);">3,70</span><span class="t" style="left:374.1px;top:169.3px;font-size:14.6px;color:#e8e8e8;transform:scaleX(1.246);">3,41</span><span class="t" style="left:445.1px;top:169.3px;font-size:14.6px;color:#e8e8e8;transform:scaleX(1.246);">3,06</span><span class="t" style="left:516.1px;top:169.3px;font-size:14.6px;color:#e8e8e8;transform:scaleX(1.246);">1,48</span><span class="t" style="left:572.3px;top:169.3px;font-size:14.6px;color:#e8e8e8;transform:scaleX(1.246);">1,59</span><span class="t" style="left:656.9px;top:169.3px;font-size:14.6px;color:#e8e8e8;transform:scaleX(1.246);">2,26</span><span class="t" style="left:741.9px;top:169.3px;font-size:14.6px;color:#e8e8e8;transform:scaleX(1.246);">1,18</span><span class="t" style="left:818.6px;top:169.3px;font-size:14.6px;color:#e8e8e8;transform:scaleX(1.246);">1,42</span><span class="t" style="left:885.4px;top:169.3px;font-size:14.6px;color:#e8e8e8;transform:scaleX(1.246);">1,91</span><span class="t" style="left:989.0px;top:169.3px;font-size:14.6px;color:#e8e8e8;transform:scaleX(1.246);">1,37</span><span class="t" style="left:1099.7px;top:169.3px;font-size:14.6px;color:#e8e8e8;transform:scaleX(1.246);">2,03</span><span class="t" style="left:1167.3px;top:169.3px;font-size:14.6px;color:#e8e8e8;transform:scaleX(1.246);">1,07</span><span class="t" style="left:1281.7px;top:169.3px;font-size:14.6px;color:#e8e8e8;transform:scaleX(1.246);">1,73</span><div style="left:0;top:187.9px;width:1345px;height:23.6px;background:#7e7e7e"></div><span class="t" style="left:14.6px;top:192.9px;font-size:14px;font-weight:700;color:#f4f4f4;transform:scaleX(1.320);">ΔE ITP</span><span class="t" style="left:165.6px;top:192.4px;font-size:14.6px;color:#e8e8e8;transform:scaleX(1.246);">4,96</span><span class="t" style="left:232.9px;top:192.4px;font-size:14.6px;color:#e8e8e8;transform:scaleX(1.246);">5,03</span><span class="t" style="left:303.5px;top:192.4px;font-size:14.6px;color:#e8e8e8;transform:scaleX(1.246);">5,04</span><span class="t" style="left:374.1px;top:192.4px;font-size:14.6px;color:#e8e8e8;transform:scaleX(1.246);">4,94</span><span class="t" style="left:445.1px;top:192.4px;font-size:14.6px;color:#e8e8e8;transform:scaleX(1.246);">4,89</span><span class="t" style="left:516.1px;top:192.4px;font-size:14.6px;color:#e8e8e8;transform:scaleX(1.259);">90,23</span><span class="t" style="left:572.3px;top:192.4px;font-size:14.6px;color:#e8e8e8;transform:scaleX(1.246);">6,06</span><span class="t" style="left:656.9px;top:192.4px;font-size:14.6px;color:#e8e8e8;transform:scaleX(1.246);">6,45</span><span class="t" style="left:741.9px;top:192.4px;font-size:14.6px;color:#e8e8e8;transform:scaleX(1.246);">4,50</span><span class="t" style="left:818.6px;top:192.4px;font-size:14.6px;color:#e8e8e8;transform:scaleX(1.246);">4,56</span><span class="t" style="left:885.4px;top:192.4px;font-size:14.6px;color:#e8e8e8;transform:scaleX(1.246);">4,93</span><span class="t" style="left:989.0px;top:192.4px;font-size:14.6px;color:#e8e8e8;transform:scaleX(1.246);">2,85</span><span class="t" style="left:1099.7px;top:192.4px;font-size:14.6px;color:#e8e8e8;transform:scaleX(1.246);">6,59</span><span class="t" style="left:1167.3px;top:192.4px;font-size:14.6px;color:#e8e8e8;transform:scaleX(1.246);">5,51</span><span class="t" style="left:1281.7px;top:192.4px;font-size:14.6px;color:#e8e8e8;transform:scaleX(1.246);">7,00</span><span class="t" style="left:170.5px;top:7.7px;font-size:12px;color:#ececec;transform:scaleX(1.539);">White</span><span class="t" style="left:232.9px;top:7.7px;font-size:12px;color:#ececec;transform:scaleX(1.422);">Gray 80</span><span class="t" style="left:303.5px;top:7.7px;font-size:12px;color:#ececec;transform:scaleX(1.403);">Gray 65</span><span class="t" style="left:374.1px;top:7.7px;font-size:12px;color:#ececec;transform:scaleX(1.413);">Gray 50</span><span class="t" style="left:445.1px;top:7.7px;font-size:12px;color:#ececec;transform:scaleX(1.403);">Gray 35</span><span class="t" style="left:518.6px;top:7.7px;font-size:12px;color:#ececec;transform:scaleX(1.397);">Black</span><span class="t" style="left:572.3px;top:7.7px;font-size:12px;color:#ececec;transform:scaleX(1.403);">Dark Skin</span><span class="t" style="left:656.9px;top:7.7px;font-size:12px;color:#ececec;transform:scaleX(1.404);">Light Skin</span><span class="t" style="left:741.9px;top:7.7px;font-size:12px;color:#ececec;transform:scaleX(1.385);">Blue Sky</span><span class="t" style="left:818.6px;top:7.7px;font-size:12px;color:#ececec;transform:scaleX(1.415);">Foliage</span><span class="t" style="left:885.4px;top:7.7px;font-size:12px;color:#ececec;transform:scaleX(1.468);">Blue Flower</span><span class="t" style="left:989.0px;top:7.7px;font-size:12px;color:#ececec;transform:scaleX(1.442);">Bluish Green</span><span class="t" style="left:1099.7px;top:7.7px;font-size:12px;color:#ececec;transform:scaleX(1.424);">Orange</span><span class="t" style="left:1167.3px;top:7.7px;font-size:12px;color:#ececec;transform:scaleX(1.461);">Purplish Blue</span><span class="t" style="left:1281.7px;top:7.7px;font-size:12px;color:#ececec;transform:scaleX(1.511);">Moderate Red</span><div style="left:0;top:211.0px;width:1345px;height:14.6px;background:#585858"></div><div style="left:0;top:211.0px;width:18px;height:12.4px;margin-top:1.9px;background:#8a8a8a;border-radius:2.5px"></div><svg width="7" height="9" style="left:6px;top:214.0px" viewBox="0 0 7 9"><path d="M6.5 0v9L0 4.5z" fill="#3a3a3a"/></svg><div style="left:20.7px;top:213.0px;width:641px;height:11.2px;background:#424242;border-radius:5.6px"></div><div style="left:1325.5px;top:211.0px;width:17px;height:12.4px;margin-top:1.9px;background:#8a8a8a;border-radius:2.5px"></div><svg width="7" height="9" style="left:1330.5px;top:214.0px" viewBox="0 0 7 9"><path d="M.5 0v9L7 4.5z" fill="#3a3a3a"/></svg></div>
<!-- p_bottom -->
<div class="pb" style="left:-32.3px;top:932.6px;width:62.3px;height:60.6px;"></div><div class="sw" style="left:-26.0px;top:939px;width:50px;height:15px;background:#8a84cc"></div><span class="t" style="left:-21.3px;top:962.7px;font-size:12.9px;font-weight:700;color:#262626;transform:scaleX(0.965);">Blue</span><span class="t" style="left:-21.3px;top:977.7px;font-size:12.9px;font-weight:700;color:#262626;transform:scaleX(0.965);">Flower</span><div class="pb" style="left:32.7px;top:932.6px;width:62.3px;height:60.6px;"></div><div class="sw" style="left:39.0px;top:939px;width:50px;height:15px;background:#62c0a8"></div><span class="t" style="left:44.8px;top:962.7px;font-size:12.9px;font-weight:700;color:#262626;transform:scaleX(0.965);">Bluish</span><span class="t" style="left:44.8px;top:977.7px;font-size:12.9px;font-weight:700;color:#262626;transform:scaleX(0.965);">Green</span><div class="pb" style="left:97.7px;top:932.6px;width:62.3px;height:60.6px;"></div><div class="sw" style="left:104.0px;top:939px;width:50px;height:30px;background:#dc7828"></div><span class="t" style="left:107.0px;top:977.7px;font-size:12.9px;font-weight:700;color:#262626;transform:scaleX(0.965);">Orange</span><div class="pb" style="left:162.7px;top:932.6px;width:62.3px;height:60.6px;"></div><div class="sw" style="left:169.0px;top:939px;width:50px;height:15px;background:#485cac"></div><span class="t" style="left:168.9px;top:962.7px;font-size:12.9px;font-weight:700;color:#262626;transform:scaleX(0.965);">Purplish</span><span class="t" style="left:168.9px;top:977.7px;font-size:12.9px;font-weight:700;color:#262626;transform:scaleX(0.965);">Blue</span><div class="pb" style="left:227.7px;top:932.6px;width:62.3px;height:60.6px;"></div><div class="sw" style="left:234.0px;top:939px;width:50px;height:15px;background:#cc5464"></div><span class="t" style="left:228.7px;top:962.7px;font-size:12.9px;font-weight:700;color:#262626;transform:scaleX(1.050);">Moderate</span><span class="t" style="left:228.7px;top:977.7px;font-size:12.9px;font-weight:700;color:#262626;transform:scaleX(0.965);">Red</span><div class="pb" style="left:292.7px;top:932.6px;width:62.3px;height:60.6px;"></div><div class="sw" style="left:299.0px;top:939px;width:50px;height:30px;background:#5c3c70"></div><span class="t" style="left:304.4px;top:977.7px;font-size:12.9px;font-weight:700;color:#262626;transform:scaleX(0.965);">Purple</span><div class="pb" style="left:357.7px;top:932.6px;width:62.3px;height:60.6px;"></div><div class="sw" style="left:364.0px;top:939px;width:50px;height:15px;background:#a4c440"></div><span class="t" style="left:369.4px;top:962.7px;font-size:12.9px;font-weight:700;color:#262626;transform:scaleX(0.965);">Yellow</span><span class="t" style="left:369.4px;top:977.7px;font-size:12.9px;font-weight:700;color:#262626;transform:scaleX(0.965);">Green</span><div class="pb" style="left:422.7px;top:932.6px;width:62.3px;height:60.6px;"></div><div class="sw" style="left:429.0px;top:939px;width:50px;height:15px;background:#eca42c"></div><span class="t" style="left:432.0px;top:962.7px;font-size:12.9px;font-weight:700;color:#262626;transform:scaleX(0.965);">Orange</span><span class="t" style="left:432.0px;top:977.7px;font-size:12.9px;font-weight:700;color:#262626;transform:scaleX(0.965);">Yellow</span><div class="pb" style="left:487.7px;top:932.6px;width:62.3px;height:60.6px;"></div><div class="sw" style="left:494.0px;top:939px;width:50px;height:30px;background:#30409c"></div><span class="t" style="left:505.3px;top:977.7px;font-size:12.9px;font-weight:700;color:#262626;transform:scaleX(0.965);">Blue</span><div class="pb" style="left:552.7px;top:932.6px;width:62.3px;height:60.6px;"></div><div class="sw" style="left:559.0px;top:939px;width:50px;height:30px;background:#409c48"></div><span class="t" style="left:565.8px;top:977.7px;font-size:12.9px;font-weight:700;color:#262626;transform:scaleX(0.965);">Green</span><div class="pb" style="left:617.7px;top:932.6px;width:62.3px;height:60.6px;"></div><div class="sw" style="left:624.0px;top:939px;width:50px;height:30px;background:#b82c3c"></div><span class="t" style="left:637.0px;top:977.7px;font-size:12.9px;font-weight:700;color:#262626;transform:scaleX(0.965);">Red</span><div class="pb" style="left:682.7px;top:932.6px;width:62.3px;height:60.6px;"></div><div class="sw" style="left:689.0px;top:939px;width:50px;height:30px;background:#ecc820"></div><span class="t" style="left:694.4px;top:977.7px;font-size:12.9px;font-weight:700;color:#262626;transform:scaleX(0.965);">Yellow</span><div class="pb" style="left:747.7px;top:932.6px;width:62.3px;height:60.6px;"></div><div class="sw" style="left:754.0px;top:939px;width:50px;height:30px;background:#bc5498"></div><span class="t" style="left:753.3px;top:977.7px;font-size:12.9px;font-weight:700;color:#262626;transform:scaleX(0.975);">Magenta</span><div class="pb" style="left:812.7px;top:932.6px;width:62.3px;height:60.6px;"></div><div class="sw" style="left:819.0px;top:939px;width:50px;height:30px;background:#0088a4"></div><span class="t" style="left:828.6px;top:977.7px;font-size:12.9px;font-weight:700;color:#262626;transform:scaleX(0.965);">Cyan</span><div class="pb" style="left:877.7px;top:932.6px;width:62.3px;height:60.6px;"></div><div class="sw" style="left:884.0px;top:939px;width:50px;height:30px;background:#ff0000"></div><span class="t" style="left:879.1px;top:977.7px;font-size:12.9px;font-weight:700;color:#262626;transform:scaleX(0.975);">100% Red</span><div class="pb" style="left:942.7px;top:932.6px;width:62.3px;height:60.6px;"></div><div class="sw" style="left:949.0px;top:939px;width:50px;height:15px;background:#00ff00"></div><span class="t" style="left:955.8px;top:962.7px;font-size:12.9px;font-weight:700;color:#262626;transform:scaleX(0.965);">100%</span><span class="t" style="left:955.8px;top:977.7px;font-size:12.9px;font-weight:700;color:#262626;transform:scaleX(0.965);">Green</span><div class="pb" style="left:1007.7px;top:932.6px;width:62.3px;height:60.6px;"></div><div class="sw" style="left:1014.0px;top:939px;width:50px;height:15px;background:#0000ff"></div><span class="t" style="left:1022.9px;top:962.7px;font-size:12.9px;font-weight:700;color:#262626;transform:scaleX(0.965);">100%</span><span class="t" style="left:1022.9px;top:977.7px;font-size:12.9px;font-weight:700;color:#262626;transform:scaleX(0.965);">Blue</span><div class="pb" style="left:1072.7px;top:932.6px;width:62.3px;height:60.6px;"></div><div class="sw" style="left:1079.0px;top:939px;width:50px;height:15px;background:#00ffff"></div><span class="t" style="left:1087.9px;top:962.7px;font-size:12.9px;font-weight:700;color:#262626;transform:scaleX(0.965);">100%</span><span class="t" style="left:1087.9px;top:977.7px;font-size:12.9px;font-weight:700;color:#262626;transform:scaleX(0.965);">Cyan</span><div class="pb" style="left:1137.7px;top:932.6px;width:62.3px;height:60.6px;"></div><div class="sw" style="left:1144.0px;top:939px;width:50px;height:15px;background:#ff00ff"></div><span class="t" style="left:1143.3px;top:962.7px;font-size:12.9px;font-weight:700;color:#262626;transform:scaleX(0.965);">100%</span><span class="t" style="left:1143.3px;top:977.7px;font-size:12.9px;font-weight:700;color:#262626;transform:scaleX(0.975);">Magenta</span><div class="pb" style="left:1202.7px;top:932.6px;width:62.3px;height:60.6px;background:linear-gradient(#181818,#303030);box-shadow:none"></div><div class="sw" style="left:1209.0px;top:939px;width:50px;height:15px;background:#ffff00"></div><span class="t" style="left:1214.4px;top:962.7px;font-size:12.9px;font-weight:700;color:#fff;transform:scaleX(0.965);">100%</span><span class="t" style="left:1214.4px;top:977.7px;font-size:12.9px;font-weight:700;color:#fff;transform:scaleX(0.965);">Yellow</span><div style="left:1.5px;top:993.6px;width:1264px;height:15.6px;background:#5e5e5e"></div><div style="left:2px;top:994.5px;width:14px;height:14.5px;background:#9a9a9a;border-radius:2px"></div><svg width="6" height="9" style="left:6px;top:997.5px" viewBox="0 0 6 9"><path d="M5.5 0v9L0 4.5z" fill="#333"/></svg><div style="left:450.5px;top:995.5px;width:795px;height:12.3px;background:#484848;border-radius:6.2px"></div><div style="left:1251px;top:994.5px;width:14px;height:14.5px;background:#9a9a9a;border-radius:2px"></div><svg width="6" height="9" style="left:1255.5px;top:997.5px" viewBox="0 0 6 9"><path d="M.5 0v9L6 4.5z" fill="#333"/></svg><div class="cb" style="left:1266.4px;top:932.5px;width:59.6px;height:22.2px;border-radius:5px 5px 0 0"></div><div class="ci" style="left:1287.4px;top:934.6px;width:18.6px;height:18.6px;"></div><svg width="12" height="7" style="left:1290.7px;top:940.5px" viewBox="0 0 12 7"><path d="M0 6.5h12L6 0z" fill="#303030"/></svg><div style="left:1266.4px;top:955.8px;width:59.6px;height:53.2px;background:linear-gradient(#8e8e8e,#6e6e6e 45%,#5c5c5c)"></div><div style="left:1276.5px;top:963.2px;width:39px;height:38px;box-sizing:border-box;border:3px solid #262626;border-radius:7px;background:linear-gradient(#a8a8a8,#9a9a9a 49%,#7e7e7e 51%,#888 100%)"></div><div style="left:1287.8px;top:974px;width:17.2px;height:16.8px;background:linear-gradient(#1c1c1c,#000 50%)"></div><div class="cb" style="left:1327.4px;top:932px;width:57.3px;height:37.7px;border-radius:6px 0 0 0;"></div><div class="ci" style="left:1343.9px;top:938.8px;width:25px;height:25px;"></div><div class="cb" style="left:1386px;top:932px;width:55.2px;height:37.7px;"></div><div class="ci" style="left:1401.4px;top:938.8px;width:25px;height:25px;"></div><div class="cb" style="left:1442.4px;top:932px;width:55.0px;height:37.7px;"></div><div class="ci" style="left:1457.7px;top:938.8px;width:25px;height:25px;"></div><div class="cb" style="left:1499.2px;top:932px;width:55.1px;height:37.7px;"></div><div class="ci" style="left:1514.5px;top:938.8px;width:25px;height:25px;"></div><div style="left:1554.3px;top:932px;width:56.1px;height:37.7px;background:linear-gradient(#2a2a2a,#343434)"></div><div class="ci" style="left:1570.1px;top:938.8px;width:25px;height:25px;background:linear-gradient(#262626,#3e3e3e)"></div><div class="cb" style="left:1610.4px;top:932px;width:55.8px;height:37.7px;"></div><div class="ci" style="left:1627.3px;top:938.8px;width:25px;height:25px;"></div><div style="left:1351.9px;top:946.7px;width:9px;height:9px;background:#2e2e2e"></div><svg width="11" height="13" style="left:1409.8px;top:944.7px" viewBox="0 0 11 13"><path d="M0 0v13l11-6.5z" fill="#2e2e2e"/></svg><svg width="16" height="14" style="left:1461.8px;top:944.5px" viewBox="0 0 16 14"><path d="M4 1H1.2v12H4M12 1h2.8v12H12" fill="none" stroke="#2e2e2e" stroke-width="2"/><path d="M5 7h6" stroke="#2e2e2e" stroke-width="1.4" stroke-dasharray="1.6 1"/><path d="M6.2 5.2L4.2 7l2 1.8zM9.8 5.2l2 1.8-2 1.8z" fill="#2e2e2e"/></svg><svg width="15" height="7.5" style="left:1518.8px;top:947.5px" viewBox="0 0 20 10"><path d="M10 5C8 1.6 6.4 1.2 5 1.2a3.8 3.8 0 0 0 0 7.6C6.4 8.8 8 8.4 10 5s3.600-3.800 5-3.800a3.800 3.800 0 0 1 0 7.600C13.600 8.800 12 8.400 10 5z" fill="none" stroke="#2e2e2e" stroke-width="2.4"/></svg><svg width="18" height="18" style="left:1573.5px;top:942.5px" viewBox="-9 -9 18 18"><g fill="none" stroke="#1a1a1a" stroke-width="2.4"><path d="M-5.6 -1.500A5.800 5.800 0 0 1 4.600 -3.600"/><path d="M5.600 1.500A5.800 5.800 0 0 1 -4.600 3.600"/></g><path d="M6.800 -7v5.500h-5.500zM-6.800 7v-5.500h5.500z" fill="#1a1a1a"/></svg><div class="cb" style="left:1327.4px;top:971.2px;width:170px;height:37.8px;border-radius:6px 0 0 0"></div><div class="cb" style="left:1499.2px;top:971.2px;width:167px;height:37.8px;"></div><div class="ci" style="left:1353.6px;top:977.6px;width:25px;height:25px;"></div><div class="ci" style="left:1620.2px;top:977.8px;width:25px;height:25px;"></div><svg width="12" height="11" style="left:1359.5px;top:984.5px" viewBox="0 0 12 11"><path d="M5.500 .5L1 5.500l4.500 5M11 .5L6.500 5.500l4.500 5" fill="none" stroke="#2e2e2e" stroke-width="1.7"/></svg><svg width="12" height="11" style="left:1627px;top:984.8px" viewBox="0 0 12 11"><path d="M1 .5L5.500 5.500 1 10.500M6.500 .5L11 5.500l-4.500 5" fill="none" stroke="#2e2e2e" stroke-width="1.700"/></svg><span class="t" style="left:1398.4px;top:977.7px;font-size:26.4px;color:#2e2e2e;transform:scaleX(1.101);text-shadow:0 1px 0 rgba(255,255,255,.18);-webkit-text-stroke:.7px #2c2c2c;">Back</span><span class="t" style="left:1532.6px;top:977.4px;font-size:26.4px;color:#2e2e2e;transform:scaleX(1.207);text-shadow:0 1px 0 rgba(255,255,255,.18);-webkit-text-stroke:.7px #2c2c2c;">Next</span>
<!-- p_edge -->
<div style="left:0px;top:41px;width:1.5px;height:968px;background:#222"></div><div style="left:1666.5px;top:0px;width:3px;height:1009px;background:#222"></div>
</div>
</body></html>
